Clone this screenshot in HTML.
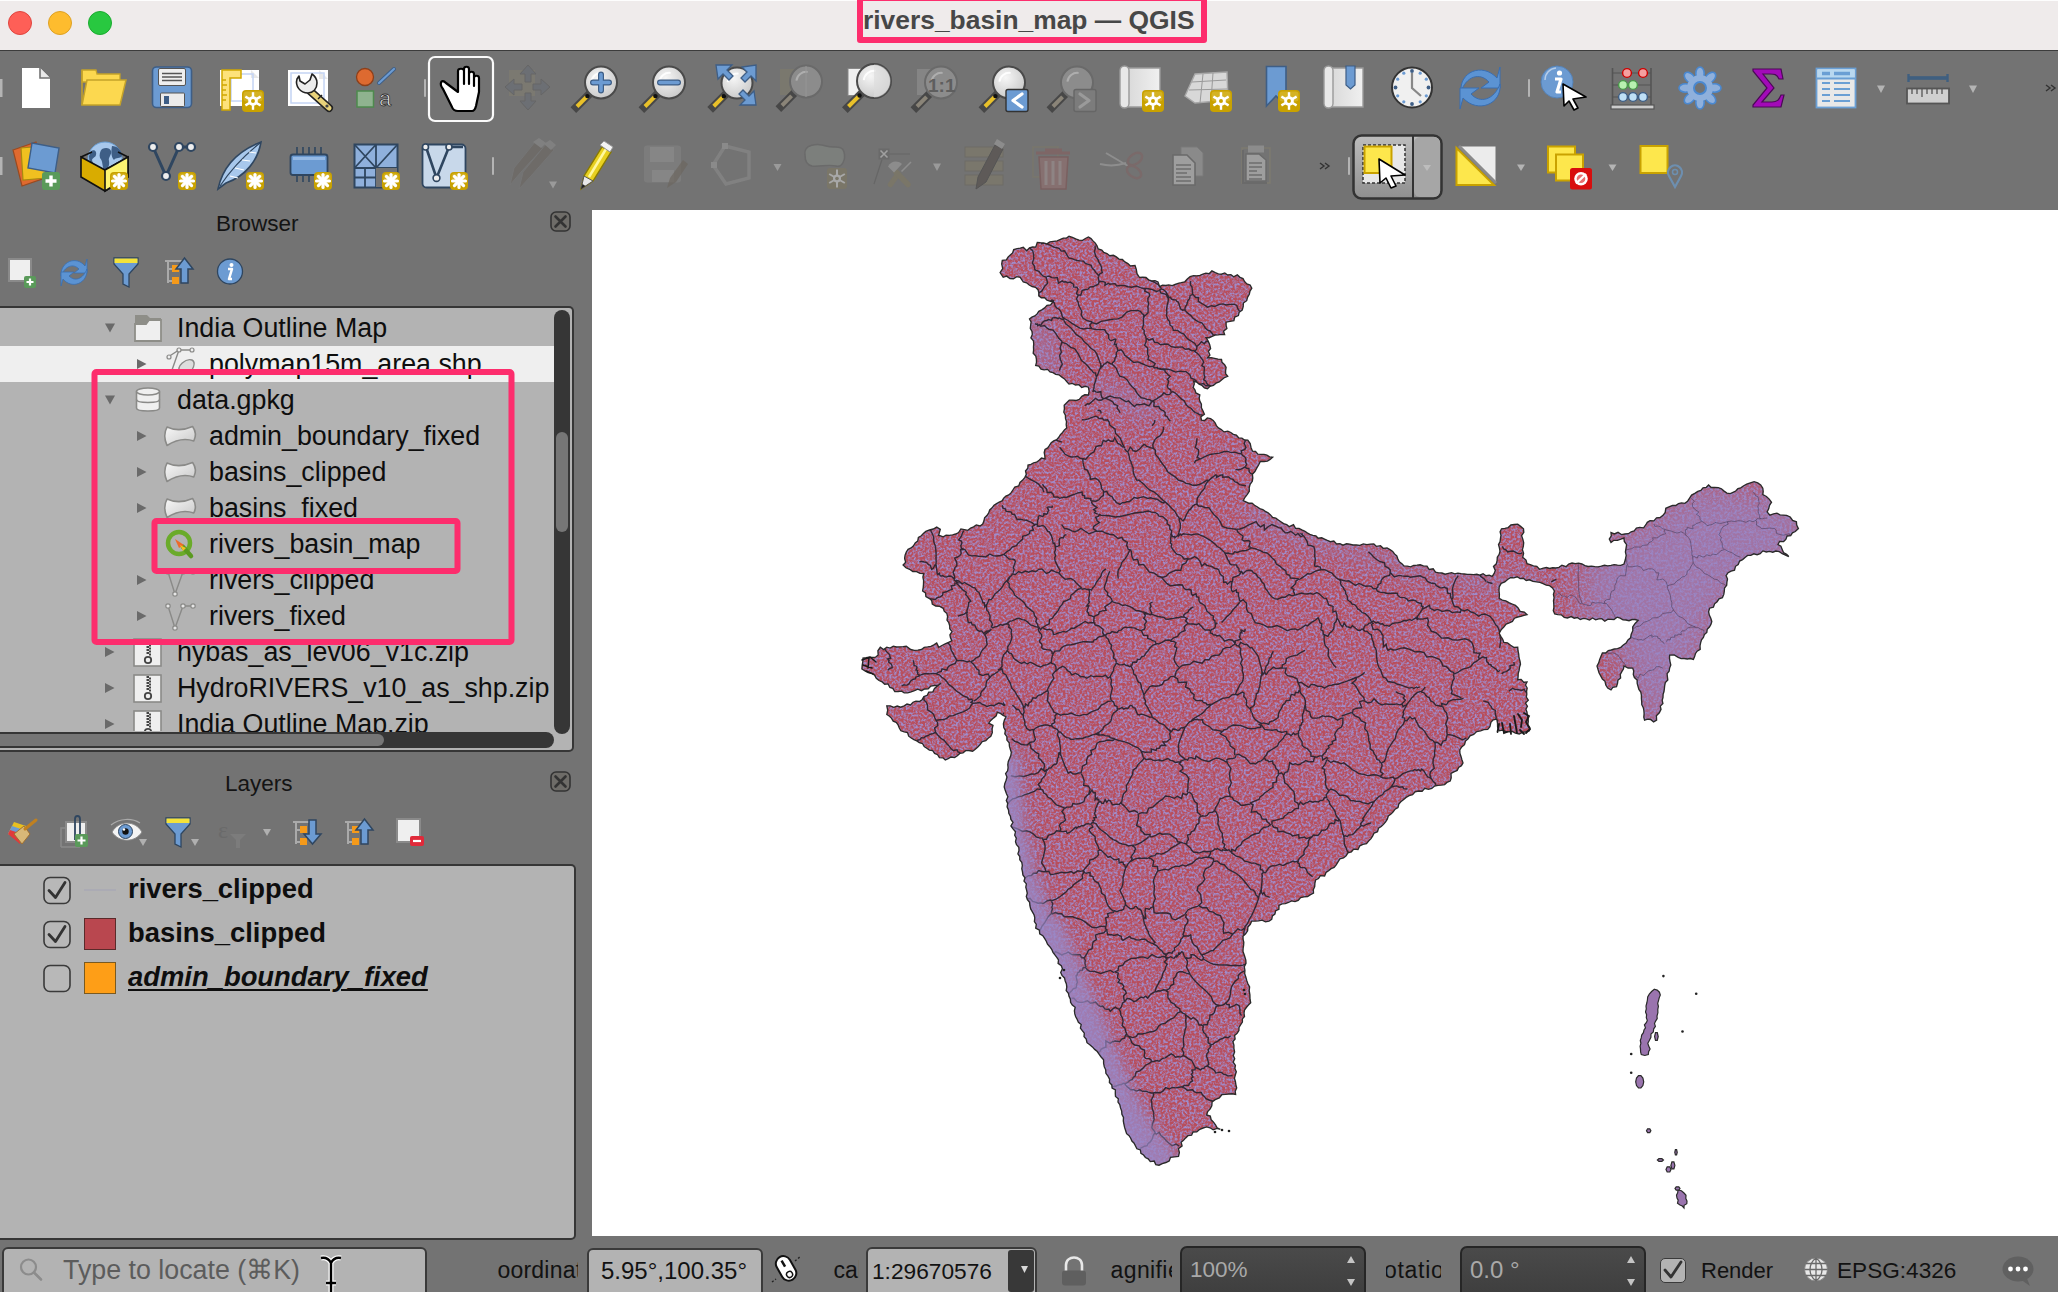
<!DOCTYPE html>
<html><head><meta charset="utf-8">
<style>
*{margin:0;padding:0;box-sizing:border-box}
html,body{width:2058px;height:1292px;overflow:hidden;background:#737373;font-family:"Liberation Sans",sans-serif}
.a{position:absolute}
.t{position:absolute;white-space:nowrap;line-height:1}
#title{left:0;top:0;width:2058px;height:51px;background:#efebeb;border-top:1px solid #fdfdfd;border-bottom:1px solid #3c3c3c}
.tl{position:absolute;width:24px;height:24px;border-radius:50%;top:9.5px}
.pink{position:absolute;border:6px solid #fd2d6d;border-radius:3px}
#map{left:592px;top:210px;width:1466px;height:1026px;background:#fff;overflow:hidden}
.tree{left:0;top:306px;width:574px;height:446px;background:#b3b3b3;border:2px solid #363636;border-left:none;border-radius:0 5px 5px 0;overflow:hidden}
.row{position:absolute;left:0;height:36px;line-height:36px;font-size:26.8px;color:#0e0e0e;white-space:nowrap}
#layers{left:0;top:864px;width:576px;height:376px;background:#b3b3b3;border:2px solid #363636;border-left:none;border-radius:0 5px 5px 0}
.lrow{position:absolute;left:128px;height:44px;line-height:44px;font-size:27.4px;font-weight:bold;color:#0e0e0e;white-space:nowrap}
.box{position:absolute;background:#b3b3b3;border:2px solid #3a3a3a;border-radius:6px}
.dbox{position:absolute;background:linear-gradient(#4a4a4a,#3c3c3c);border:2px solid #262626;border-radius:7px}
</style></head><body>
<div id="title" class="a">
  <div class="tl" style="left:8px;background:#fe5f57;border:1px solid #e0443e"></div>
  <div class="tl" style="left:48px;background:#febc2e;border:1px solid #dea123"></div>
  <div class="tl" style="left:88px;background:#28c840;border:1px solid #1aab2f"></div>
</div>
<div class="t" style="left:863px;top:7px;font-size:26.4px;font-weight:bold;color:#474747">rivers_basin_map — QGIS</div>
<div class="pink" style="left:857px;top:-5px;width:350px;height:48px"></div>

<div id="map" class="a"><svg width="1466" height="1026" style="position:absolute;left:0;top:0">
<defs>
<clipPath id="ind"><path d="M408.1,62.6 L410.7,58.7 L409.7,54.1 L410.3,50.3 L414.4,49.9 L416.0,47.1 L418.3,45.0 L420.6,42.9 L421.7,39.5 L425.2,38.6 L428.3,38.1 L431.3,37.3 L434.7,40.8 L437.5,37.8 L440.6,37.0 L443.7,37.1 L445.3,32.4 L448.4,32.7 L451.6,32.9 L454.6,34.0 L457.8,31.9 L461.4,31.3 L465.2,30.9 L468.5,29.3 L471.3,28.1 L474.5,28.1 L477.0,26.3 L480.4,27.4 L483.7,28.9 L487.0,30.1 L490.6,30.4 L493.4,28.5 L496.4,27.0 L499.0,28.6 L501.0,30.9 L503.3,33.1 L505.0,35.9 L506.2,39.0 L509.8,40.0 L511.8,42.5 L515.0,43.5 L517.7,45.7 L521.4,45.3 L524.3,46.9 L527.0,49.1 L530.4,49.5 L532.9,51.9 L535.9,53.6 L538.4,56.0 L543.0,55.4 L544.3,59.5 L545.0,63.7 L547.4,67.3 L550.7,67.2 L554.0,67.4 L556.6,69.8 L559.6,71.0 L563.0,70.7 L566.0,71.9 L567.6,76.6 L570.5,75.1 L573.8,75.5 L576.8,74.9 L580.2,75.6 L583.1,74.5 L586.1,73.4 L589.2,72.7 L592.8,71.8 L595.3,69.0 L598.1,66.7 L601.6,65.7 L604.8,65.8 L607.9,65.3 L610.9,64.2 L613.9,63.2 L617.1,63.7 L619.9,60.8 L623.3,62.6 L626.3,63.8 L629.4,64.2 L632.8,62.9 L635.6,65.0 L638.9,64.7 L641.7,66.8 L645.3,64.9 L648.0,67.3 L651.0,68.6 L652.7,71.7 L654.9,73.9 L658.1,75.0 L659.8,78.3 L658.0,81.2 L657.3,84.3 L655.5,87.3 L654.7,90.7 L651.4,93.0 L651.2,96.7 L650.2,100.1 L647.2,102.1 L646.4,105.6 L642.7,107.1 L641.9,110.6 L638.0,111.4 L634.1,112.2 L634.1,115.3 L634.9,118.6 L631.5,121.3 L632.6,124.6 L629.4,124.4 L626.3,124.9 L623.1,125.1 L620.1,126.3 L617.2,127.7 L614.0,127.6 L616.2,131.0 L617.7,134.6 L618.6,138.5 L616.4,141.2 L617.9,145.1 L615.6,147.8 L619.1,147.6 L622.6,148.3 L626.0,149.1 L629.5,149.3 L630.0,152.3 L632.6,154.6 L634.1,157.3 L633.6,160.6 L633.6,163.8 L635.7,166.3 L632.5,167.5 L629.8,169.7 L627.2,171.9 L624.0,173.2 L621.4,175.3 L618.0,176.3 L615.5,178.7 L612.4,177.8 L610.0,175.5 L607.1,174.2 L604.6,172.1 L601.6,171.0 L602.3,173.9 L601.2,177.4 L603.0,180.0 L603.9,182.9 L607.8,184.8 L607.2,188.1 L607.8,191.1 L609.4,194.2 L609.4,197.7 L610.9,200.8 L612.4,204.2 L608.9,206.8 L609.4,210.1 L612.6,210.5 L615.3,207.9 L618.6,208.6 L621.2,210.4 L623.1,212.8 L624.4,215.6 L626.4,217.9 L629.3,219.6 L632.0,221.9 L635.8,221.2 L638.8,222.5 L641.3,224.4 L644.4,225.2 L646.6,227.8 L649.9,228.2 L652.5,230.0 L655.8,230.2 L658.2,233.5 L659.0,237.4 L660.4,241.1 L663.5,241.3 L665.8,244.2 L668.9,244.3 L672.0,244.4 L674.9,245.1 L677.6,246.8 L680.6,247.3 L678.1,249.4 L675.4,251.1 L672.0,251.5 L668.3,251.5 L666.6,255.0 L664.7,258.2 L662.9,261.5 L660.4,264.3 L660.8,267.9 L660.3,271.3 L658.1,274.4 L657.2,277.8 L657.3,281.3 L655.3,284.4 L653.0,287.3 L651.2,290.6 L653.9,291.9 L656.7,293.2 L660.1,293.1 L662.5,295.2 L665.1,296.8 L667.7,298.6 L670.8,299.5 L673.3,301.4 L676.1,302.8 L678.5,304.9 L680.6,307.4 L683.8,308.2 L686.3,310.0 L688.9,311.8 L691.6,313.6 L694.7,314.7 L697.3,316.7 L701.5,314.7 L703.5,318.3 L707.0,318.3 L709.8,319.9 L712.6,321.2 L715.2,322.9 L717.9,324.3 L720.8,325.4 L723.9,325.9 L726.2,328.2 L729.7,327.8 L732.5,329.1 L735.3,330.4 L738.4,331.7 L741.8,331.1 L744.6,334.0 L747.9,333.6 L751.0,335.2 L754.5,333.8 L757.8,334.1 L760.9,335.0 L764.4,335.0 L767.9,335.3 L771.3,333.9 L774.9,334.6 L778.3,334.1 L781.8,333.9 L784.5,336.4 L788.5,335.7 L791.2,338.3 L795.0,338.0 L798.0,339.7 L800.7,341.4 L802.5,343.9 L804.8,345.9 L805.9,349.0 L807.3,351.9 L809.9,353.7 L812.0,355.9 L815.3,356.2 L818.6,356.9 L821.7,355.5 L825.0,355.2 L828.2,354.8 L831.4,355.9 L835.0,356.2 L837.2,359.5 L841.2,358.8 L843.5,362.1 L846.8,362.9 L850.0,363.0 L853.1,364.2 L856.4,363.3 L859.6,362.7 L862.7,363.9 L865.9,363.2 L869.1,363.7 L872.3,364.0 L875.4,364.3 L878.5,364.4 L881.6,364.6 L884.8,364.3 L887.8,365.2 L891.1,363.7 L894.0,365.7 L897.2,365.1 L900.2,366.4 L902.2,363.5 L903.3,360.4 L901.5,356.4 L904.3,353.8 L905.1,350.6 L905.3,347.2 L907.2,344.3 L908.0,341.2 L907.4,337.9 L906.5,334.6 L908.1,331.5 L908.5,328.4 L909.0,325.2 L908.1,321.9 L909.5,318.8 L912.9,318.4 L916.2,317.6 L918.9,315.0 L922.3,314.5 L925.7,314.1 L928.6,316.4 L931.5,318.8 L931.8,322.3 L929.6,325.7 L930.8,329.2 L931.7,332.8 L931.3,336.3 L930.4,339.7 L931.6,343.2 L930.7,347.3 L934.0,350.1 L935.0,353.6 L938.2,354.6 L941.4,355.9 L944.8,356.3 L947.5,359.3 L951.3,358.2 L954.4,357.5 L957.6,358.5 L960.7,357.8 L963.9,358.0 L967.0,357.3 L969.9,355.2 L974.0,356.7 L976.7,354.0 L980.0,353.0 L983.2,353.6 L986.6,353.2 L989.9,354.0 L992.9,355.6 L996.1,356.5 L999.5,356.2 L1002.8,356.7 L1006.1,356.8 L1009.3,356.2 L1012.5,355.3 L1015.8,355.9 L1019.0,355.4 L1022.2,354.6 L1025.5,355.1 L1028.8,355.4 L1032.0,354.0 L1033.3,349.8 L1034.2,345.4 L1033.4,342.0 L1034.0,338.4 L1034.6,334.7 L1032.3,331.5 L1032.0,328.0 L1028.8,329.2 L1025.5,330.3 L1021.9,330.3 L1019.0,332.4 L1017.3,329.1 L1019.3,325.9 L1019.0,322.6 L1022.4,323.9 L1026.0,322.3 L1029.4,324.6 L1032.9,324.0 L1036.4,323.7 L1039.1,321.8 L1042.2,321.0 L1044.4,318.1 L1047.7,317.4 L1051.6,317.9 L1053.7,315.0 L1055.3,312.3 L1058.0,310.7 L1061.9,310.9 L1064.5,307.9 L1068.1,307.5 L1071.0,305.3 L1073.2,302.4 L1073.8,298.3 L1077.6,296.6 L1080.5,295.5 L1083.7,295.5 L1086.5,293.7 L1089.5,292.9 L1092.8,293.4 L1095.6,291.2 L1097.6,288.2 L1099.6,285.1 L1102.8,283.3 L1105.8,281.4 L1108.9,280.5 L1111.0,277.8 L1114.3,277.3 L1116.6,275.0 L1119.2,277.5 L1122.8,277.5 L1126.3,277.7 L1129.4,278.8 L1132.1,281.1 L1134.9,283.1 L1138.3,283.6 L1141.0,282.3 L1143.7,281.0 L1145.9,278.7 L1148.8,277.8 L1151.3,276.0 L1154.7,274.2 L1158.4,272.9 L1162.1,271.7 L1165.7,272.9 L1168.7,274.9 L1170.8,278.2 L1171.2,281.4 L1170.8,284.7 L1174.4,286.5 L1177.2,289.1 L1179.5,292.3 L1177.5,295.3 L1176.7,298.8 L1175.1,302.0 L1177.9,305.1 L1181.5,303.9 L1184.9,303.1 L1188.0,304.9 L1191.3,305.1 L1194.6,305.3 L1198.2,307.0 L1200.6,310.5 L1204.4,311.8 L1204.7,315.1 L1206.4,318.6 L1203.3,321.5 L1200.4,322.8 L1198.7,325.7 L1195.1,326.0 L1193.8,329.4 L1191.6,331.6 L1187.6,331.5 L1186.0,334.5 L1188.9,336.3 L1190.2,339.4 L1191.5,342.6 L1194.6,344.2 L1196.8,346.5 L1193.5,345.2 L1190.3,343.7 L1187.3,341.7 L1183.8,341.0 L1180.8,342.2 L1177.4,341.4 L1174.3,342.0 L1170.9,340.9 L1168.2,343.7 L1165.1,344.7 L1161.8,343.8 L1158.8,345.3 L1155.6,345.4 L1153.0,347.4 L1150.6,349.6 L1147.6,351.1 L1146.2,354.5 L1143.5,356.3 L1142.5,360.1 L1139.1,361.1 L1136.1,362.7 L1134.1,365.5 L1135.5,369.0 L1134.9,372.1 L1134.7,375.3 L1132.5,378.1 L1132.3,381.3 L1131.8,384.4 L1130.4,387.6 L1127.0,388.9 L1125.1,391.7 L1122.6,393.8 L1121.4,397.1 L1117.6,398.2 L1116.6,401.7 L1117.3,405.1 L1118.8,408.2 L1119.8,411.5 L1118.9,414.4 L1117.4,417.0 L1115.2,419.3 L1114.8,422.4 L1112.4,424.6 L1111.4,427.5 L1109.5,429.9 L1108.6,432.8 L1108.0,435.9 L1108.2,439.3 L1105.1,441.2 L1103.4,443.7 L1102.6,446.6 L1101.4,449.4 L1098.4,448.5 L1095.3,449.0 L1092.2,448.5 L1089.1,448.6 L1086.2,447.3 L1082.2,445.0 L1077.6,445.1 L1077.5,448.4 L1078.0,451.6 L1078.8,454.9 L1077.6,458.1 L1077.1,461.1 L1075.1,463.7 L1075.4,466.8 L1075.8,470.0 L1073.3,472.6 L1072.7,475.5 L1072.4,478.5 L1072.0,481.5 L1071.1,484.4 L1071.0,487.4 L1070.2,490.3 L1070.9,493.6 L1068.3,496.1 L1069.0,499.3 L1067.3,502.8 L1064.4,505.8 L1064.6,510.1 L1061.6,511.9 L1058.6,509.5 L1055.6,509.2 L1052.6,510.1 L1051.8,507.1 L1052.1,503.9 L1051.9,500.7 L1051.3,497.7 L1049.8,494.7 L1049.7,491.6 L1049.4,488.5 L1049.4,485.2 L1048.8,482.1 L1046.9,479.4 L1046.0,476.3 L1045.2,473.3 L1045.1,470.0 L1042.4,467.5 L1041.3,464.5 L1041.7,461.1 L1040.7,458.1 L1036.1,458.0 L1032.0,456.0 L1031.4,459.1 L1029.8,461.7 L1028.3,464.5 L1028.6,467.9 L1025.9,470.2 L1025.5,473.3 L1024.5,476.6 L1020.8,477.3 L1019.0,479.8 L1015.7,478.0 L1013.8,475.1 L1013.0,471.3 L1010.4,469.0 L1008.7,465.9 L1007.0,462.8 L1006.0,459.4 L1005.0,456.0 L1006.7,452.9 L1007.7,449.5 L1009.0,446.2 L1010.4,443.0 L1013.7,443.0 L1016.3,440.6 L1019.3,440.0 L1022.3,439.0 L1025.5,438.6 L1028.8,437.3 L1031.3,435.0 L1034.1,433.0 L1036.0,429.9 L1038.6,427.8 L1039.2,424.1 L1040.8,420.7 L1040.7,416.9 L1043.1,413.4 L1046.1,410.4 L1043.1,409.5 L1040.1,409.5 L1037.0,410.7 L1034.1,410.0 L1031.0,409.9 L1028.1,408.1 L1025.1,407.2 L1022.0,409.5 L1019.0,409.3 L1015.9,409.2 L1012.8,411.2 L1009.8,408.8 L1006.7,408.9 L1003.6,409.8 L1000.6,408.0 L997.5,410.1 L994.5,408.8 L991.4,408.4 L988.3,409.5 L985.3,407.5 L982.2,408.2 L979.2,406.6 L975.4,408.0 L972.2,407.3 L969.3,404.8 L965.9,404.6 L962.7,403.9 L961.3,400.7 L961.9,397.4 L961.8,394.2 L961.5,390.9 L962.1,387.6 L961.4,384.4 L962.4,381.0 L960.5,377.9 L957.6,375.6 L954.2,375.2 L951.1,373.7 L947.9,372.4 L944.5,371.9 L941.0,371.4 L937.4,369.8 L934.2,370.5 L931.3,368.3 L928.1,368.6 L925.2,366.8 L921.9,367.8 L918.8,367.5 L915.6,369.5 L912.8,371.9 L909.2,373.3 L907.2,376.8 L907.0,380.7 L907.4,384.5 L907.2,388.4 L910.3,390.1 L913.8,390.8 L916.9,392.7 L920.2,394.0 L923.4,395.4 L926.1,397.9 L928.1,401.4 L932.3,402.1 L935.0,404.7 L931.9,405.4 L928.8,406.4 L925.7,407.0 L922.5,408.2 L920.4,411.4 L917.3,412.8 L914.1,414.0 L911.8,417.1 L909.1,419.8 L907.2,423.2 L908.8,426.3 L910.7,429.2 L911.8,432.5 L915.5,432.9 L918.6,435.3 L921.8,437.3 L925.7,437.2 L926.0,440.7 L926.7,444.2 L927.0,447.7 L928.0,451.1 L928.5,454.3 L927.5,457.3 L927.1,460.4 L926.2,463.5 L926.1,466.6 L925.7,469.7 L929.1,469.4 L931.7,472.2 L935.0,472.0 L933.5,475.0 L935.2,478.0 L934.6,481.1 L934.8,484.1 L934.3,487.1 L936.3,490.1 L933.5,493.1 L935.4,496.2 L933.9,499.2 L935.0,502.2 L935.3,505.3 L936.1,508.4 L936.3,511.5 L935.8,514.7 L937.8,517.6 L937.4,520.8 L934.0,521.7 L930.5,522.4 L927.2,524.0 L923.4,523.1 L920.3,521.5 L917.0,521.7 L913.7,521.7 L910.6,520.2 L907.2,520.8 L905.6,517.1 L905.5,513.1 L904.8,509.2 L901.2,509.9 L898.9,512.3 L897.9,516.6 L895.7,519.4 L891.8,519.6 L888.6,520.8 L884.7,521.6 L881.7,524.5 L878.0,525.8 L876.1,528.7 L873.5,531.1 L872.5,534.7 L869.7,537.0 L867.8,539.9 L867.9,543.3 L869.0,546.5 L869.9,549.7 L871.0,552.9 L869.4,555.7 L866.6,557.4 L865.2,560.4 L861.9,561.8 L859.0,563.5 L859.2,567.8 L858.2,571.0 L854.9,572.4 L852.6,574.6 L849.3,575.1 L845.9,575.3 L842.6,576.1 L839.8,578.5 L836.5,579.3 L832.8,578.3 L830.1,581.2 L826.6,581.0 L823.1,581.9 L820.6,584.7 L817.1,585.6 L814.1,587.4 L811.4,589.7 L808.8,591.7 L806.8,594.1 L806.0,597.5 L803.1,599.2 L801.2,601.8 L799.0,604.1 L796.3,606.0 L795.3,609.2 L793.6,611.9 L791.5,614.4 L789.2,616.5 L786.5,618.3 L785.5,621.7 L782.1,623.0 L780.7,625.9 L779.0,628.6 L776.8,630.9 L774.5,633.7 L770.9,634.3 L767.8,635.8 L766.0,639.5 L761.7,639.1 L759.4,641.8 L755.9,642.8 L754.1,645.9 L751.5,648.0 L747.9,648.8 L746.0,651.8 L744.2,654.8 L742.1,657.4 L739.1,658.6 L736.6,660.6 L734.0,662.5 L732.6,666.0 L728.3,665.7 L726.5,668.6 L723.6,670.0 L722.9,673.2 L722.7,676.5 L721.3,679.6 L721.5,683.0 L718.5,684.7 L715.6,686.5 L712.0,686.9 L708.6,687.6 L706.2,690.4 L703.0,691.6 L699.5,690.9 L696.5,692.5 L693.3,693.7 L690.0,693.8 L687.0,695.4 L686.9,699.2 L683.7,700.7 L682.9,704.0 L680.4,705.9 L679.7,709.3 L677.0,711.1 L673.5,711.9 L670.1,710.1 L666.6,710.9 L663.2,711.1 L659.7,711.1 L658.3,714.3 L655.9,717.0 L655.6,720.8 L653.6,723.8 L651.0,726.3 L651.1,729.3 L651.8,732.4 L651.6,735.4 L651.1,738.5 L651.0,741.5 L652.5,745.7 L653.8,750.0 L654.0,753.4 L652.3,756.8 L652.9,760.2 L652.7,763.6 L653.8,767.0 L654.7,770.4 L655.9,773.7 L657.6,776.9 L657.2,780.6 L657.9,784.9 L658.0,789.2 L658.7,792.7 L656.4,795.0 L654.3,797.5 L652.5,800.0 L652.0,803.1 L652.5,806.5 L650.4,808.9 L650.4,812.1 L648.7,814.7 L647.0,817.4 L646.9,820.6 L645.1,823.2 L642.6,825.6 L643.1,829.0 L640.9,831.5 L641.9,835.1 L641.9,838.5 L642.6,841.9 L641.3,845.4 L642.7,848.8 L641.2,852.1 L643.4,855.3 L642.9,858.5 L644.3,861.7 L643.3,865.0 L642.4,868.3 L643.4,871.5 L643.9,874.8 L644.7,878.0 L643.2,881.3 L643.6,884.5 L640.2,883.8 L636.8,884.0 L633.4,884.3 L630.0,884.5 L627.3,888.0 L623.2,889.6 L620.1,891.9 L619.8,895.8 L618.2,898.9 L615.7,901.6 L614.6,905.0 L618.3,906.1 L619.2,909.8 L621.5,912.1 L623.5,914.8 L625.1,917.8 L628.3,919.4 L625.0,918.4 L621.2,919.8 L618.0,917.8 L614.6,916.9 L611.1,918.0 L607.8,919.3 L604.8,921.8 L601.0,922.0 L599.6,925.2 L595.9,925.7 L593.7,927.9 L591.5,930.2 L589.1,932.2 L590.1,935.9 L586.4,938.7 L587.4,942.4 L586.5,946.5 L582.5,946.9 L578.5,947.3 L577.2,950.9 L573.9,952.5 L570.3,953.6 L567.0,955.2 L563.8,954.6 L562.2,951.1 L558.3,951.6 L556.2,948.8 L553.4,947.5 L551.6,945.0 L548.9,943.3 L548.4,939.9 L544.9,938.8 L543.5,936.0 L542.1,933.2 L539.9,931.1 L538.7,928.2 L537.1,925.6 L534.6,923.7 L533.6,920.5 L532.6,917.4 L531.9,914.1 L531.3,910.9 L531.5,907.4 L529.9,904.4 L529.7,901.1 L528.5,897.9 L527.8,894.7 L526.0,892.1 L526.3,888.7 L523.5,886.5 L523.3,883.4 L523.4,880.0 L520.1,878.1 L519.8,874.9 L517.4,872.6 L517.6,869.2 L516.0,866.2 L513.9,863.3 L513.7,859.8 L512.3,856.7 L511.6,853.3 L511.6,849.7 L509.1,847.0 L507.2,844.3 L505.3,841.5 L502.7,839.4 L500.4,836.9 L497.8,834.7 L495.0,832.7 L494.2,829.1 L492.0,826.6 L492.3,823.2 L490.3,820.7 L488.4,818.1 L489.2,814.6 L486.4,812.3 L485.2,809.5 L483.7,806.8 L482.8,803.9 L482.4,800.8 L483.2,797.2 L480.3,795.0 L478.6,792.4 L478.4,789.2 L477.0,786.3 L476.4,783.2 L474.2,780.6 L474.8,777.1 L474.4,773.9 L473.2,771.0 L472.5,767.9 L470.0,765.4 L468.7,762.5 L470.4,758.7 L469.3,755.7 L466.1,753.4 L466.5,750.0 L464.8,747.3 L462.9,744.9 L461.0,742.3 L459.7,739.3 L457.8,736.7 L455.5,734.2 L454.3,731.2 L452.6,728.4 L450.8,725.7 L447.7,723.8 L447.4,720.2 L443.7,718.1 L444.3,714.3 L442.4,711.6 L442.8,707.9 L442.0,704.7 L440.4,701.8 L438.7,698.9 L437.9,695.7 L437.6,692.3 L435.4,689.6 L434.3,686.6 L435.3,683.3 L434.6,680.2 L433.8,677.2 L434.4,673.9 L432.0,671.1 L433.0,667.8 L430.9,664.9 L430.5,661.8 L429.8,658.7 L430.3,655.5 L429.8,652.4 L427.8,649.8 L427.8,646.6 L425.9,643.9 L427.0,640.4 L426.8,637.2 L424.5,634.6 L423.5,631.7 L424.3,628.2 L422.7,625.2 L423.5,621.8 L421.0,618.9 L418.9,616.0 L421.0,612.3 L418.9,609.4 L418.4,606.2 L416.8,603.2 L416.5,599.9 L415.1,596.9 L415.7,593.4 L414.3,590.4 L415.9,586.7 L414.5,583.7 L413.3,580.6 L412.2,577.0 L412.8,573.6 L414.1,570.3 L415.0,567.0 L413.6,563.7 L415.6,560.8 L416.1,557.7 L415.8,554.6 L416.3,551.5 L417.6,548.5 L418.8,545.5 L419.3,542.4 L418.3,539.2 L417.4,536.1 L417.2,532.8 L414.9,530.1 L414.9,526.7 L412.8,523.9 L413.4,520.4 L411.8,517.5 L411.4,513.7 L412.4,510.1 L414.0,506.7 L411.1,505.3 L408.4,503.4 L405.3,502.4 L404.2,505.9 L401.4,508.1 L398.8,510.4 L396.7,513.2 L401.0,515.3 L400.1,518.9 L400.3,522.7 L398.8,526.2 L396.1,528.3 L393.8,530.7 L390.2,531.7 L388.1,534.5 L385.8,537.0 L383.3,539.3 L380.6,541.2 L376.9,540.5 L373.6,540.7 L371.0,542.8 L367.8,543.4 L365.3,545.7 L362.6,547.6 L359.0,547.0 L356.2,548.7 L353.3,550.0 L351.0,547.8 L347.4,547.6 L345.6,544.7 L342.6,543.5 L340.7,540.7 L337.4,540.1 L334.8,538.3 L332.2,536.6 L330.5,533.5 L327.3,532.7 L324.8,530.9 L321.9,529.6 L319.2,528.0 L316.7,526.2 L315.5,522.5 L312.2,521.8 L308.9,520.8 L307.3,518.0 L306.1,514.9 L304.2,512.4 L301.2,511.1 L299.6,508.3 L297.5,506.2 L294.8,504.5 L295.7,500.1 L294.8,495.8 L298.3,495.8 L301.8,497.3 L305.2,496.0 L308.7,497.2 L312.2,495.8 L315.0,494.0 L318.5,494.9 L321.0,492.2 L323.9,491.1 L327.3,491.5 L330.1,489.7 L331.9,486.6 L335.2,485.3 L336.8,482.1 L340.9,481.8 L342.5,478.5 L345.8,475.8 L349.0,473.1 L346.1,475.3 L342.4,475.5 L338.9,476.1 L336.2,478.8 L332.6,479.0 L329.5,480.7 L325.8,479.2 L322.5,480.7 L319.1,481.9 L315.7,482.8 L312.2,482.8 L309.6,481.1 L306.1,481.5 L302.8,481.6 L300.8,478.4 L297.9,477.5 L296.1,473.9 L292.7,474.2 L290.2,471.9 L287.0,470.5 L284.3,468.4 L282.6,465.1 L279.7,463.3 L276.2,462.5 L273.0,460.9 L269.9,459.0 L270.2,455.4 L270.8,451.8 L271.0,448.2 L274.1,447.7 L277.1,447.1 L280.4,447.5 L283.5,447.2 L286.2,445.0 L285.9,440.8 L288.3,437.3 L291.6,439.6 L294.8,437.2 L298.1,438.1 L301.3,436.2 L304.6,437.0 L307.8,436.8 L311.1,436.6 L314.3,436.3 L318.7,439.5 L322.3,440.3 L325.9,440.1 L329.5,439.5 L332.2,437.4 L335.6,436.9 L338.9,436.3 L341.9,434.9 L344.7,433.0 L346.8,437.3 L349.9,435.5 L353.2,433.9 L356.5,432.4 L359.8,430.8 L358.5,427.9 L357.9,424.9 L360.0,421.5 L357.8,418.8 L357.7,415.7 L356.8,412.7 L355.0,410.1 L355.6,406.6 L354.9,403.5 L352.2,401.2 L351.2,398.3 L347.8,396.4 L343.7,396.0 L340.3,394.0 L339.7,390.4 L337.1,388.3 L333.9,386.6 L333.5,382.9 L330.6,381.0 L331.2,377.6 L331.5,374.1 L331.6,370.6 L330.9,367.1 L331.7,363.7 L328.0,363.4 L324.6,361.6 L320.8,361.5 L317.6,359.3 L313.9,357.8 L311.1,355.0 L313.7,352.2 L312.6,348.5 L313.1,345.1 L314.3,342.0 L316.1,339.3 L319.1,337.9 L321.5,335.8 L323.2,333.0 L325.7,331.1 L326.4,327.4 L329.3,325.8 L331.4,323.4 L333.8,321.4 L337.5,320.0 L341.3,319.0 L344.7,317.1 L348.3,319.3 L346.6,325.2 L351.2,326.8 L354.1,325.2 L357.4,325.4 L360.6,324.9 L363.7,324.0 L366.6,322.6 L368.9,318.9 L372.4,319.6 L375.9,320.3 L378.6,318.0 L381.6,316.9 L384.3,314.9 L388.0,316.0 L390.7,314.1 L391.9,311.1 L392.6,307.8 L394.9,305.6 L396.7,303.0 L397.7,299.9 L400.1,297.8 L402.0,295.3 L404.6,293.7 L407.2,292.2 L410.0,290.9 L411.7,288.3 L413.9,286.1 L416.8,285.0 L419.0,282.9 L420.9,280.0 L422.8,277.0 L426.7,275.9 L428.0,272.4 L430.7,270.1 L432.9,267.4 L434.3,264.4 L433.5,261.0 L435.8,258.2 L436.0,255.0 L439.0,254.4 L441.6,252.9 L444.6,252.2 L447.1,250.2 L449.5,248.0 L453.0,248.8 L452.8,245.7 L452.2,242.6 L453.0,239.5 L455.7,237.9 L457.5,235.4 L459.2,232.7 L461.7,230.9 L464.7,229.6 L466.8,227.3 L468.4,224.6 L470.6,222.5 L472.4,219.9 L474.7,217.9 L474.2,214.7 L474.5,211.5 L473.5,208.4 L473.4,205.2 L471.8,202.2 L472.4,198.9 L472.2,195.3 L474.7,192.7 L477.3,190.2 L480.8,190.1 L484.4,190.5 L487.5,189.3 L489.9,186.4 L492.8,184.8 L496.4,185.0 L497.1,181.1 L496.4,177.2 L493.2,176.3 L489.7,177.4 L486.9,174.7 L483.5,175.0 L480.4,173.4 L477.0,174.1 L474.7,171.5 L472.5,168.9 L469.6,166.9 L466.9,164.8 L463.7,164.4 L461.0,162.7 L458.0,161.9 L455.6,159.4 L452.1,159.8 L449.0,159.1 L446.8,156.1 L443.7,155.5 L444.5,152.3 L444.4,149.2 L443.8,146.1 L441.2,143.2 L441.6,140.1 L441.5,136.9 L441.7,133.8 L441.4,130.7 L438.9,127.9 L440.3,124.5 L440.0,121.4 L438.3,118.4 L438.7,115.2 L439.1,111.9 L437.5,109.0 L439.9,107.1 L442.8,105.9 L445.1,103.9 L446.8,101.3 L449.8,99.8 L452.6,97.9 L455.0,95.4 L458.6,94.8 L460.8,92.0 L457.8,91.2 L455.0,90.1 L452.7,87.7 L449.3,87.7 L446.8,85.9 L446.8,82.7 L446.0,79.7 L443.5,77.3 L440.2,76.5 L437.2,75.0 L434.6,72.8 L431.3,72.0 L428.2,67.3 L424.8,66.6 L421.4,68.7 L418.0,68.5 L414.6,66.1 L411.2,67.3Z"/></clipPath>
<filter id="tex" x="0" y="0" width="100%" height="100%" color-interpolation-filters="sRGB">
<feTurbulence type="fractalNoise" baseFrequency="0.42" numOctaves="2" seed="5" result="n"/>
<feColorMatrix in="n" type="matrix" values="1 0 0 0 0 1 0 0 0 0 1 0 0 0 0 0 0 0 0 1"/><feComponentTransfer><feFuncR type="linear" slope="3.0" intercept="-1.16"/></feComponentTransfer><feColorMatrix type="matrix" values="-0.0941 0 0 0 0.7216 0.2431 0 0 0 0.3059 0.4353 0 0 0 0.3608 0 0 0 0 1"/>
</filter>
<filter id="bl" x="-50%" y="-50%" width="200%" height="200%"><feGaussianBlur stdDeviation="10"/></filter><filter id="bl3" x="-50%" y="-50%" width="200%" height="200%"><feGaussianBlur stdDeviation="6"/></filter><filter id="bl2" x="-50%" y="-50%" width="200%" height="200%"><feGaussianBlur stdDeviation="18"/></filter>
</defs>
<g clip-path="url(#ind)">
<rect x="260" y="20" width="960" height="970" filter="url(#tex)"/>
<g fill="none" stroke="#9484c4" stroke-linecap="round" opacity="0.5" filter="url(#bl)"><polyline points="411,550 418,620 430,670 450,725 480,800 508,870 530,920 558,952" stroke-width="30"/><polyline points="443,110 458,160" stroke-width="22"/><polyline points="508,180 558,200" stroke-width="16"/><polyline points="658,305 738,335 808,355 888,370 948,375" stroke-width="12"/></g>
<path d="M988,350 L1108,270 L1228,290 L1208,350 L1138,390 L1108,450 L1073,520 L1048,520 L1028,440 L988,410 Z" fill="#9784c2" opacity="0.72" filter="url(#bl2)"/>
<path d="M467.6,237.2 470.5,240.7 473.1,244.3 476.2,245.8 479.2,247.0 482.4,246.9 485.6,246.2 487.8,248.1 490.5,248.7M489.9,209.7 492.6,209.9 496.2,208.8 500.2,207.3 503.8,206.2 505.7,207.1 507.0,208.6 510.4,208.2 511.7,210.1 515.6,209.8 517.1,212.0 517.9,215.2 520.4,217.1 523.0,219.0 523.5,223.4 526.0,225.7 528.2,228.2 529.7,231.6 531.1,235.2 532.7,238.2M532.5,236.9 530.4,236.9 528.0,234.3 525.8,233.5 522.7,227.8 521.1,231.2 518.8,231.3 516.2,229.8 514.0,231.6 511.3,230.4 509.5,235.8 506.8,235.8 504.1,236.6 501.9,241.9 499.1,243.5 496.4,246.1 493.7,249.5 490.5,248.3M469.6,314.3 470.9,316.3 472.6,318.8 474.7,318.8 477.0,319.3 479.8,320.9 482.7,321.7 485.7,320.6 488.9,318.4 492.8,321.0 497.0,323.8 500.8,322.3 504.9,320.9M526.2,368.5 525.8,364.4 526.2,360.2 528.6,356.6 529.9,352.3 533.2,348.6 535.8,344.5 537.7,339.9M505.0,321.2 510.1,321.1 513.6,323.0 517.5,324.2 521.4,324.7 523.9,326.7 526.1,328.5 530.0,327.4 531.0,329.7 532.6,330.6 533.9,331.6 535.4,332.2 534.6,335.6 535.5,336.9 536.0,339.1 537.9,340.0M450.5,274.2 452.2,276.9 454.5,278.8 455.2,282.4 459.3,282.2 461.1,284.3 462.0,287.1 465.7,286.9 467.6,288.3 471.9,287.0 474.4,287.5 479.0,285.5 482.8,284.2 486.8,282.7 490.1,282.0 490.4,285.2 492.7,285.8 492.8,288.3 495.9,288.3 498.8,288.7 498.9,291.0M505.2,321.3 501.3,318.7 501.8,316.3 505.0,314.2 507.5,312.4 504.9,310.6 504.8,309.0 503.6,307.4 506.1,306.4 507.0,305.3 507.7,304.1M500.1,290.6 499.6,292.6 500.8,294.3 502.6,295.9 504.9,297.5 501.6,299.6 503.8,301.1 502.5,302.8 505.7,304.1M490.8,248.1 491.0,252.4 491.8,255.9 492.7,259.2 495.3,260.1 496.6,262.9 498.0,265.6 498.4,269.3 503.4,268.3 506.1,269.9 508.1,272.4 509.2,275.5 509.6,278.8 511.7,281.1M498.9,290.7 503.9,291.2 506.9,289.8 508.8,287.2 511.5,285.3 511.5,280.4M538.5,339.2 539.4,342.0 539.9,346.3 541.4,349.9 545.7,349.3 546.9,355.0 551.5,354.4 554.3,358.1 557.4,362.1 561.7,362.8 565.5,365.4M624.9,413.1 623.0,413.0 622.8,410.6 621.2,409.4 621.3,405.9 619.0,404.8 617.2,403.0 615.0,401.4 614.0,398.4 612.8,395.6 610.6,394.0 608.3,392.9 607.0,390.8 606.7,387.2 604.5,386.7 604.0,383.8 600.6,385.5 599.4,383.7 599.1,380.0 597.0,379.3 594.0,379.8 591.9,378.1 590.3,375.0 587.0,374.7 582.8,375.2 578.3,375.7 575.0,373.6 572.2,370.5 569.4,367.3 565.1,365.9M826.7,409.0 830.2,409.1 835.5,408.1 836.4,410.8 835.5,415.3 837.6,417.7 839.2,421.1 843.5,422.5 846.7,425.0 849.5,428.1 856.1,427.8 860.3,429.7 865.9,430.1 872.9,428.8 877.0,430.1 879.8,432.4 881.2,435.8 882.0,439.0 881.9,442.6 885.0,443.0 888.2,443.2 886.3,447.3 887.5,448.6M825.7,410.1 824.2,407.6 819.7,410.5 817.8,409.4 814.4,410.7 812.0,410.5 808.6,412.1 805.9,412.7 803.3,412.9 800.5,413.5 797.1,416.3 795.0,415.4 792.6,415.7 790.6,413.8 788.3,414.0 786.0,412.1 783.8,413.0 781.4,411.0 779.4,412.0M778.7,411.6 781.0,413.4 779.9,414.0M779.5,414.0 781.0,419.2 782.9,419.8 785.2,419.1 787.0,420.1 788.6,421.5 789.7,423.8 791.0,425.4 790.9,429.7 791.3,432.8 791.4,436.8 794.2,434.4 794.8,437.8 796.0,440.2 798.9,438.8 801.1,440.0 804.1,439.9 808.1,438.4 812.0,437.8 815.6,438.7 819.3,440.0 822.9,441.9 827.8,441.5 832.1,442.7 834.7,447.0 839.9,446.4 843.7,447.9 847.4,449.4 849.6,452.3 850.8,455.9 854.1,456.5 856.1,458.3 857.5,460.2 859.2,461.6 861.6,462.2 862.0,464.4M862.5,463.9 865.8,462.5 869.0,460.1 872.3,458.6 875.5,457.9 878.6,456.6 881.7,452.8 884.7,451.2 887.6,448.7M827.7,476.8 825.5,477.8 824.5,477.0 821.7,478.5 820.0,477.4 817.1,478.1 814.6,477.1 811.7,476.1 808.7,474.9 805.3,474.3 802.3,472.5 799.0,472.0 795.9,471.5 793.7,468.1 791.2,467.1 789.7,463.3 788.4,459.4 787.0,457.7 786.0,454.9 785.3,452.1 784.8,448.6 784.5,444.4 784.2,440.4 783.4,438.0 782.2,436.9 781.5,432.5 780.3,429.7 779.3,424.8 777.2,423.7 775.2,421.4 772.6,421.1 770.3,418.7M869.3,487.9 866.2,486.3 862.6,485.0 859.3,483.7 860.2,480.9 859.4,478.8 859.2,476.6 860.1,473.9 860.5,471.5 862.2,468.6 861.8,466.5 861.3,464.5M771.2,420.5 772.0,417.4 773.3,415.1 775.5,414.9 777.0,413.1 779.3,413.1M908.1,460.5 906.0,461.6 904.1,459.0 902.5,458.1 901.1,457.1 899.7,456.3 898.8,454.8 897.0,454.7 896.3,452.9 895.1,452.0 894.4,450.3 894.6,447.5 892.6,447.7 891.0,446.9 887.1,449.1M798.2,363.2 797.4,365.5 792.8,366.6 790.5,368.4 789.1,370.6 789.0,373.1 786.1,374.6 785.9,376.9 784.2,378.7M798.6,362.8 800.5,365.0 802.3,366.9 807.1,365.4 810.0,365.9 812.9,366.2 816.0,366.2 818.3,367.3 821.7,366.8 824.9,366.3 828.2,365.8 830.7,367.1 833.4,368.1 835.1,371.0 837.5,372.5 840.0,373.3 842.8,373.4 844.3,375.6 846.2,376.7 848.0,377.7 850.0,377.9 852.5,377.1 853.8,378.0 855.2,378.4 855.3,381.5 855.9,383.4 857.2,383.4 858.4,383.5 858.7,387.3 859.7,389.3M784.5,378.9 785.2,380.9 787.7,382.1 792.0,382.5 795.1,383.5 800.5,383.3 805.2,383.2 806.1,385.7 808.2,387.4 812.3,387.6 814.9,388.9 816.2,390.9 821.2,390.0 823.7,390.8 825.2,392.3 827.3,393.0 829.6,393.5 829.2,396.0 831.0,396.7 829.9,399.8M830.1,399.5 833.9,397.3 837.5,395.3 838.2,398.3 840.3,399.3 842.4,400.4 845.4,399.4 847.7,400.1 850.1,401.4 852.6,400.9 855.0,400.3 857.4,400.7 860.4,402.8 862.7,402.1 865.2,401.9 868.3,402.5 869.3,399.7M859.8,389.2 860.8,392.9 862.4,396.5 866.0,397.0 869.0,399.8M866.1,365.6 865.2,367.4 863.9,368.9 863.1,370.8 862.4,372.8 861.5,374.5 861.0,376.7 860.5,378.9 860.6,381.9 860.9,385.0 860.9,387.8 859.6,389.6M776.4,341.9 779.3,344.3 781.6,347.1 784.6,349.5 787.9,351.5 792.6,352.8 793.0,356.2 796.2,357.9 798.3,360.1 798.1,363.3M747.1,369.4 748.8,371.4 748.5,373.6 749.5,375.7 751.3,377.5 752.1,379.6 753.6,381.2 753.6,383.6 754.9,385.2 755.4,387.3 755.5,389.7 757.1,391.0 758.8,392.1 760.0,394.1 762.7,394.6 764.3,396.4 765.7,398.9 768.2,400.3 770.2,402.6 773.4,403.7 775.7,405.9 777.8,408.5 779.4,411.7M746.7,369.3 749.1,369.9 751.6,370.5 754.1,371.1 756.8,370.8 759.2,372.4 761.4,374.0 763.5,375.4 767.0,373.5 769.3,374.3 771.4,375.5 773.8,376.3 777.0,375.9 779.6,376.6 781.3,378.7 784.8,378.5M826.3,409.5 825.3,406.7 827.8,403.1 830.1,399.6M908.2,438.0 907.8,437.5 908.2,434.4 908.8,429.4 908.3,427.9 908.0,423.3 907.0,420.0 905.5,416.4 903.7,414.8 901.3,410.4 898.3,406.5 895.4,405.2 892.4,404.0 889.5,404.6 886.6,406.2 882.6,403.1 879.1,402.0 875.4,399.5 872.4,401.0 869.2,399.6M629.6,412.5 631.3,410.7 633.2,408.8 634.9,406.6 637.1,404.8 639.1,402.7 641.0,399.8 643.2,397.6 645.4,395.0 647.7,392.2M744.1,457.5 741.6,454.9 739.9,452.1 738.0,449.0 736.1,445.8 736.4,442.5 736.4,438.9 733.2,435.4 732.3,431.8 732.1,428.1 732.3,424.3M647.7,391.8 651.1,389.7 652.6,391.5 654.6,393.1 654.5,398.8 656.1,402.3 659.4,403.7 661.0,408.5 663.3,412.8 667.6,413.6 671.7,414.8 675.4,417.0 679.9,417.0 684.9,415.5 688.6,417.0 692.0,418.9 695.3,420.7 699.5,419.2 703.1,418.9 705.8,420.0 709.5,418.0 713.5,415.1 715.5,415.9 719.5,412.4 722.6,410.7 726.2,407.7 727.2,410.2 728.0,412.8 729.9,413.8 728.9,419.6 731.0,420.9 731.4,425.2M770.3,418.7 768.4,420.2 766.1,420.3 763.2,418.0 760.4,415.6 758.7,417.9 756.4,417.0 754.4,416.7 752.2,413.1 750.5,416.8 748.6,414.7 746.9,410.7 745.4,408.3M732.0,424.5 735.9,426.3 737.7,423.1 739.9,421.3 741.7,419.0 742.3,413.4 743.9,411.8 744.9,408.5M565.6,365.8 570.2,367.4 573.9,366.4 576.8,363.3 580.4,361.7 584.1,360.1 588.8,360.2 590.2,354.8 593.8,353.0 595.7,349.0M648.2,391.4 647.3,389.6 647.0,387.4 646.3,385.5 646.4,382.9 644.6,382.4 644.3,379.9 640.6,381.9 639.5,380.2 639.2,377.1 639.9,372.7M640.4,371.9 638.3,371.6 635.5,374.2 633.9,372.1 631.7,372.5 631.2,366.4 629.4,365.5 627.9,363.4 626.7,359.7 624.9,358.8 622.8,358.6 621.0,357.1 619.0,356.3 616.9,355.9 614.7,355.3 612.8,353.4 609.8,356.1 608.0,351.3 605.5,348.4 602.6,346.6 599.2,348.7 595.8,349.3M506.4,304.1 508.9,305.2 513.0,305.5 516.9,305.7 520.0,306.3 523.2,307.0 527.8,306.5 532.8,305.5 538.0,304.1 542.8,303.0 547.3,302.5 551.6,302.0 556.3,301.0 559.4,302.1 563.0,302.5 565.6,303.9 566.9,306.1 570.8,306.6 572.8,308.6 575.1,310.6 575.2,313.8 577.8,315.7 577.8,318.9 579.7,320.8 579.2,323.8M578.8,323.7 579.1,326.5 578.5,328.8 578.9,330.8 578.4,332.9 579.8,334.2 579.1,336.9 580.2,338.5 581.5,340.3 583.0,342.2 584.8,344.2 587.8,344.9 590.3,346.5 592.1,349.2 596.5,348.2M746.7,369.5 744.2,367.8 742.0,365.5 740.0,363.0 737.2,362.0 734.8,360.6 732.4,359.7 729.6,359.8M729.7,359.9 728.6,358.7 728.2,357.0 726.3,356.7 725.3,356.1 723.6,356.3 722.7,356.0 722.7,354.5 722.9,352.8 723.2,350.6 723.2,348.4 722.7,346.4 722.8,343.2 722.7,339.7 721.9,336.8 719.3,335.8 716.0,335.2 715.1,331.3 713.3,328.3 711.3,325.4M710.9,323.9 709.2,323.9 711.1,325.5M745.2,409.7 744.8,404.5 743.8,401.2 740.9,402.1 741.0,396.4 738.8,395.7 736.7,394.9 735.6,391.5 734.3,388.3 731.7,388.1 729.6,386.1 727.4,384.0 724.8,382.5 721.1,384.3 718.4,383.3 715.0,384.0 712.0,383.8 709.4,383.1 706.0,384.1 702.4,385.3M640.4,372.5 640.9,367.5 644.2,366.4 647.4,364.9 649.1,361.8M702.3,385.6 699.5,385.5 696.9,384.6 693.0,387.3 689.8,387.3 685.7,389.2 682.5,388.6 679.7,386.8 677.4,384.2 675.4,380.9 673.2,378.2 672.0,373.9 669.7,371.8 668.1,368.4 665.7,366.9 664.0,363.9 661.5,363.0 659.7,360.5 657.0,360.3 654.2,360.8 650.9,363.8 649.3,360.7M729.5,359.8 727.3,360.0 725.1,360.6 723.0,361.4 720.8,362.7 718.6,363.9 717.0,364.0 715.7,363.6 713.3,365.5 710.7,367.4 708.0,369.2 705.7,369.6M702.5,385.3 702.4,383.1 701.3,381.3 701.9,379.3 699.1,377.9 701.2,376.0 703.0,374.2 703.9,372.6 703.8,371.1 706.4,369.4M653.9,275.7 650.8,275.2 647.6,274.7 645.4,272.7 642.6,271.7 641.1,269.3 638.4,268.6 636.8,266.9 633.8,267.0 630.8,267.3 630.8,264.9 628.5,265.2 624.4,267.6 624.9,265.4 623.9,264.8 620.0,267.6 616.0,271.1M571.4,216.7 571.4,219.2 570.9,221.6 569.4,223.8 567.9,226.0 564.9,227.5 563.0,229.6 561.8,232.1 560.8,234.7 561.3,238.3M616.1,270.9 615.1,270.2 611.1,272.7 607.4,274.5 604.2,275.2 600.8,275.3 597.8,274.0 593.9,273.4 590.6,271.2 586.3,270.1 583.1,266.9 579.3,264.4 575.6,261.7 573.3,257.5 570.5,254.0 568.1,250.5 565.9,247.1 563.4,244.4 563.4,240.2 561.1,237.9M532.6,238.7 534.2,241.0 535.9,241.8M560.8,238.4 558.4,237.7 556.4,236.8 554.5,236.4 553.4,235.0 552.1,234.4 550.0,236.2 547.7,239.0 546.4,239.8 545.0,241.0 543.7,241.5 542.6,241.0 541.2,240.9 539.9,238.8 538.2,237.2 536.1,241.5M511.3,282.3 514.8,281.4 516.2,284.4 518.3,285.8 520.4,286.9 521.5,289.6 523.2,290.7 524.4,292.7 526.2,293.3 527.8,294.4 530.4,292.7 532.3,292.8 534.7,291.8 537.1,291.7 539.7,289.7 542.2,287.5 545.4,288.2 548.4,287.4 551.5,286.7 555.8,288.4 558.6,287.8 562.2,288.8 565.1,289.2 569.2,292.0 571.7,292.9 572.8,291.7 576.1,294.6M535.8,241.7 536.7,244.4 537.4,247.1 537.9,250.0 538.9,251.4 539.3,253.6 540.0,254.7 540.3,256.8 541.1,257.4 541.1,260.6 541.5,263.3 542.3,265.3 543.4,267.5 544.7,270.0 547.1,270.2 549.4,272.3 552.1,274.5 554.8,277.5 557.9,280.2 561.9,281.9 565.5,284.8 568.9,288.2 572.4,291.4 576.1,294.4M658.5,338.4 655.7,339.8 653.0,340.8 650.3,340.8 647.8,341.3 645.4,342.4 642.8,341.7 640.9,344.0 638.6,343.9 636.3,343.0 634.5,343.3 632.5,342.6M659.1,337.4 656.9,336.7 657.6,334.3 658.1,331.8 656.7,330.5 652.3,331.0 650.0,329.7 651.1,326.0 648.4,324.3 645.8,322.1 644.5,318.9M644.0,319.3 639.6,318.6 634.8,318.0 630.4,316.5 628.2,311.7 625.4,307.6 622.0,304.7 619.3,301.1 616.9,297.7 612.6,297.5 609.6,296.2 606.5,296.0 605.1,294.3M605.2,294.2 603.2,294.4 601.0,295.8 598.1,299.7 597.4,299.6 595.8,302.1 594.4,304.8 593.3,307.3 592.9,308.4 592.6,309.1 592.3,309.2 591.4,310.8 590.7,310.7 589.8,309.8 588.6,308.4 587.4,308.6M632.3,342.2 630.2,340.3 628.0,338.0 625.3,336.5 622.9,334.0 620.3,331.9 617.5,329.8 614.6,328.1 611.5,326.4 608.4,325.1 605.2,323.9 602.2,324.2 599.2,325.0 596.3,324.4 593.7,324.1 591.4,323.8 589.4,325.3 588.2,324.1 586.7,325.9 586.5,324.4M586.3,324.8 586.4,323.9 586.8,322.8 586.9,322.5 587.1,321.6 587.7,319.8 588.4,317.8 588.3,315.9 588.3,313.4 587.4,310.9 587.0,308.0M706.6,368.7 704.4,368.6 701.8,368.3 698.4,368.1 697.7,365.3 694.3,364.1 693.8,360.6 690.5,358.6 687.8,356.1 684.3,354.0 682.9,350.5 680.1,347.9 677.7,345.2 674.9,343.0 671.0,342.2 668.4,340.6 665.6,339.7 663.2,338.7 660.8,338.1 658.6,337.7M648.8,362.1 647.0,361.1 646.8,358.3 645.1,357.2 644.7,354.9 642.1,354.9 639.4,354.9 637.7,353.6 637.1,351.3 635.6,349.5 634.8,347.1 633.7,344.7 632.4,342.2M711.2,325.6 708.7,326.6 706.0,323.5 703.6,325.2 701.1,323.0 698.7,321.3 696.0,322.8 693.4,322.9 691.1,320.7 689.1,318.0 686.6,317.6 684.3,316.4 682.0,315.5 679.9,314.5 676.5,316.5 672.5,319.9 672.1,314.6 668.5,316.8 666.3,315.1 664.1,311.7 660.3,313.3 656.2,315.2 652.1,317.5 648.0,319.0 644.1,319.4M616.6,270.4 614.2,273.7 612.8,276.1 613.0,276.9 612.7,278.1 608.9,282.6 607.6,284.8 605.5,287.9 605.1,289.7 605.0,291.7 604.9,294.2M576.1,294.6 579.6,298.3 582.6,301.0 585.3,305.6 587.3,308.0M579.2,323.7 580.1,325.5 580.9,327.0 582.4,326.6 582.9,327.8 584.2,326.6 584.9,326.3 585.6,325.6 586.4,324.9M552.6,78.8 548.5,77.7 544.4,76.1 539.8,77.3 535.8,76.7 532.2,75.4 528.4,75.5 524.9,75.9 523.0,73.8 520.4,73.9 517.8,74.3 516.5,73.3 512.9,75.2 513.3,72.6 512.0,71.9 510.3,71.4 507.5,71.5M552.3,78.4 556.4,78.7 560.4,79.6 564.4,81.5 567.2,80.7M567.2,80.4 568.0,79.8 568.4,79.0M569.4,79.1 568.3,76.8 566.5,74.7 563.0,72.7 559.7,70.8 556.9,68.9 552.4,67.2M503.0,35.5 503.3,38.4 502.5,41.1 503.0,43.8 503.7,46.5 506.0,49.5 506.7,52.0 508.7,55.0 509.6,57.6 509.5,59.9 510.3,62.5 507.6,64.1 506.7,66.3M506.1,66.4 506.6,69.2 507.0,71.8M448.9,33.7 453.2,32.9 456.2,34.4 459.2,35.6 461.8,37.2 464.8,37.7 467.4,38.6 469.2,41.1 472.3,40.7 474.0,43.1 475.4,46.0 477.1,48.2 479.9,48.6 482.4,49.6 485.0,50.5 488.0,50.9 491.4,51.1 493.3,53.3 496.3,54.3 499.1,55.4 500.3,58.3 502.4,60.1 503.7,62.4 505.5,64.1 506.8,66.1M647.5,101.0 645.8,98.7 644.8,95.4 641.9,94.2 638.0,94.4 634.0,95.0 631.1,93.9 627.3,94.4 622.7,96.4 619.6,95.7 615.5,97.1 613.0,95.4 610.6,94.0 608.3,92.6 606.3,91.3 606.4,87.4 603.6,87.5 602.3,86.1 601.1,84.4M625.4,126.3 623.9,124.9 621.5,125.2 620.0,123.3 618.3,121.1 615.7,120.2 613.5,118.4 611.8,115.3 609.8,112.8 606.5,111.8 603.7,110.1 601.0,108.3 599.1,105.8 596.7,103.9 594.5,102.0 592.7,99.9M600.8,84.3 598.2,85.4 597.6,88.7 596.0,90.4 595.3,92.8 594.7,94.9 593.6,96.3 593.0,98.0 593.1,100.3M602.1,141.2 605.3,143.2 607.3,145.4 609.0,147.7 610.7,149.8 611.6,152.2 609.8,155.7 612.3,157.2 612.3,159.8 612.0,162.4 612.1,164.8 612.9,166.9 611.6,169.7 613.9,171.2 614.7,173.3 616.1,175.0 619.0,176.0M622.7,178.1 620.5,177.5 618.8,176.1M605.0,136.3 607.4,134.2 609.5,131.6 612.3,133.7 614.2,131.3 616.5,131.6 618.8,135.0 620.7,136.9M604.9,136.1 604.7,139.1 603.1,141.2M598.7,71.1 598.3,74.7 599.9,76.7 600.3,79.4 600.4,82.1 600.7,84.7M568.6,78.8 571.5,79.6 574.0,82.0 575.7,85.1 576.9,87.4 578.5,87.3 579.4,88.9 580.4,89.5 581.6,89.7 582.7,89.9 583.9,89.9 584.7,91.3 585.8,91.7 586.8,93.3 587.6,95.9 588.8,99.1 590.6,100.2 592.7,99.8M604.6,136.5 602.8,133.5 599.9,131.5 596.7,129.7 594.1,127.2 591.9,124.1 588.4,122.7 585.7,120.4 581.4,120.4 580.3,116.8 578.0,115.0 577.6,111.5 576.0,109.8 575.1,107.6 574.4,105.5 574.9,102.3 574.6,100.2 574.8,97.6 575.3,94.7 576.2,91.3 576.4,88.5 575.2,87.0 574.4,84.6 571.8,83.7 568.7,82.9 567.7,79.8M435.1,34.9 437.7,37.9 440.7,40.7 441.6,44.4 441.8,48.4 440.4,53.1 442.4,56.1 442.9,59.8 446.9,61.3 448.8,63.8 450.9,66.0 454.0,67.1M507.5,71.5 506.0,74.4 503.5,75.5 501.1,76.8 498.1,76.9 495.9,79.2 493.0,79.7 490.2,80.3 488.8,85.3 485.5,84.8M486.1,85.3 484.5,83.3 486.1,79.2 484.9,77.2 481.5,76.9 481.6,74.3 479.9,73.1 478.3,72.1 475.3,72.7 474.0,71.7 471.6,72.0 470.3,70.9 466.5,73.2 465.9,70.4 465.3,67.6 462.4,67.9 459.7,67.6 457.6,66.3 454.5,66.4M454.0,66.8 454.9,70.1 455.6,73.3 452.9,75.9 451.3,78.7 449.7,81.2 446.4,83.2 446.7,85.9M528.0,202.7 526.9,200.4 525.1,198.3 525.6,195.7 522.1,194.2 520.9,191.9 518.3,190.3 515.6,189.1 512.9,188.0M492.8,195.7 495.4,193.7 497.3,193.9 500.4,191.2 503.5,188.3 506.0,190.1 509.0,190.3 512.3,188.4M611.1,207.2 610.0,204.9 607.6,204.9 605.7,203.4 603.3,202.6 601.1,200.7 599.1,198.2 596.3,197.0 594.0,194.5 592.2,190.7 589.5,189.1 587.1,186.8 584.9,184.4 582.6,182.5 580.1,181.4M618.8,176.1 616.2,175.8 613.5,175.6 611.6,173.5 608.2,174.3 605.6,173.2 603.9,170.6 601.7,169.1 599.0,168.1 598.0,165.0 596.1,163.2 594.0,161.6 590.6,161.5 587.5,161.1 583.6,162.1 581.1,161.0 578.7,159.8 575.6,159.3 572.4,158.9 568.9,158.8 565.5,158.3M565.0,158.2 568.9,159.2 572.9,160.1 573.2,162.0 575.0,163.5 576.3,165.0 578.2,166.4 575.3,169.4 576.6,171.0 576.1,173.5 575.2,176.3 576.2,178.3 578.5,179.8 579.3,182.1M500.5,112.1 497.8,115.0 500.0,119.0M500.4,112.7 504.8,113.9 508.9,111.3 513.3,110.6 517.6,109.7 521.9,109.1 525.9,108.9 530.0,107.1 534.8,102.1 538.8,100.6 542.3,100.6 545.7,100.5 548.4,101.3 550.1,103.4 551.8,104.9 551.3,109.1M499.4,118.6 503.9,119.5 508.6,119.6 512.7,119.8 514.4,122.9 516.5,124.7 516.8,128.6 518.0,130.2 519.5,130.6 521.6,129.6 523.2,129.0 523.9,129.5 523.4,131.1 522.8,132.7 522.2,134.6 524.5,134.1 524.0,136.4 525.3,137.9 525.7,140.3M551.4,109.1 551.5,112.0 551.5,114.8 550.3,118.6 552.2,120.3 552.1,123.6 553.5,125.9 554.3,129.0M554.3,128.6 554.1,131.9 552.6,135.2 555.7,138.0 555.7,141.1 555.6,144.0 556.7,146.7 555.9,149.5 560.1,151.6 563.2,153.7 561.5,156.4M525.5,140.7 529.1,139.8 531.1,141.9 532.8,145.2 535.6,147.4 538.5,149.9 541.7,152.5 546.0,151.9 549.7,153.5 553.4,155.2 557.2,156.6 561.4,156.2M486.1,85.5 484.5,89.0 486.1,92.0 486.7,95.2 488.3,98.2 489.8,101.3 489.2,105.2 491.2,108.3 495.2,110.6 500.5,112.0M470.3,106.6 469.2,102.4 467.4,99.5 464.8,98.0 463.3,96.3 462.6,94.4 462.2,92.7 461.3,92.1 461.5,90.5 460.1,91.1 459.9,90.1 458.1,91.4M450.3,90.7 449.2,91.1 448.8,90.3M470.6,107.2 473.3,109.0 476.1,110.5 479.9,113.4 483.7,115.7 487.9,118.1 491.6,119.0 495.0,118.4 499.1,118.4M553.3,78.9 552.7,81.1 557.1,83.2 557.8,85.7 555.9,88.3 555.9,91.0 556.6,93.8 555.9,96.8 556.1,99.8 556.0,103.0 552.4,106.1 551.0,109.3M602.8,140.4 599.7,140.7 596.8,138.8 593.3,139.2 590.2,136.9 586.5,137.1 582.8,137.3 579.2,136.7 576.0,134.2 572.4,134.0 568.6,134.7 565.7,132.6 562.5,132.3 560.8,128.7 557.0,130.1 554.9,128.4M566.1,157.5 562.8,157.9 561.0,156.7M578.4,211.2 576.4,209.2 575.4,206.9 573.1,205.6 573.1,202.6 571.6,200.8 569.3,200.0 567.7,198.5 566.8,196.3 563.7,196.8 561.8,196.1 562.2,192.1 560.1,191.4M512.4,188.7 515.4,187.2 518.3,186.1 521.8,187.4 524.9,187.9 527.8,187.9 531.0,189.8 534.0,191.8 536.5,190.9 539.6,194.1 542.4,196.6 544.7,194.4 547.2,194.8 549.7,194.4 552.2,193.8 554.7,195.0 557.1,195.7 559.5,192.2M579.8,181.9 577.6,184.4 575.0,184.8 571.8,182.8 569.6,185.6 567.1,187.1 564.7,188.9 562.2,190.2 559.7,191.3M526.1,140.6 524.3,142.6 524.3,146.0 523.0,148.1 522.7,150.8 520.8,152.4 519.6,154.5M519.5,153.8 521.9,155.8 524.3,158.3 525.8,162.2 527.7,166.2 532.0,167.3 535.2,169.9 537.5,173.6 540.1,176.7 542.9,179.3 544.8,182.9 547.0,185.5 549.3,187.8 552.4,188.4 554.9,189.4 557.7,189.6 559.6,190.8M559.2,192.2 559.1,191.6 559.9,190.8M471.6,109.9 469.6,109.1 467.3,107.8 466.2,108.6 464.1,107.8 462.1,107.6 460.4,108.0 459.6,110.5 456.7,109.6 454.6,110.5 452.4,110.9 450.5,112.5 448.7,115.2M472.0,110.5 473.7,113.7 478.4,117.4 481.4,120.9 484.1,124.4 489.6,127.9 492.0,131.6 496.0,134.9 498.9,138.3 502.6,140.7 504.6,143.7 506.0,146.9 507.0,149.8 507.8,152.3 508.7,153.7 508.8,155.5 509.4,155.4M508.9,156.6 507.4,160.0 505.6,165.0 504.0,167.3M504.3,166.6 503.9,165.1 503.4,162.9 501.6,162.9 500.0,160.6 497.9,158.7 495.6,155.7 492.7,153.0 489.5,150.6 486.4,144.1 482.7,138.5 478.6,137.3 474.5,133.8 470.2,132.4M448.0,116.0 449.8,116.1 452.6,115.5 454.4,117.6 457.0,119.4 461.1,120.1 463.9,123.6 466.6,128.0 470.3,131.7M443.1,113.4 444.0,114.3 445.4,114.0 445.7,115.7 447.4,114.6 448.3,115.9M470.4,106.6 471.6,108.9 471.6,110.2M519.2,154.2 517.1,152.9 515.4,151.8 513.4,153.6 512.0,154.1 510.3,156.6 509.8,156.3 509.0,157.8 508.7,158.1 509.1,156.5 509.3,155.3M511.7,188.9 509.9,187.4 509.1,185.0 508.9,181.7 505.7,182.3 503.8,181.9 502.8,180.8 501.1,181.3 502.0,177.8 502.1,176.1 502.2,174.8 503.5,171.3 503.7,170.1 504.3,168.2 503.8,167.6M467.4,160.6 468.5,157.3 470.3,154.1 468.4,149.5 467.6,145.4 469.4,142.1 468.1,137.9 469.1,134.6 470.1,131.6M547.6,938.3 549.2,937.8 550.7,937.1 552.1,936.2 553.6,936.0 555.1,935.6 556.2,933.3 557.7,932.4 559.1,930.8 560.4,928.5 561.3,925.1 562.7,923.1M562.7,923.1 564.5,924.2 567.1,922.3 569.0,925.6 571.5,927.6 574.1,930.4 577.0,933.2 580.1,935.8 583.9,934.0 587.3,936.1M372.7,339.5 368.6,339.4 369.2,343.3 367.9,345.6 365.6,347.0 362.7,348.1 364.8,352.7 364.8,355.7 363.0,357.5 362.3,360.0 361.1,362.3 362.5,365.9 362.7,368.7M373.3,339.8 369.4,338.1 368.8,335.6 370.0,332.8 369.1,330.9 366.7,330.0 368.2,327.8 369.7,325.7 370.0,324.3 370.4,323.0 371.4,321.4 371.0,320.6M362.0,368.6 359.2,366.2 356.7,366.0 354.3,367.1 352.3,366.7 350.6,365.6 349.0,366.2 347.9,365.2 347.3,363.3 345.9,364.6 345.1,363.4 344.9,360.7 344.5,358.4 344.1,355.4M338.4,319.2 339.2,321.5 340.8,324.7 341.7,327.4 341.6,329.5 341.9,332.1 343.3,335.8 343.7,338.8 344.0,342.0 344.1,345.2 344.0,348.5 344.2,352.2 343.8,355.6M327.4,351.6 329.9,351.5 332.3,352.0 334.5,352.4 336.5,354.7 338.3,355.2 339.7,359.4 341.3,358.3 342.8,355.2 344.0,355.7M332.7,389.4 335.3,388.4 339.0,388.9 343.3,389.4 345.2,387.7 348.2,386.8 350.5,385.3 351.0,382.6 354.5,381.8 357.1,380.4 360.2,379.4 359.3,375.8 362.8,375.2 363.0,372.4M364.1,373.1 366.1,372.8 363.0,371.0M363.5,371.3 362.1,370.1 362.5,368.2M460.6,224.9 464.8,230.4 470.0,232.1M509.0,203.6 509.0,202.0 508.2,200.7 505.5,200.2M410.2,295.3 411.0,298.2 413.3,298.9 414.2,301.4 416.6,301.6 419.0,301.8 420.1,304.1 422.5,304.5 423.7,306.9 425.1,309.5 428.4,309.2 431.2,309.9 434.3,310.2 437.1,311.4 439.9,312.6 442.3,314.5M373.1,339.8 376.4,344.8 379.7,345.9 383.0,345.6 386.5,346.3 390.1,346.4 393.8,346.9 397.8,344.0 401.3,345.9 404.9,346.0 408.6,345.5 412.5,344.1M412.2,344.0 415.0,341.6 418.3,339.6 420.1,337.1 424.4,335.6 426.1,333.2 428.4,331.1 430.7,329.1 430.6,326.3 434.8,325.1 437.5,323.5 437.9,321.0 441.5,320.0 440.1,316.7 442.2,315.2M563.0,210.0 562.3,212.9 560.1,215.7M432.7,265.4 434.8,267.3 437.0,268.7 439.3,269.9 441.7,271.1 444.1,272.4 446.5,274.1 448.4,276.5 450.6,278.5 451.7,282.1M442.2,315.7 443.3,314.2 444.9,314.5M460.5,295.6 460.1,297.2 456.9,296.9 455.2,297.4 456.8,300.5 455.9,301.6 455.6,303.3 454.6,304.3 451.8,303.7 451.8,305.5 450.8,306.5 447.4,305.5 446.2,306.5 446.3,308.8 445.6,310.6 445.5,312.8 445.3,315.1M656.4,227.2 653.0,226.8 654.0,230.1 652.9,231.6 652.1,233.4 654.0,237.4 653.1,238.9 651.5,240.0 649.2,240.7 649.6,243.3M605.0,228.4 604.7,231.5 604.2,234.5 603.3,237.5 606.5,239.8 606.5,242.4 606.1,245.0 605.2,247.5 608.8,249.2M607.5,249.5 611.5,247.3 615.4,245.4 619.4,244.2 623.6,243.6 627.7,243.1 631.5,241.8 635.5,241.4 639.6,242.6 643.0,242.1 646.4,243.4 649.2,243.8M607.3,249.4 603.4,250.9 602.4,253.2M663.9,263.7 662.3,263.2 660.2,264.1 658.5,263.5 657.2,261.8 656.9,258.5 654.8,258.2 653.0,257.3M653.5,256.6 654.6,254.2 653.5,251.9 654.0,249.4 653.1,247.1 650.4,245.3 649.1,243.0M463.3,337.0 462.6,333.2 461.2,333.6 460.7,330.6 460.1,327.8 459.4,325.6 458.4,323.9 457.3,321.9 455.7,321.4 454.3,318.9 452.7,316.5 450.6,315.4 447.6,316.3 444.8,316.0M463.4,336.8 464.7,336.5 466.1,336.2 467.5,335.5 467.1,330.6 467.8,328.3 469.4,327.7 471.4,327.8 472.4,325.4 474.4,324.6M514.1,358.8 512.5,359.9 510.9,361.2 509.8,363.3 508.9,366.1 507.8,367.8 506.6,369.2 505.6,370.8 504.4,372.2 503.4,374.5 502.2,376.4 500.8,377.7 499.4,380.1 497.2,379.2M497.2,379.3 495.0,379.5 492.6,378.7 489.6,379.2M463.3,336.7 463.6,339.7 462.5,342.2 463.7,345.5 462.7,347.9 463.1,350.8 464.6,354.1 466.3,357.4 468.3,360.7 466.7,363.1M489.8,378.2 487.4,376.1 484.8,373.6 482.2,370.5 478.7,368.5 473.2,369.2 469.9,366.5 467.1,363.3M411.7,344.5 413.9,345.9 415.4,347.6 417.1,349.0 420.4,349.1 422.6,349.8 423.3,351.6 422.6,354.2 421.2,357.6 422.2,359.4 421.1,362.8M467.1,363.1 463.4,361.9 459.6,360.0 457.2,362.3 454.3,363.4 450.0,358.9 446.8,359.3 443.7,361.7 440.2,360.8 436.7,362.2 433.3,361.1 429.8,362.9 426.6,361.6 423.1,364.7 420.2,363.7M394.5,394.5 392.8,396.7 392.2,392.7 390.9,392.8 389.9,389.6 388.6,386.5 387.0,382.4 385.1,381.3 382.9,377.9 380.7,377.4 378.1,375.6 375.5,374.3 372.5,372.5 370.1,373.8 366.6,371.0 363.5,370.2M394.4,395.1 395.7,392.9 396.8,389.6 399.2,389.6 401.1,387.2 402.9,384.0 405.3,382.0 407.9,379.8 410.3,376.9 412.5,372.9 415.3,370.3 417.8,366.3M418.1,367.0 419.7,365.3 420.4,363.4M517.8,361.3 516.4,364.6 515.0,368.0 514.7,370.5 513.6,373.5 512.5,376.4 512.4,378.8 513.8,380.8 515.8,382.8 515.4,385.2 518.1,387.1 519.6,389.2 520.4,391.4M496.9,379.5 497.5,381.6 497.6,383.8 497.2,386.1 496.7,388.2 497.0,389.5 496.7,391.1 497.6,391.8 494.8,395.9 496.8,395.8 495.7,398.8 495.0,401.6 496.4,402.9 496.9,405.2 499.8,405.8 502.1,407.2M501.7,406.8 504.1,405.5 506.7,404.3 507.4,401.8 510.4,400.9 514.1,400.4 512.9,396.8 514.8,395.4 516.8,394.1 518.6,392.7 520.0,391.2M653.4,256.7 651.4,257.8 649.1,259.1 646.5,259.8 643.4,259.6M556.4,404.2 553.1,402.5 549.9,401.7 546.8,400.8 543.8,400.5 540.1,397.7 536.7,396.2 533.3,394.9 530.6,395.5 526.8,393.4 523.7,392.9 520.3,391.6M556.2,403.9 558.3,404.7 559.6,404.6M560.6,392.0 557.9,393.5 559.1,396.5 557.9,398.2 558.3,400.3 559.9,402.9 558.9,404.1M375.0,402.7 375.0,406.5 375.7,409.2 376.2,412.6 379.2,412.3 380.3,414.9 382.8,415.0 383.9,417.9 385.4,420.2 387.4,421.2 389.8,420.9 391.7,423.5 394.4,421.2 396.9,420.7 399.5,419.3M375.3,403.2 374.9,400.6 375.6,398.5 376.2,396.5 376.7,394.6 376.6,392.6 378.8,391.2 376.9,388.8 375.6,386.6 373.7,384.5 374.3,382.2 370.8,379.9 368.6,377.6 366.6,375.2 364.0,372.9M394.4,395.0 394.6,397.6 394.8,400.2 396.4,401.8 397.1,403.8 398.0,405.6 398.0,407.7 397.5,410.1 398.9,411.3 399.8,412.8 400.5,414.4 399.3,416.9 401.2,417.9M502.2,407.2 501.8,409.9 501.9,412.6M489.8,378.4 486.1,379.2 483.8,381.1 481.7,383.3 479.0,385.2 478.3,388.6 475.1,390.3 471.5,391.6 470.0,394.7 467.7,397.2 466.3,400.4 464.2,403.0 462.1,405.5 460.4,408.3 457.4,409.6 457.2,413.8 454.5,415.0 452.3,416.5 450.1,417.8M502.2,412.9 499.1,412.5 496.2,413.1 493.1,411.5 490.5,413.0 487.8,414.8 485.1,416.4 482.3,418.2 479.5,418.3 476.6,420.5 473.8,422.1 471.4,421.4 468.7,422.4 466.3,423.0 463.6,424.2 461.3,424.6 461.0,421.7 459.8,420.1 457.7,419.4 454.9,419.8 452.6,418.9 450.3,417.3M886.6,360.2 889.5,362.3 888.8,364.3 888.6,366.4 892.3,369.0 894.1,371.5M910.3,336.4 911.7,339.0 913.9,339.9 915.7,342.0 918.6,341.3 921.3,341.0 923.4,342.2 925.5,343.4 927.8,343.8 930.2,342.9M964.4,369.3 961.9,370.3 959.3,371.8M900.6,373.5 897.6,372.8 894.6,371.6M559.3,404.1 562.6,405.4 565.8,406.5 569.0,407.0 572.1,407.3 573.6,409.0 576.0,409.3 578.9,408.7 581.4,408.4 584.2,407.7 586.4,407.6 589.2,406.8 591.4,407.1M601.4,396.9 598.9,398.4 596.9,400.2 596.1,402.1 593.4,403.5 591.7,405.1 592.0,406.9M374.7,402.3 372.1,404.1 369.2,405.0 366.0,406.1M455.8,743.0 459.5,744.5 461.8,743.8 463.4,741.7 466.7,743.2 469.9,745.1 471.9,743.9 474.0,743.4 476.2,742.0 478.6,743.9 480.8,744.8 483.1,744.5 485.5,744.8 488.1,744.8 489.6,747.8 492.3,747.7M443.7,734.0 444.2,731.4 446.1,729.4 445.6,725.6 445.4,721.7 448.4,719.7 449.9,716.3 452.3,713.3 454.3,710.0 456.4,706.5 459.5,703.6M492.2,748.2 493.6,745.6 495.2,743.1 496.5,740.2 500.1,738.7 500.5,735.1 501.2,731.6 504.5,729.7 503.3,725.2 507.1,723.7 511.9,722.8 514.0,720.4M515.6,720.6 513.4,718.6 513.6,716.5M513.3,716.6 509.2,716.2 504.3,717.7 500.0,717.3 496.4,714.6 492.7,711.6 488.8,709.4 484.6,708.3 480.7,706.8 476.5,706.6 472.4,706.8 469.6,703.8 466.2,703.7 463.5,702.6 459.9,704.0M522.3,701.1 521.1,702.6 517.9,702.9 515.5,703.8 516.4,706.9 513.7,707.9 514.1,710.9 514.5,714.0 513.7,716.7M533.7,694.9 532.2,696.6 531.6,699.3 529.5,700.2 527.1,700.6 525.1,701.7 521.6,700.5M533.8,694.8 536.2,697.2 538.2,698.6 540.1,698.7 541.7,698.3 543.1,696.6 544.5,696.6 545.8,698.5 547.0,699.3 548.1,699.1 549.3,700.8 550.5,704.7M514.7,720.4 515.8,724.7 519.4,724.6 522.0,725.5 525.6,724.5 527.3,725.7 529.2,726.2 529.5,729.0 530.9,730.4 534.6,728.1 537.7,726.4 539.2,728.3 541.7,728.7 544.1,729.7 547.0,730.1 550.1,729.2 552.9,729.0 555.7,731.4 558.6,732.8 561.5,733.7M550.9,705.0 551.3,707.8 551.8,710.6 552.3,713.2 553.7,716.3 554.4,718.7 556.3,721.8 556.7,723.8 558.0,726.3 560.7,729.5 563.0,732.5 561.4,733.7M672.2,463.3 672.7,461.0 673.6,458.7 674.0,456.4 675.6,454.5 676.6,452.5 676.9,450.5 677.2,448.4 679.2,446.9 679.3,444.9 680.4,443.1 681.3,441.1M672.2,463.4 673.1,462.8 673.5,464.1 674.5,464.2 676.8,460.7 678.6,459.7 681.3,457.2 683.4,458.2 686.3,458.5 689.7,457.7M690.1,457.5 690.3,455.0 693.6,453.3 694.1,451.0 694.4,448.7 697.2,447.1 700.9,445.9 705.1,445.1 707.3,443.4 710.0,441.8 713.1,440.3M588.6,551.7 586.0,552.0 583.3,552.4 580.6,550.7 578.3,550.4 576.8,548.9 575.2,548.8 573.2,549.7 571.5,550.3 569.9,550.9 569.6,550.5 568.8,550.6 567.8,550.7 567.8,549.8 565.8,550.1 562.9,550.5 560.6,550.1 558.5,549.0 554.0,549.5 551.5,547.6M551.3,547.4 550.4,544.2 549.1,541.1M593.0,548.9 589.7,546.7 587.5,544.6 586.7,542.6 586.6,540.6 586.8,538.4 586.3,536.6 586.6,534.6 587.1,532.5 587.7,530.6 588.8,527.9 589.5,526.0 590.5,523.5 591.3,521.3 592.7,518.4 592.8,516.7M588.2,551.5 590.6,550.3 593.0,549.3M549.4,541.4 553.3,542.2 556.4,542.1 559.5,542.0 559.2,539.0 564.1,540.4 564.7,538.5 567.5,538.2 568.1,536.5 569.4,535.2 573.5,535.4 571.0,531.9 574.8,531.7 576.5,530.2 578.5,528.8 578.1,526.3 577.7,523.7 578.6,521.7 574.7,517.7M592.7,516.9 591.8,517.5 590.9,517.9 589.9,517.7 588.7,518.1 587.4,519.9 585.9,520.5 583.5,519.2 581.0,519.0 579.6,521.5 575.6,518.9M625.4,413.1 623.3,414.2 623.4,416.3 622.8,417.8 621.3,418.8 619.6,419.4 618.9,420.7M591.4,406.9 593.5,407.6 595.2,408.7 593.5,410.9 595.0,412.2 596.0,413.9M596.0,413.8 598.8,414.0 601.6,414.0 604.2,414.7 606.8,413.6 609.1,416.0 611.1,418.2 613.1,420.1 615.3,419.9 617.2,420.0 619.0,420.8M653.0,419.1 653.0,420.8 652.2,421.4 649.1,420.0 649.0,421.0 650.0,422.8 648.6,422.8 648.1,423.5 648.1,424.6 647.9,425.8 647.4,427.0 648.9,429.4 646.2,430.0 643.1,430.9 643.4,433.5M618.7,420.9 618.2,422.9 620.4,423.5 621.1,424.8 623.3,425.0 624.7,425.9 627.6,425.3 629.0,426.9 630.8,428.6 632.5,431.1 637.0,429.5 640.4,430.2 642.9,432.9M575.0,518.2 571.8,514.5 567.3,513.1 563.7,509.6 559.8,507.1M559.8,506.9 557.7,507.2 555.0,505.9 552.8,505.2 550.7,504.4 549.0,504.2 547.4,504.9 545.5,504.5 542.9,497.9 541.3,497.7 539.7,495.5 538.0,495.6 535.8,498.6 533.9,498.1 531.7,499.1 530.1,497.4 527.6,498.8 525.3,499.1M549.2,540.9 546.1,537.8 541.3,535.9 537.0,533.4 532.0,531.6 526.7,530.5 522.0,528.9M522.8,528.8 518.1,527.6 517.3,526.2 512.9,525.6 511.1,524.8 506.4,525.1 506.8,524.0 503.9,524.2M502.3,524.6 505.2,523.2 507.6,521.9 509.0,520.7 510.9,519.2 511.3,517.8 512.3,516.2 516.6,513.5 518.8,511.1 519.6,508.8 519.9,506.3 521.5,503.2 525.9,499.6M463.5,461.6 467.3,458.0 470.7,456.4 473.4,457.7 475.5,460.6 477.9,462.0 479.8,464.9 483.5,463.4 486.2,464.7 488.7,466.8 492.0,466.7 494.8,468.3 498.8,465.7 501.7,466.6 504.8,466.3 507.8,466.4 510.6,466.6 513.5,465.2 516.0,468.0 518.7,466.3M518.3,466.6 519.5,470.3 518.8,474.4 520.4,478.1 519.3,482.4 518.4,486.7 519.2,490.4M455.0,480.5 457.0,476.5 459.2,472.4 461.8,468.3 460.4,464.6 463.7,460.7M455.5,480.1 456.3,482.0 455.9,485.2 455.8,487.8 455.3,490.6 456.3,492.1 457.4,493.7 458.3,495.7 459.4,497.7 460.9,499.6 461.7,502.1 465.1,503.7M464.8,503.4 468.7,505.2 472.0,504.1 475.7,504.4 479.2,503.1 483.5,505.2 487.5,505.9 491.2,504.6 495.2,504.5 498.8,502.1 502.5,500.6 506.2,499.5 509.3,495.0 512.7,493.6 515.9,491.4 519.3,491.1M459.2,453.3 459.5,449.8 460.2,446.6 461.2,443.7M459.1,452.3 455.5,454.7 451.9,455.2 448.4,457.0 444.9,455.6 441.4,453.6 438.2,452.2 435.2,454.0 432.2,452.1 429.4,453.4 426.7,452.0 424.1,450.1 421.7,448.2 419.6,443.9 417.4,443.2 415.6,441.0M460.2,444.2 460.0,441.7 458.4,440.1 454.8,439.6 451.2,439.0 449.5,437.5 450.1,435.5 449.6,433.8 447.9,432.3 447.5,430.5 449.0,428.6 449.8,426.6 449.6,424.6 447.4,422.3 446.4,419.9 446.6,417.4M416.0,440.1 415.7,436.8 418.0,433.3 419.2,430.1 419.9,427.2 419.5,424.5 419.1,422.2 419.7,419.9 418.4,418.3 416.7,417.2 417.2,415.3 416.2,414.0 413.2,413.9M413.7,414.1 415.9,412.9 417.6,411.4 419.9,410.9 421.7,410.1 423.5,409.4 425.1,408.5 427.2,408.3 430.2,409.6 432.5,410.0 435.5,411.9 438.6,414.9 441.0,415.7 443.6,416.7 446.1,417.4M511.9,423.8 510.7,426.2 507.9,426.5 505.8,427.6 504.3,429.3 502.0,430.0 501.0,432.0 498.0,432.0 494.6,431.8 491.0,431.7 488.3,432.4 485.5,433.2 482.5,434.0 479.0,434.7 474.6,435.1 471.5,436.3 469.2,438.2 467.8,440.8 462.8,441.1 461.1,443.8M502.5,412.5 503.0,415.0 506.9,416.0 509.2,417.7 511.2,419.6 510.6,422.6 511.9,424.6M450.1,417.8 448.6,419.7 446.7,416.9M400.3,418.2 402.9,416.8 405.5,416.4 408.2,414.6 410.8,415.2 413.4,414.0M417.9,367.1 415.4,371.7 417.2,373.7 417.1,377.1 419.4,379.4 421.5,382.0 422.7,385.2 425.8,387.7 429.5,390.3 432.7,393.2 434.2,396.4 438.1,399.4 441.8,402.4 442.4,405.5 444.8,408.6 443.8,411.4 445.5,414.2 446.3,417.0M513.6,424.9 514.1,427.4 516.3,429.1 517.0,431.4 518.0,433.6 519.8,435.3 518.9,438.3 520.1,440.3 521.2,442.4 522.0,444.7 521.3,448.0 523.8,449.6 524.3,452.4M513.5,425.2 515.4,423.4 518.0,423.3 520.0,421.6 522.6,422.2 525.0,422.7 526.9,420.3 529.1,420.1 531.1,418.1 533.3,417.2 535.6,417.6 537.9,417.1 540.2,417.7 542.5,417.9 544.8,419.2 547.2,420.1 549.7,420.5M549.4,420.6 550.5,423.0 551.5,425.4 555.7,425.4 555.7,428.5 558.5,429.3 560.5,430.7 563.1,431.4 564.1,433.7M564.0,434.1 560.6,435.4 558.1,437.8 556.1,440.7 554.0,443.0 552.3,446.0 549.6,446.9 548.0,449.3 545.5,449.4 544.5,452.3 542.3,452.0 540.6,452.4 540.0,455.0 538.4,455.1M538.8,456.2 537.4,456.7 535.6,455.2 534.1,455.5 532.1,454.0 530.6,454.8 528.7,454.9 526.8,454.6 524.6,453.2M464.0,460.4 464.0,456.9 462.6,454.4 459.2,453.2M518.2,466.2 519.9,463.3 521.5,460.5 521.9,457.2 523.5,454.9 524.5,452.4M512.6,424.2 512.4,425.5 513.5,424.8M556.1,404.0 552.2,403.6 553.3,405.6 552.8,407.0 551.7,408.2 554.6,411.4 553.7,412.9 552.5,414.5 553.2,417.1 552.4,419.1 549.3,420.3M595.6,413.7 593.6,415.2 592.1,417.0 593.1,420.5 589.8,421.8 587.2,423.8 585.5,426.5 581.2,428.0 578.7,430.6M579.1,430.5 576.5,430.0 573.5,430.3 570.0,432.3 566.6,434.0 564.0,433.5M552.1,484.6 551.9,487.5 553.6,491.1 553.0,493.7 555.6,497.4 557.2,500.7 559.3,504.0 560.3,507.1M519.2,490.4 521.7,492.2 522.6,495.4 525.0,496.4 525.3,499.5M551.7,484.8 550.7,481.1 549.6,478.7 549.1,475.3 548.2,472.9 546.5,472.2 545.4,470.4 544.6,467.8 543.7,465.3 541.9,464.3 541.3,460.7 540.1,458.3 538.8,455.8M758.5,646.1 757.1,643.4 755.1,640.7 754.3,638.2 752.8,635.4 752.2,632.8 752.2,630.4 752.0,627.7 751.3,624.3M769.8,614.8 767.1,618.0 764.6,620.1 762.5,622.8 760.5,624.6 758.5,624.9 756.8,625.0 755.5,626.4 754.3,626.2 753.2,625.7 752.2,626.4 751.3,624.9M779.3,612.9 775.4,614.0 771.4,616.1 769.5,615.4M652.5,717.3 655.4,713.7 657.4,709.2 659.7,705.3 661.6,701.3 663.3,697.4 664.8,693.4 666.1,689.7 667.0,686.2M653.2,716.7 652.3,719.9 651.8,723.0 652.0,725.4 655.0,724.1M677.7,687.3 675.4,686.4 673.4,686.0 672.0,682.5 670.6,684.2 669.8,682.6 669.3,682.1 669.3,680.8 668.9,681.5 669.2,680.4 668.6,682.5 668.5,682.7 668.4,682.4M668.4,682.3 667.8,683.3 667.1,685.6M529.7,592.7 530.3,588.2 531.4,584.0 534.7,580.6 534.3,575.6 536.7,572.0 538.4,568.1 540.5,564.5 541.1,560.2 544.3,557.8 546.0,554.6 548.5,552.3 550.8,550.1 552.2,547.6M589.0,551.9 587.4,553.7 590.6,556.6 591.0,559.0 588.0,561.1 594.5,565.0 596.9,568.5 596.3,571.5 595.9,574.8 596.0,578.5 595.2,582.1M529.1,593.2 531.9,595.6 534.6,598.6 537.4,602.0 542.4,600.6 546.1,602.7M596.6,581.9 594.6,584.9 590.9,583.4 589.5,588.4 585.3,586.3 582.5,588.3 577.8,586.6 573.4,586.1 570.6,589.2 567.2,591.3 564.0,594.1 560.9,597.1 556.7,598.1 554.8,603.1 549.8,602.7 546.0,604.1M621.0,651.7 625.2,650.9 628.3,653.8 632.2,654.7 635.6,658.8 639.4,660.9 643.2,662.8 646.9,665.5 650.3,668.7 653.5,672.7 656.4,676.4 658.9,679.6 661.4,680.1 663.1,682.4 664.2,685.4 665.4,686.3 666.0,687.5 667.2,685.6M652.3,718.3 649.9,720.1 647.9,719.9 645.8,718.8 641.1,724.0M620.9,651.9 620.3,654.2 618.1,656.5 613.4,659.0 612.2,662.1 611.2,665.4 612.9,669.2 610.4,672.8 606.0,676.5 605.2,680.4 608.7,684.5 609.1,688.6 609.8,692.6 606.2,696.1M641.5,724.2 639.1,723.5 636.7,722.2 631.7,723.1 631.1,719.2 632.0,712.9 630.1,709.5 628.4,705.5 624.4,704.5 621.3,702.1 617.3,701.4 614.6,697.5 610.1,697.7 606.4,695.4M649.5,805.7 648.0,803.2 647.9,799.0 647.3,796.0 645.8,794.9 644.3,794.3 641.6,796.0 639.4,796.9 637.2,797.7 637.2,794.6 635.0,794.6 633.6,792.8M632.7,793.9 635.5,791.6 637.4,788.4 638.3,784.5 638.6,780.5 639.5,777.0 641.3,774.0 643.3,771.1 646.5,768.5 646.1,765.4 648.8,762.8 653.6,760.3 656.0,757.9 658.2,755.8 657.1,753.9 659.8,752.1M563.4,922.8 561.6,920.2 559.8,917.9 560.5,913.9 562.1,909.4 561.6,906.1 561.7,902.5 560.5,899.6 559.9,896.4 559.8,893.1 559.2,890.1 561.1,886.5 561.8,883.5M623.7,892.3 620.4,891.0 617.0,890.0 614.0,888.7 612.3,886.4 610.4,884.7 609.3,882.4 604.8,882.8 602.2,881.6 600.6,879.7 595.2,880.2 593.1,878.4 590.2,877.1M561.5,882.7 564.9,882.5 568.3,882.8 571.1,880.9 573.6,877.7 577.3,879.0 580.4,877.4 583.9,877.9 587.1,877.3 590.4,876.8M874.4,528.0 870.6,529.8 867.7,528.4 864.8,527.2 861.9,525.7 858.8,524.9 855.7,524.5M906.3,511.4 903.9,509.5 904.2,507.1 903.5,505.0 903.2,502.7 903.3,500.4 900.2,498.8 899.2,496.6 897.5,494.6 896.3,492.3 891.2,490.8M855.4,525.5 854.8,521.5 855.1,517.8 853.7,514.1 854.8,511.1 855.8,508.3 855.0,505.6 854.7,503.1 852.3,500.5 851.6,498.4 850.6,496.3M871.6,488.3 868.6,489.2 864.7,489.5 861.0,489.7 858.5,490.6 856.3,491.6 855.5,493.4 854.3,494.7 849.6,493.5 850.1,496.0M916.8,481.1 920.6,478.3 922.9,479.4 925.3,479.5 927.5,479.9 929.5,480.5 932.2,479.3 933.5,481.8 935.9,481.7 938.2,481.7M911.0,420.5 911.4,422.9 912.1,422.5M921.8,452.0 922.3,454.9 918.0,455.6 918.2,458.4 916.3,460.1 914.2,461.6 911.3,462.4 909.7,464.0M829.4,481.5 830.4,480.4 831.6,479.4 832.4,478.2 833.1,476.9M829.6,481.4 828.2,481.6 826.8,482.0 825.5,482.4 824.0,483.6 822.6,484.8 821.1,486.5 819.8,487.8 818.3,489.8 816.6,492.2 815.2,494.0M809.8,494.2 810.7,495.4 811.0,496.8 813.1,495.2 813.5,495.4 814.1,495.2 815.3,493.8M809.5,494.3 811.8,492.1 813.4,490.1 812.1,489.1 811.2,487.9 812.5,486.4 812.1,485.2 809.7,484.2 806.2,483.1 803.6,481.6M850.3,496.5 846.9,495.8 843.7,495.1 841.4,492.2 838.7,490.9 837.4,487.8 835.2,486.6 833.5,485.1 832.5,483.2 830.9,482.4 829.2,482.0M689.0,458.1 694.2,458.1 693.1,462.9 695.5,465.6 700.5,466.7 705.0,468.8 706.0,472.9M772.6,462.2 771.2,463.9 768.8,465.3 766.8,466.7 762.4,468.0M762.7,468.0 759.4,469.5 756.3,470.6 752.9,471.8 749.7,472.8 746.1,474.2 743.0,474.3 739.5,475.2 736.0,475.9 732.5,478.1 729.2,476.1 725.9,476.5 722.4,474.8 719.1,474.4 716.9,477.4 713.5,475.3 709.4,472.4 706.7,472.8M809.8,494.1 807.5,494.8 804.7,493.9 802.1,494.5 799.3,494.3 796.3,494.3 793.2,493.9 790.2,494.9 786.6,493.3 782.0,488.8 779.4,492.2 775.9,492.9 771.5,490.3M762.8,468.0 764.2,468.1 764.3,468.8 764.0,469.8 762.4,471.2 760.0,473.1 762.0,474.0 763.2,475.4 764.4,477.2 765.6,479.3 767.0,481.8 768.6,484.4 771.7,487.3 772.5,490.7M815.5,579.0 811.6,578.7 810.7,576.7 807.1,577.2 806.0,576.3 804.6,575.9 802.9,576.1 801.1,576.5 799.1,577.2M769.2,615.3 768.5,613.9 771.7,610.0 770.6,609.0 772.6,606.0 774.5,603.1 776.7,600.1 778.9,597.2 780.5,594.6 781.2,592.6M799.6,576.9 796.5,579.3 792.3,581.7 790.7,584.5 786.6,586.7 784.1,589.5 781.4,592.3M751.1,624.7 750.5,622.1 749.9,619.4 749.2,616.9 748.8,613.5 748.0,610.6 746.6,608.8M746.7,609.0 744.6,606.3 743.5,604.0 743.1,601.6 741.7,599.1 739.7,596.6 737.8,594.2 737.1,591.3 735.0,588.8M734.9,588.3 734.1,585.1 735.5,582.9 736.9,580.8M781.9,591.7 779.3,592.2 776.0,593.9 773.4,593.2 770.6,592.6 767.7,591.3 764.6,591.4 761.5,590.8 758.6,590.5 755.6,586.8 752.8,585.4 750.1,585.3 747.6,585.5 744.4,581.6 741.5,580.0 738.8,579.1 736.7,580.7M812.9,510.3 811.3,514.1 808.9,516.9 806.3,519.7 804.4,523.6 803.2,528.6 800.6,531.9 798.4,535.5 796.2,539.0 794.7,543.3 793.8,547.7 792.4,551.4 789.1,553.1M812.8,510.8 815.0,510.5 818.0,506.8 820.1,508.9 822.8,507.9 825.0,512.7 827.4,517.2 830.2,518.7 832.8,521.6 835.3,525.8 837.8,529.2 840.6,530.4 843.0,533.0M839.2,568.8 837.9,564.6 838.4,561.9 840.2,560.1 842.3,558.2 841.0,553.2 841.2,549.2 842.6,546.0 842.6,541.6 843.2,537.6 843.1,533.2M839.2,568.6 837.4,567.4 835.7,566.9 833.8,564.1 831.7,560.6 829.8,559.1 828.5,561.0 826.4,559.4 824.8,560.5 822.6,559.6 820.8,560.9 818.4,560.9 816.1,561.6 813.5,562.6 810.8,563.7 808.3,565.9 805.6,567.8 802.2,568.9M789.5,552.8 790.1,555.8 788.9,558.9 788.3,561.6 790.9,563.7 788.7,566.2M802.2,568.7 801.3,567.1 797.6,567.9 793.9,568.3 790.8,567.7 788.0,566.6M771.4,490.6 767.6,491.7 769.8,497.7 764.9,498.2 761.1,499.7 760.4,503.6M760.3,503.2 763.1,505.8 767.0,507.6 769.4,511.0 773.6,512.9 772.7,518.8 775.5,521.8 776.4,526.0 776.8,530.6 778.2,534.2 778.1,538.9 781.0,540.8 782.2,543.9 784.0,546.1 784.9,549.4 787.4,550.4 788.6,553.2M814.9,494.4 813.9,496.5 811.8,500.4 811.1,502.6 811.8,503.4 810.3,507.7 812.3,507.8 813.0,510.2M855.2,524.6 853.8,530.4 850.9,531.0 849.1,535.3 845.5,532.5 842.7,532.3M852.1,583.0 850.9,581.7 849.8,579.9 847.6,579.0 846.1,577.3 844.2,575.7 843.2,573.1 841.0,571.2 839.4,568.6M798.6,577.4 800.3,575.2 801.4,573.4 802.3,571.6 802.9,570.0 802.6,568.6M734.5,549.7 734.1,551.9 732.8,554.6 730.1,558.0 732.8,559.6 732.2,562.5 733.4,565.2 733.8,568.2 733.5,571.4 733.6,574.5 734.5,577.6 737.0,580.7M735.1,549.5 736.9,551.0 738.9,552.5 741.4,551.0 743.8,551.7 746.4,552.3 748.9,553.8 751.7,552.9 754.4,554.9 757.2,556.9 760.2,559.6 763.2,561.0 766.4,563.4 769.3,564.0 772.2,564.4 775.4,565.6 778.3,565.3 781.2,564.8 784.5,565.0 788.5,566.4M399.3,419.0 397.8,421.1 394.9,422.9 392.7,424.7 394.5,428.1 394.6,431.2 395.1,434.6 393.0,437.4 390.4,440.0 388.7,443.0 387.4,446.3 383.8,448.0 381.5,450.4 378.4,451.9M354.7,431.9 356.7,433.7 358.6,436.2 359.1,440.1 361.0,443.2 362.7,446.7 364.7,450.2M378.2,450.8 375.0,451.9 371.5,450.7 368.1,450.4 364.7,450.5M415.6,439.8 413.9,442.5 411.9,444.4 410.6,447.7 409.9,451.6 410.1,456.3 408.4,458.5 405.9,460.2M455.2,480.8 452.2,482.5 449.3,484.6 446.3,485.4 443.9,488.3 440.9,487.8 439.3,491.5 437.2,492.6 436.0,495.8 433.6,494.0 432.9,497.2 430.9,495.5M431.1,495.7 429.4,492.2 427.2,488.7 424.9,485.1 422.7,481.1 419.8,478.1 418.2,472.9 415.9,469.1 414.0,464.9 411.2,463.2 410.0,459.0 406.5,460.3M378.6,451.7 381.3,453.9 383.2,456.5 384.8,459.1 387.0,460.5 387.0,464.2 389.0,464.8 390.6,465.6 392.9,464.7 394.7,464.2 396.3,464.0 397.1,465.6 397.5,468.0M406.6,461.4 404.4,462.5 402.2,464.2 399.7,465.3 397.5,468.1M705.9,472.4 707.8,476.7 708.2,480.8M672.2,463.9 671.4,464.0 670.8,463.0 669.8,465.9M659.3,502.7 658.6,497.7 660.7,496.7 662.3,494.9 662.7,490.6 663.8,488.1 664.4,483.3 665.7,483.2 666.5,481.1 667.1,478.3 667.8,476.4 668.2,472.9 668.7,468.7 669.2,465.8 669.8,464.6M660.1,502.6 660.9,506.3 663.1,509.4 666.3,511.9 670.3,513.8M668.7,513.9 671.2,512.9 676.7,514.3 677.7,511.8 681.2,510.9 683.9,509.2 686.3,507.2 686.4,503.7 687.8,500.8 689.5,498.2 690.7,495.2 693.0,493.1 694.4,490.5 697.9,490.3 698.4,487.0 699.4,484.3 702.7,485.1 703.5,482.3 706.2,482.8 707.3,480.0M646.7,436.0 648.9,439.0 648.2,442.5 649.0,445.9 650.3,449.4 648.6,453.4 650.4,456.9 650.2,460.7 651.3,464.2 651.4,467.9 650.6,471.4 647.8,474.9 646.3,478.2 644.5,481.4 643.5,484.4M646.9,435.9 645.0,435.8 643.6,434.3M643.1,434.0 640.7,435.5 638.3,437.4 634.0,437.6 631.0,439.1 629.5,442.3 627.1,445.0 623.0,445.3 619.5,446.4 617.0,449.7 613.0,449.8 610.2,453.2 605.8,452.3 601.6,451.3 598.3,454.2 594.5,454.7 590.7,455.2 587.1,457.7M643.3,484.6 640.7,484.5 636.7,487.5 633.7,487.9 630.5,488.4 626.6,490.7 623.0,492.3 619.1,494.8M619.5,494.2 615.0,494.9 614.3,493.3 611.3,492.5 610.1,490.4 604.0,490.6 601.7,488.4 602.1,484.6 599.0,482.4 597.7,479.0 593.5,477.0 594.7,472.0 586.3,472.5 585.5,468.8 582.1,466.6M583.1,466.2 584.2,461.4 587.9,457.3M659.5,502.6 658.2,499.0 656.2,497.2 654.3,495.1 654.6,490.6 653.5,488.2 651.8,486.8 652.1,483.2 650.4,482.1 645.4,484.9 643.4,484.4M669.8,465.4 669.9,462.2 669.6,459.3 669.1,457.1 668.4,454.9 667.5,451.1 666.0,446.0 664.5,443.9 662.6,441.3 659.9,437.5 658.2,437.9 654.9,434.5 652.3,434.4 648.7,432.4 646.8,435.9M642.9,433.2 642.7,433.9 643.2,434.5M578.2,431.3 581.8,431.4 583.9,432.6 582.5,436.4 584.9,437.8 584.0,441.3 582.9,445.3 582.0,449.1 582.9,452.0 584.6,454.6 586.8,457.1M592.7,516.6 593.5,516.8 594.5,515.6 596.2,513.2 597.8,511.7 599.2,511.1 601.7,508.6M601.8,508.7 604.6,506.9 607.7,505.0 610.6,503.1 612.8,500.9 614.3,498.7 617.3,496.6 619.3,494.4M551.8,484.6 553.2,483.2 554.3,480.9 556.1,479.4 557.6,476.7 560.2,475.8 563.7,476.2 567.2,475.7 570.3,474.4 572.3,470.8 575.9,469.6 578.7,466.6 582.9,466.1M639.3,642.6 641.8,644.4 644.2,646.2 647.8,647.1 650.5,648.7 652.6,651.1 656.2,651.8 659.2,653.1 663.1,653.1 665.7,654.5 668.5,655.3 668.3,659.4 670.6,660.0 671.4,662.2M639.9,643.0 639.7,639.4 643.4,640.8 644.4,638.2 646.4,636.4 648.9,634.8 650.4,631.5 653.1,629.6 656.2,627.9 659.1,625.7 662.5,624.0 666.9,623.1 668.9,619.9 671.6,617.5 676.1,616.7 678.7,614.5M671.4,662.2 673.6,662.8 674.9,660.5 676.5,658.0 678.6,656.4 680.9,655.6 683.0,655.9 685.3,655.1 687.8,654.2 689.6,655.1 691.5,655.4 694.9,653.5 697.7,652.7 701.0,651.1 702.9,651.9 705.8,651.1M680.1,615.1 681.9,617.3 685.6,618.0 686.0,621.8 691.3,621.3 694.3,622.9 698.1,623.8 700.6,625.9 706.7,624.5 707.0,628.2 712.4,627.1 714.4,628.6 719.7,627.0M705.8,650.6 708.2,647.6 712.2,644.2 711.8,641.8 713.0,639.0 716.0,635.8 716.3,633.2 716.4,630.7 718.7,627.7M668.3,682.4 669.0,679.5 669.5,676.9 669.7,674.4 670.0,672.1 670.1,670.0 669.9,667.9 670.4,666.0 669.8,664.0 671.4,662.2M720.6,666.8 717.8,664.6 715.4,662.4 714.4,659.4 712.6,657.6 708.7,657.6 707.3,656.1 707.3,653.8 705.7,652.8 706.7,650.2M735.0,587.5 732.5,587.5 731.0,590.1 728.5,590.5 726.3,591.9 723.2,591.4 720.8,592.2 717.8,591.1 715.6,592.4 713.3,593.1 711.2,594.6 708.5,592.1 706.4,595.5M706.5,595.6 706.4,598.4 703.1,598.8 701.4,600.4 699.7,602.1 696.5,602.6 694.9,604.5 692.6,606.0 691.2,608.1 687.8,609.1 684.1,610.1 680.0,611.1 680.0,614.7M746.7,609.3 746.3,610.9 745.0,610.5 743.1,609.8 742.9,612.0 742.1,613.7 739.4,613.0 737.4,613.9 736.5,616.1 735.3,618.5 733.2,620.1 729.7,620.3 728.1,623.0 725.9,625.5 721.5,625.1 719.2,627.8M606.2,696.1 601.1,697.6 596.1,699.7 593.0,704.2M561.5,696.1 562.1,702.6 564.8,703.3 568.0,703.0 571.2,703.0 574.6,703.0 577.9,703.7 580.1,708.6 583.5,709.8 588.0,707.3 592.9,704.5M561.0,696.7 561.6,692.7 563.3,688.7 561.9,684.3 562.2,680.1 562.4,675.8 561.3,671.3 562.5,667.4 564.2,663.7 566.0,660.3M621.5,651.7 621.5,649.0 618.8,647.7 615.9,647.0M615.9,647.2 612.8,647.3 609.8,648.2 606.9,647.9 603.9,649.7 600.2,653.3 597.0,654.5 593.5,656.1 590.7,654.9 587.1,656.5 583.9,656.1 580.1,657.7 576.2,660.1 573.0,659.2 569.4,660.1 566.1,660.9M533.2,695.0 533.5,692.4 532.1,689.6 531.1,686.8 529.6,683.7 527.9,680.6 529.8,677.5 530.8,674.2 531.1,670.8 531.0,667.6 531.9,664.2 532.7,660.9 533.8,657.6M539.2,651.5 541.8,649.4 544.4,648.6 547.1,648.0 549.8,648.4 552.9,648.0 556.0,648.4M533.8,657.9 536.2,653.6 539.2,650.4M550.4,704.3 552.8,708.4 553.9,708.3 553.0,702.1 553.5,698.5 555.2,698.6 557.3,699.5 559.0,697.6 561.3,696.8M565.9,660.6 565.4,656.5 560.8,656.1 561.7,651.0 559.3,648.9 556.0,647.9M557.3,626.5 559.9,626.9 563.6,625.4 567.8,623.1 569.9,624.2 572.8,624.0 575.7,623.9 578.4,624.4 580.2,626.1 582.2,627.5 584.5,628.9 585.5,631.6 588.6,632.3M543.1,635.2 546.2,633.9 549.3,632.4 551.7,630.6 554.7,628.7 556.7,626.5M542.0,635.2 541.1,636.5 542.5,637.0 542.9,637.7 543.2,638.3 543.6,638.8 543.8,639.2 542.4,640.7 542.7,641.3 542.0,642.6 540.2,645.0 539.0,647.4 540.2,648.1 539.2,650.9M556.5,648.0 559.1,646.2 562.9,645.6 564.5,643.4 569.5,644.1 572.2,643.1 574.4,642.0 576.2,640.8 577.7,639.5 578.9,638.2 580.7,637.5 581.9,636.3 583.8,635.6 585.1,634.6 586.7,633.7 588.3,632.6M593.8,747.8 596.1,748.3 597.8,748.0 599.2,747.5 599.0,744.7 600.6,744.8 602.1,745.0 606.0,748.3 609.3,750.3 610.5,750.0 611.1,748.9M593.7,748.8 592.0,745.5 591.0,742.5 589.8,741.6 587.5,744.3 586.7,744.4 586.3,744.4 587.3,742.2 587.1,742.9 586.6,744.1 587.0,743.3 585.8,745.5 584.7,746.8 584.3,745.6 582.1,748.2 580.5,747.9 578.7,746.7 575.9,747.9 573.3,747.2M591.5,726.3 593.7,726.0 595.2,726.0 596.5,726.0 598.7,724.8 599.0,726.0 599.0,727.4 599.1,728.9 599.8,730.5 600.5,732.6 601.9,734.8 605.0,736.8 606.4,739.6 607.7,742.5 609.8,745.2M591.5,725.9 590.4,727.9 588.7,729.6 588.3,731.7 587.4,733.5 586.0,735.3 584.1,736.7 582.3,738.0 582.6,740.3 580.8,741.4 580.0,743.3 576.5,742.6 575.2,744.0 572.5,743.8M610.0,745.4 611.6,747.9 610.7,748.8M571.9,743.4 574.2,745.4 573.4,746.8M594.3,704.0 593.7,707.3 595.9,709.9 595.7,712.7 593.2,715.6 592.6,718.1 592.4,720.3 591.8,722.4 590.9,724.5 591.9,725.8M640.5,724.4 637.8,727.9 634.4,729.4 630.8,730.3 628.3,733.5 625.6,735.7 623.2,738.2 621.2,740.5 618.4,741.0 616.3,742.3 614.3,743.1 612.6,744.0 610.9,744.5 609.2,744.6M561.2,733.8 564.9,735.9 567.2,738.7 570.1,741.0 571.7,743.9M658.7,752.6 655.2,753.4 651.0,755.1 647.1,755.7 643.3,755.3 639.0,755.6 635.0,755.0 630.6,755.0 626.2,754.8 621.8,754.3 618.1,752.8 614.7,751.0 611.4,749.0M562.1,883.0 559.1,883.0 556.4,882.2 553.7,881.2 550.4,881.4 547.9,879.8 544.2,881.1 541.7,879.6 538.7,879.7 536.6,877.9 534.6,876.3 533.1,874.3M519.2,878.2 520.6,877.0 522.2,876.1 523.8,876.2 525.5,875.3 527.3,874.8 529.3,874.5 531.3,873.3 533.5,873.8M640.6,865.5 637.9,865.9 635.5,865.7 633.3,864.5 631.2,864.1 629.5,862.3 627.6,862.1 625.7,862.6 623.8,862.9 622.4,860.5 620.8,859.1 619.0,858.1 617.1,857.1 615.2,855.7M590.7,877.1 592.2,875.5 596.7,875.4 597.3,873.5 598.6,872.0 600.6,871.0 599.3,868.3 601.0,867.1 599.5,864.3 600.7,862.7 599.9,860.1 603.1,859.6 603.2,857.4M615.2,856.3 613.2,856.4 612.0,858.3 610.1,858.5 608.6,860.0 605.9,858.5 603.4,857.4M638.7,825.8 636.0,827.8 633.0,827.0 630.5,828.5 627.9,829.4 625.6,831.4 623.2,832.3 621.1,834.2 618.9,834.7M614.8,856.1 616.8,854.2 616.2,851.6 615.6,849.0 614.6,846.3 614.9,843.9 616.5,841.9 616.2,839.4 618.2,837.4 619.2,835.2M492.1,748.1 493.3,750.4 492.9,753.0 493.4,755.2 494.2,757.3M476.6,784.0 478.4,782.1 480.1,780.4 481.4,778.6 484.1,778.0 484.4,775.9 484.6,774.0 485.4,772.5 484.9,770.2 484.3,767.9 484.1,765.7 485.3,764.8 485.5,762.9 487.1,762.1 487.9,760.4 490.5,760.2 491.0,757.9 493.6,757.2M573.2,746.8 570.1,746.4 568.0,747.5 564.7,747.1 560.0,744.7 557.8,746.4 555.7,748.5 550.9,746.9 547.2,747.3 543.7,748.3 539.3,748.4 536.1,750.2 532.8,752.0 530.7,755.3 526.7,756.3 526.0,760.6 522.6,761.9M493.6,757.8 495.5,759.9 498.1,761.6 502.0,761.1 505.2,762.4 508.7,763.5 513.5,761.9 518.4,760.4 522.0,762.7M321.1,450.3 321.9,452.9 322.0,455.5 324.5,456.2 325.0,457.7 324.0,460.0 325.6,460.4 325.1,462.0 325.9,462.7 325.6,464.0 326.4,464.7 327.9,465.2M364.6,450.1 363.4,453.4 360.4,454.3 357.7,455.5 355.8,457.4 354.8,460.1 350.0,458.9 349.3,461.4 346.6,462.2 344.6,463.3M328.3,465.1 331.3,464.0 334.4,463.5 337.9,463.9 341.3,463.5 344.8,463.6M397.6,468.1 394.8,470.8 394.1,473.7 394.0,476.3 392.3,478.8 389.8,481.2 388.7,483.3 388.9,485.4 386.5,487.4 384.6,489.3 381.9,491.1M344.1,463.9 347.7,465.0 349.7,467.2 352.6,469.3 354.9,471.7 356.6,474.4 359.8,476.6 362.3,479.0 364.8,481.3 367.9,483.2 370.2,485.1 372.7,486.5 375.6,487.4 376.4,489.4 379.9,489.2 380.7,491.2M431.1,495.9 431.7,499.2 432.2,502.2 431.5,503.4 431.1,504.8M381.3,493.3 379.0,492.4 380.9,490.9M380.9,493.3 384.4,493.0 387.9,492.5 389.9,494.2 392.5,495.1 394.9,496.5 399.0,495.2 401.9,495.7 406.9,493.0 409.8,493.7 411.9,495.4M412.1,495.8 411.9,494.0 413.2,495.7M420.4,495.0 422.7,497.2 424.6,499.4 425.8,499.3 427.0,500.0 428.7,502.9 429.9,504.2 431.1,505.2M759.8,502.5 754.8,504.2 749.7,506.0M736.2,548.5 734.7,547.6 730.7,549.8 730.4,547.9 730.1,546.1M730.3,545.7 732.2,543.6 734.1,541.7 734.5,539.6 737.1,537.7 736.3,535.6 740.6,533.9 740.0,531.5 743.8,529.8 743.4,527.2 742.7,524.4 744.0,521.8 745.7,519.2 749.4,517.1 750.7,514.2 750.9,510.8 750.9,507.2M707.5,480.4 709.2,484.1 712.1,487.1 713.4,490.9 713.3,495.2M750.0,507.8 745.5,510.1 742.5,508.2 739.5,506.7 736.4,506.1 733.3,506.6 730.6,505.8 727.4,507.6 724.8,508.0 722.4,508.1 720.2,508.0 718.6,506.3 717.8,502.0 715.9,501.1 714.1,500.3 713.3,494.7M592.5,549.2 595.6,550.1 596.8,547.8 599.3,547.6 603.1,549.0 604.1,546.1 609.6,549.7 613.4,550.8 616.9,551.5 619.3,550.4 621.7,549.2 624.2,548.0 627.5,548.6 631.0,550.1 634.4,552.2M601.7,508.5 600.6,510.6 602.5,509.7 603.6,509.6 605.4,509.2 606.4,509.7 608.1,509.9 610.7,509.8 610.8,512.2 612.4,514.0 615.0,515.4 618.0,517.0 620.6,519.8 625.4,520.2 630.0,521.5M635.2,553.1 634.9,549.7 637.1,548.7 640.2,548.6 642.9,548.0 644.1,545.7M630.2,521.5 628.2,523.9 634.0,527.0 635.2,529.9 637.9,532.9 638.1,535.8 642.8,539.2 642.6,542.2 642.8,545.3M668.5,514.3 666.5,514.4 669.4,515.3M630.4,521.8 631.8,519.8 635.0,519.1 636.5,517.4 638.7,516.0 641.1,515.0 644.9,515.2 648.6,515.4 655.6,518.2 659.8,518.7 663.0,518.5 665.6,517.7 668.7,517.3 668.5,514.8M489.4,562.7 486.4,563.0 483.5,564.0 480.9,563.9 478.4,561.9 476.2,563.3 474.4,558.9 472.8,555.9 471.5,552.2 470.4,549.4 469.5,546.8 468.6,544.6M522.6,529.1 521.1,530.5 515.4,530.0 512.6,531.1 507.6,531.7 504.9,533.4 504.2,535.9 503.2,538.6 498.8,540.5 499.8,544.2 495.9,546.5 494.6,549.9 494.7,553.8 490.5,556.1 489.9,559.9 488.9,563.4M503.5,524.4 500.4,524.9 496.2,526.7 494.0,527.0 490.5,528.5 488.6,528.5 486.3,528.8 484.2,528.6 481.0,529.4 478.6,529.3 476.9,527.9 474.5,527.6 472.5,526.2 470.6,524.5 468.5,522.1 466.6,521.8M468.8,545.4 468.4,541.7 468.4,538.9 468.2,536.1 467.7,533.1 467.7,531.1 467.1,528.4 465.6,525.3 465.4,523.7 465.9,522.7 466.4,521.6M411.4,502.7 411.5,503.5 411.0,504.4M419.7,528.8 422.7,531.4 425.8,532.2 429.0,534.3 432.1,534.7 435.2,535.0 437.6,532.9M431.2,504.7 431.4,507.5 432.4,510.1 432.9,512.4 432.8,515.0 434.1,516.5 434.6,518.5 436.2,519.3 437.6,520.4 440.0,519.6 442.0,519.8M437.3,532.5 441.9,531.7 443.4,529.3 442.6,526.5 442.0,524.1 441.5,521.8 441.8,519.9M465.0,503.8 463.0,505.8 463.3,508.5 462.1,510.2 462.8,512.5 461.3,513.4 459.7,514.2 460.2,515.8M441.9,519.9 443.4,518.2 445.5,517.2 447.7,516.2 450.0,515.5 452.4,515.0 455.0,514.9 458.0,516.0 459.9,515.4M466.7,521.7 465.2,519.4 461.8,517.8 459.6,515.9M448.5,579.3 448.2,577.3 447.2,575.7 446.2,574.4 449.2,571.4 449.5,569.5 453.0,565.7 454.0,562.9 454.3,560.5M448.5,579.6 445.2,578.9 442.4,581.4 439.3,582.4 436.2,583.8 432.9,584.6 429.8,586.1 426.6,586.6 423.7,588.1 420.6,588.9 418.1,591.0 415.8,593.5 413.4,594.9 410.9,595.5M418.8,565.7 423.3,566.8 427.5,565.9 431.7,566.5 435.6,565.4 439.4,564.0 442.9,564.1 446.2,562.6 449.3,558.5 451.8,560.6M451.8,559.8 452.6,561.4 455.2,559.3M437.5,532.7 438.4,535.4 439.1,538.4 441.6,540.4 443.9,542.5 446.9,544.0 446.5,547.9 448.8,549.7 450.3,552.0 452.1,553.7 452.5,556.3 451.5,559.9M468.7,545.5 467.5,542.7 466.8,543.0 466.5,547.6 465.6,548.2 464.9,553.1 463.7,554.4 462.3,554.2 460.7,555.6 459.0,558.0 457.0,557.9 454.9,560.6M529.4,592.0 527.1,594.4 524.7,594.1 522.5,594.5 520.4,594.8 518.4,591.0 516.6,590.1 514.7,592.2 513.2,589.6 511.4,593.4 509.8,593.4 508.6,591.4 507.1,592.2M489.4,563.7 491.0,567.1 492.1,570.8 491.7,575.4 496.5,576.2 498.1,579.0 496.8,583.9M507.1,591.5 506.7,589.3 505.2,589.8 505.0,587.8 503.1,589.9 503.3,586.6 503.2,582.5 501.4,582.7 500.0,580.1 496.9,584.6M542.8,634.9 539.6,635.4 536.5,636.0 533.3,634.4 530.2,634.0 527.1,632.8 523.8,630.7 521.1,629.6 518.1,627.4 514.9,624.3 512.1,622.1 509.5,620.2 506.9,618.1 503.9,613.7 501.7,612.9M546.1,603.6 546.5,607.5 545.6,611.7 544.5,615.7 548.9,617.5 548.9,620.6 551.3,622.5 552.6,624.5 558.1,624.4 557.9,626.3M507.5,591.5 505.6,593.7 504.7,596.4 503.5,598.7 503.3,601.4 502.5,603.5 504.4,607.6 501.9,607.6 502.6,610.1 500.9,610.7 501.7,612.9M448.6,579.1 450.8,580.1 451.6,582.9 454.2,584.4 456.0,587.3 459.3,589.0 461.7,592.1 464.5,594.9 468.6,596.3 472.4,597.8M497.1,583.7 494.9,585.7 492.8,587.9 492.0,591.6 489.5,592.9 486.9,593.7 484.1,594.1 480.8,593.5 479.9,596.6 477.5,597.1 474.8,597.1 472.8,598.4M634.7,640.0 633.5,640.5 631.9,640.1 630.5,639.8 630.1,640.9 629.0,640.7 627.2,639.6 625.3,638.5 624.7,639.3 622.7,638.9 622.0,639.8 621.0,640.7 619.3,641.3M634.8,639.8 631.8,637.7 632.8,634.5 630.6,632.5 631.2,629.2 630.3,626.6 630.4,623.5 628.8,621.3 627.4,619.1 626.9,616.3 625.8,614.0 626.3,610.2 626.0,607.2 625.2,604.6 624.3,602.2 622.7,600.7M619.3,641.3 617.0,641.5 615.0,641.7 613.4,641.8 612.6,641.3 610.8,641.6 607.6,642.9 605.9,642.7 604.7,642.1 601.8,642.3 600.7,641.3 599.4,640.1 598.7,638.3 597.2,636.9 595.5,635.4 593.7,633.7M594.8,633.8 595.0,631.3 596.5,629.6 595.5,625.1 598.2,624.3 599.4,621.7 602.0,620.6 603.4,617.9 604.6,614.8 607.0,613.1 607.0,608.2 608.9,605.8M622.6,600.5 620.6,602.3 618.8,602.5 617.2,602.6 615.2,605.3 613.5,606.0 611.9,606.1 610.3,605.7 608.5,606.7M639.4,642.3 636.9,639.9 634.7,640.5M616.0,647.0 617.7,645.3 618.3,643.8 618.5,642.4 618.9,641.3M658.7,593.3 661.1,594.9 660.0,598.7 659.3,602.1 664.5,601.6 665.9,603.5 668.3,604.7 669.3,606.8 670.1,609.0 674.2,609.2 675.0,611.5 677.0,613.3 678.9,615.2M637.8,586.6 640.2,587.3 641.9,590.4 644.4,591.3 646.7,592.9 649.0,595.2 651.9,595.2 655.1,594.5 658.2,594.1M637.7,586.4 635.1,586.4 632.7,586.9 630.6,588.1 628.2,588.5 626.9,591.7 625.4,594.8 623.8,597.3 622.5,600.7M588.2,632.1 591.4,633.1 594.4,633.7M597.2,581.9 599.9,584.3 601.2,588.4 602.8,591.7 605.1,593.4 605.2,598.2 605.5,602.3 607.2,603.8 608.7,605.3M635.0,552.3 636.7,555.3 638.9,558.3 638.1,561.2 637.4,564.0 637.8,566.9 638.1,569.7 639.3,572.7 638.4,575.4 636.6,578.0 636.9,580.9 637.9,583.8 638.0,586.6M479.4,788.1 481.9,788.3 485.0,791.7 487.8,792.4 490.5,792.4 493.0,791.6 495.5,790.7 498.5,793.3 501.0,792.7 503.5,792.0 506.1,795.0 508.5,796.4 510.8,796.1 512.7,798.9 514.7,799.4 516.8,799.1 518.3,801.3 520.9,798.8 523.4,797.1 525.0,798.5 526.9,799.1M499.9,845.3 501.6,844.3 503.3,843.3 505.3,842.3 507.7,841.9 509.1,839.3 511.3,838.0 513.9,837.3 513.8,831.0 518.2,833.4 520.5,831.7 523.5,831.0 527.8,831.8 529.6,829.2 532.6,828.1 533.7,824.4M535.2,825.2 533.9,821.7 532.9,818.2 530.1,815.5 531.1,811.3 530.5,807.9 528.8,805.1 528.5,801.8 527.1,799.2M522.5,761.7 526.3,763.2 525.7,765.6 525.6,768.0 527.8,769.9 526.1,772.4 530.4,774.0 531.8,776.2 530.7,778.6 533.3,780.7 534.3,783.0 531.7,785.7 531.8,788.3 532.4,790.8M527.1,799.5 529.4,796.9 530.5,793.2 533.1,791.1M573.0,747.0 574.9,749.4 572.3,752.0 575.2,754.2 573.7,756.9 573.2,759.4 571.3,762.2 570.4,764.7 570.1,766.9 568.9,769.3 567.3,771.7 566.2,773.9 565.1,775.9 564.1,777.9 563.4,779.7 563.3,781.2M532.8,791.6 535.1,788.4 537.4,788.7 539.6,789.8 541.8,791.6 544.2,790.9 546.6,788.9 549.1,787.1 551.3,787.8 553.7,786.2 555.7,788.1 558.2,784.8 560.5,783.1 562.7,781.8M323.5,480.5 326.8,480.5 327.3,483.3 330.8,483.5 331.8,486.3 332.0,490.1 334.2,492.1 335.5,495.2 335.5,499.9 338.6,501.7 341.5,504.1 342.9,508.0 344.7,511.7M314.7,475.4 312.0,474.8 309.7,475.9M322.9,535.2 324.0,533.7 325.2,532.2 326.0,530.0 328.1,529.7 329.4,527.7 332.0,527.9 333.6,526.2 336.0,525.7 338.1,524.2 340.7,523.6 343.3,522.5M343.6,522.5 342.6,518.0 345.7,515.7 345.5,511.6M380.7,493.4 379.0,495.5 377.6,498.0 374.9,500.0 371.5,501.6 368.0,502.9 364.5,504.2 361.3,505.6 357.4,506.0 354.8,508.3 351.6,509.6 347.9,509.8 344.5,510.3M328.4,465.0 326.9,466.2 323.7,467.2 323.4,468.6 320.8,469.5 319.0,470.7 317.9,472.2 316.9,473.9 314.9,475.3M292.8,439.2 294.7,441.9 297.7,444.6 297.8,446.3 298.7,448.2 295.6,449.0 297.1,450.7 296.6,452.1 299.3,454.1 300.0,455.8 300.2,457.7 297.3,458.5 295.9,460.2M368.0,547.1 367.3,546.7 368.3,543.9 367.7,542.5 366.0,542.0 365.1,539.7 361.3,540.5 359.1,538.7 357.1,536.1 354.6,533.5 352.2,530.3 348.8,528.3 346.0,525.2 343.3,522.0M671.7,548.0 674.2,545.3 675.7,542.1 679.0,540.0 682.5,537.9 685.6,535.7 686.8,532.8 689.1,530.5 691.3,528.3 692.4,525.9 694.5,524.0M672.7,548.0 673.5,550.0 675.7,550.3 676.9,552.0 680.6,550.9 681.0,553.9 683.0,555.5 684.0,558.5 686.2,560.3 686.5,564.6M691.5,565.4 693.2,562.4 695.7,561.7 696.9,557.4 697.7,552.6 701.0,554.6 703.2,553.7 706.0,554.8 708.2,554.3 710.0,552.8 712.0,551.9 713.8,550.5 716.7,551.9 719.0,551.7 721.4,551.6 722.3,548.1 724.0,546.4M691.6,565.1 689.3,562.8 686.5,564.2M723.8,547.4 721.8,546.5 718.9,546.2 718.9,542.8 717.1,540.8 715.4,538.7 712.4,537.3 710.1,535.3 710.1,531.9 708.6,529.5 707.0,527.2 706.3,524.7M706.6,524.2 705.0,523.7 703.0,524.7 701.6,523.1 699.0,525.8 697.7,524.3 696.1,524.0 694.4,524.0M643.7,545.1 646.9,544.3 650.2,546.4 653.3,547.7 655.9,550.7 658.2,553.6 660.9,553.3 663.3,554.0 666.5,551.7 669.2,550.9 672.4,548.0M669.4,515.3 671.2,517.3 672.6,519.4 676.6,519.9 680.2,520.3 684.7,519.6 685.8,521.1 687.7,521.8 689.4,522.2 691.5,522.1 694.2,521.2 695.0,522.0 694.4,524.0M658.0,593.1 660.8,591.9 663.8,590.7 666.9,589.5 668.2,586.7 670.9,585.0 672.9,582.7 675.7,581.0 678.1,579.0 681.0,577.3 680.9,572.8 684.6,572.0 684.6,567.4 686.6,564.8M706.6,595.4 705.6,592.9 702.8,591.6 702.7,588.2 702.5,584.8 701.9,581.6 699.7,579.5 697.5,577.2 695.6,574.7 692.7,572.8 692.2,569.0 691.5,565.4M730.3,545.9 727.6,545.9 724.1,547.4M713.1,495.2 712.4,497.9 711.9,500.6 711.2,503.0 710.4,504.9 710.6,508.3 710.9,511.9 709.8,512.9 709.3,514.9 708.0,515.5 708.0,518.3 707.4,520.1 706.4,521.5 706.7,524.5M413.5,618.4 417.0,615.2 420.2,616.8 423.6,618.1 427.1,619.6 430.5,621.4 434.3,620.8 437.9,621.9 441.2,623.8 444.1,626.8 447.4,627.9 451.0,628.1M472.5,597.8 471.4,599.8 469.9,601.5 472.4,604.9 472.4,607.3 473.5,610.1 471.5,611.8 468.6,613.3 467.4,615.5 468.8,618.9 467.9,621.5M450.9,629.3 454.4,629.2 456.3,625.4 459.3,624.4 462.3,623.3 464.6,620.7 468.2,621.3M501.4,612.5 499.5,613.0 498.8,614.8M468.5,621.3 471.4,621.6 474.3,621.0 475.2,623.4 477.6,622.5 480.3,620.3 483.3,617.5 484.2,617.3 484.5,618.5 486.4,616.7 487.7,616.8 489.7,615.7 491.6,615.8 494.0,614.0 496.2,613.7 498.6,614.4M533.5,658.6 532.8,655.0 531.5,654.4 530.9,652.2 529.3,652.0 527.2,653.0 526.7,648.7 524.2,649.8 522.1,649.6 520.2,648.2 518.3,646.4 516.1,647.5 514.1,645.1 511.9,643.1 509.6,640.6 507.1,639.4M507.0,639.3 505.9,635.8 504.0,632.4 503.3,629.4 503.1,626.7 499.4,623.5 497.3,620.8 497.7,618.5 500.8,617.2 499.7,614.9M533.3,873.6 535.9,872.3 537.5,870.6 540.5,869.3 541.2,867.4 543.4,865.9 543.5,863.8 544.3,861.9 547.9,860.8 549.9,859.1 551.9,857.3 553.5,855.2 557.3,853.5 559.8,851.4M534.3,826.3 535.4,826.1 536.5,825.8M559.5,851.5 558.9,849.8 557.3,848.6 553.6,848.4 552.1,846.6 552.7,843.2 552.4,840.0 549.0,838.7 547.3,835.9 542.6,835.0 539.8,832.8 538.6,829.2 536.5,826.3M603.3,857.6 601.5,854.0 599.6,850.3 596.6,849.0 594.1,846.9 591.2,845.5M559.5,851.8 562.3,851.2 565.0,850.5 567.1,851.2 570.7,848.3 573.3,847.9 576.4,845.7 579.3,843.9 581.4,845.1 583.4,847.3 586.1,846.5 588.5,847.1 591.1,845.6M611.2,816.1 609.3,814.8 607.1,815.1 605.4,811.0 603.3,809.0 601.1,807.7 599.0,809.2 596.6,807.1 593.9,805.0M611.0,814.9 613.0,814.7 615.3,814.8 616.1,811.3 617.7,809.3 618.0,805.0 620.5,804.5 622.2,802.6 623.2,799.4 624.2,796.3 627.5,795.7M573.7,780.6 576.0,782.0 575.8,785.0 576.0,787.8 577.6,790.0 579.1,792.4 582.5,794.1 584.1,796.6 587.7,798.6 588.1,801.5M574.3,780.4 577.4,778.6 578.8,775.5 581.8,774.0 581.5,768.7 583.7,766.6 584.9,763.2 587.3,761.7 590.4,761.8 594.3,763.2 597.7,764.1M594.1,804.3 591.1,803.4 588.4,801.1M598.0,764.3 601.1,768.7 604.6,772.6 608.4,776.2 612.3,779.4 615.9,783.0 619.2,786.6 621.0,791.5 623.8,794.4 627.1,795.5M618.2,836.1 618.0,833.5 616.2,833.0 616.1,830.5 616.4,827.7 614.3,826.8 613.8,824.3 611.7,822.5 610.7,819.6 611.4,815.7M591.2,845.7 591.8,842.8 589.9,839.2 591.9,836.4 591.6,833.1 591.2,829.7 591.7,826.4 592.6,823.3 593.0,820.1 594.1,817.2 594.0,814.0 593.7,810.8 594.0,807.9 593.4,804.8M632.8,794.0 630.0,795.3 627.2,795.6M562.5,781.9 564.2,781.7 566.5,780.8 568.5,781.0 571.5,779.8 574.2,780.2M536.3,826.1 540.7,827.6 544.0,826.7 546.1,823.8 550.3,824.0 553.8,823.1 557.4,822.0 561.4,821.5 564.6,819.7 566.5,816.3 569.3,814.1 573.3,813.3 575.8,810.9 578.8,809.2 581.8,807.8 583.9,805.4 585.7,802.8 588.4,801.8M593.6,747.7 595.5,751.5 595.3,754.2 594.3,756.7 596.3,760.6 598.2,764.5M453.2,661.7 456.9,661.2 458.5,664.7 462.1,664.1 465.8,663.3 469.5,662.2 472.6,662.7 475.8,662.5 479.3,661.6 481.8,663.4 485.7,660.8 488.4,661.4 491.5,660.6M454.1,661.8 450.4,661.5 446.5,660.5 444.6,663.2 441.4,663.2 439.4,665.5 436.5,665.7 434.2,667.2 431.8,668.4 429.9,670.1 425.8,667.8M460.0,690.7 464.5,688.8 468.2,686.5 471.2,684.1 474.3,681.8 475.8,679.4 479.7,677.2 481.5,674.8 484.4,672.6 487.7,670.4 490.7,668.2 490.1,665.2 491.9,662.5M460.3,690.9 458.4,690.0 455.4,690.7 451.2,693.6 448.9,692.9 446.0,693.2 443.4,692.2 440.7,691.4 438.0,688.4 435.1,689.3 432.6,691.8M492.9,662.1 491.4,661.8 491.5,660.7M450.5,628.8 452.2,632.3 453.1,635.8 453.0,639.3 452.3,642.8 451.5,646.2 450.4,649.6 449.6,652.8 451.4,655.7 453.1,658.4 453.7,661.0M507.6,640.0 506.0,641.0 506.4,644.8 505.1,646.6 503.2,647.8 501.1,649.3 497.7,650.0 497.6,653.5 495.5,655.8 493.3,658.1 491.5,660.7M521.3,701.1 518.5,698.7 516.2,695.9 514.7,692.6 513.7,689.0 512.8,685.4 509.4,683.0 509.1,679.3 507.6,676.2 506.5,673.0 503.3,671.5 501.5,669.3 500.9,666.5 498.0,665.8 498.1,662.4 494.2,663.3 492.1,662.3M460.0,703.9 459.3,701.9 460.6,698.9 459.8,697.5 460.4,695.4 460.7,693.6 460.1,692.5 459.3,691.4" fill="none" stroke="#2b2530" stroke-width="1.4" opacity="0.95"/>
<path d="M1175.0,308.1 1172.6,308.2 1170.3,308.8 1167.7,308.4M1160.6,282.1 1162.7,283.5 1163.5,285.8 1165.9,286.7 1166.4,288.9 1166.8,291.2 1167.2,293.5 1165.8,296.4 1166.4,298.7 1166.2,301.2 1166.6,303.5 1167.7,305.6 1167.6,308.0M1042.4,480.6 1043.6,476.9 1044.9,473.0 1045.9,468.9M1046.0,468.4 1048.0,464.2 1051.3,465.5 1053.8,463.5 1056.2,461.0 1059.1,460.3 1062.0,459.7 1064.3,456.7 1067.3,456.6 1070.8,458.2M1148.3,347.2 1144.0,345.5 1140.3,342.9 1136.0,341.3 1132.2,339.1M1206.1,333.5 1204.4,332.6 1202.2,332.4 1201.3,330.9 1200.3,329.4 1199.5,327.5 1197.8,326.2 1197.3,323.7 1191.3,325.2 1187.8,324.5 1184.5,323.4 1184.2,320.5 1182.6,318.5 1177.9,318.1 1169.8,318.7 1167.5,316.9 1164.5,315.2 1164.6,312.8 1164.4,310.6M1131.4,339.2 1130.3,336.2 1130.2,333.2 1128.5,330.3 1129.4,327.4 1127.0,324.6 1128.5,321.8 1129.3,319.2 1131.2,316.6 1136.2,314.1 1135.3,311.9M1163.9,310.3 1161.0,311.7 1157.4,310.6 1153.9,312.3 1150.2,311.1 1146.5,310.7 1142.7,311.5 1139.3,311.1 1135.8,311.7M1168.9,308.9 1165.1,308.7 1163.7,310.5M1099.2,287.9 1102.4,291.3 1100.4,293.6 1100.5,296.3 1102.5,299.1 1106.8,302.0 1104.4,304.2 1107.8,306.7 1108.0,309.1 1109.5,311.3M1109.6,311.1 1112.0,312.7 1113.9,314.1 1115.1,315.7 1117.9,314.9 1120.0,314.5 1123.9,312.3 1124.4,312.9 1125.5,313.0 1126.3,313.2 1127.6,313.3 1129.0,313.4 1132.1,312.6 1136.1,311.5M1123.0,425.3 1120.1,426.8 1117.6,427.4 1116.5,425.7 1114.6,424.7 1111.9,424.5 1111.8,420.0 1108.9,419.3 1106.3,417.7 1102.6,417.6M1102.9,417.1 1098.7,417.2 1095.8,417.9 1094.2,419.4 1092.8,420.8 1090.0,420.9 1089.0,422.3 1089.3,424.7 1086.2,424.0 1085.4,425.4 1082.7,424.9 1082.9,427.2 1080.4,427.1 1078.6,427.7 1078.3,429.8 1075.3,429.7 1074.6,431.9M1139.0,379.5 1136.8,378.6 1134.4,376.0 1131.7,374.0 1128.7,373.1 1125.5,369.7 1122.3,369.1 1118.9,366.8 1115.6,364.7 1112.5,363.6 1109.5,359.9 1107.0,358.3 1104.6,357.3 1102.7,355.0 1101.2,352.6M1132.3,339.6 1129.0,340.7 1126.7,342.9 1124.4,344.7 1120.4,344.0 1118.6,346.0 1114.6,344.7 1113.1,346.5 1111.0,347.1 1107.7,345.6 1106.0,345.8 1105.5,347.9 1104.0,347.6 1102.6,346.5 1101.9,347.0 1101.1,346.7 1100.3,345.6M1101.2,352.3 1100.8,349.3 1100.4,346.3M1109.6,311.4 1107.2,312.6 1104.6,313.5 1102.8,314.8 1100.6,315.6 1101.1,319.0 1098.3,318.3 1095.2,317.2 1095.1,319.2 1093.6,319.6 1093.3,321.0 1093.8,323.1 1093.5,324.5M1100.5,346.1 1099.8,344.2 1100.0,341.6 1099.6,339.6 1099.5,337.5 1099.0,335.5 1098.8,333.1 1098.3,330.9 1097.4,328.6 1095.5,326.9 1093.8,324.8M1062.0,313.9 1062.8,316.5 1065.9,315.9 1068.2,316.8 1070.4,318.6 1073.3,319.6M1093.9,325.2 1091.5,323.0 1089.0,321.7 1087.2,322.6 1085.0,323.0 1082.1,322.2 1079.0,321.0 1076.0,320.4 1073.1,319.6M1046.3,468.4 1045.1,466.7 1043.5,466.9 1041.9,467.7 1039.9,469.4M1033.5,464.2 1032.8,461.3 1033.6,454.7 1031.6,453.1 1029.8,450.5 1027.9,447.9 1025.9,445.1 1023.3,443.6 1020.3,442.8 1016.5,443.9 1015.0,440.7M1072.4,434.2 1070.8,431.9 1068.7,430.7 1068.0,428.6 1065.9,428.2 1065.6,426.4 1063.9,426.2 1062.3,426.2 1059.9,427.3 1060.0,424.9 1057.5,425.8 1054.1,428.2 1051.0,430.3 1049.2,429.5 1046.6,429.9 1044.2,429.1 1041.8,428.5 1039.5,427.1 1037.3,425.2M1103.4,416.8 1099.0,415.3 1095.4,413.3 1093.4,410.3 1090.4,407.8 1086.3,406.1 1083.8,403.0 1081.3,399.9M1038.3,418.9 1040.0,418.2 1042.7,417.9 1044.4,416.6 1047.5,416.1 1049.8,414.6 1051.5,412.4 1054.9,411.4 1058.1,410.0 1060.6,407.9 1065.2,407.7 1068.5,406.2 1070.8,403.4 1074.9,402.9 1079.2,402.6 1081.5,399.6M1101.2,352.3 1100.7,353.5 1100.0,354.9 1099.1,356.0 1098.3,358.1 1097.2,359.8 1095.4,360.8 1094.7,364.7 1092.8,366.4 1089.9,367.1 1087.6,369.3 1084.8,371.0 1082.4,373.9 1078.7,374.8 1075.0,375.9M1081.4,399.7 1079.6,396.6 1079.9,392.8 1078.8,389.3 1078.4,385.5 1077.2,382.1 1075.8,378.9 1075.0,375.6M989.7,393.1 991.7,394.3 993.9,394.7 996.4,395.6 998.9,395.4 1000.2,392.0 1003.5,393.2 1006.2,392.7 1009.2,392.9 1012.1,393.6M989.7,392.4 988.7,389.7 987.4,386.6 987.3,383.6 986.6,380.2 986.7,376.7 986.6,373.0 986.3,369.0 986.1,364.8 986.4,361.1 986.5,357.1 985.9,353.0 985.5,349.0M1012.4,393.3 1012.7,391.1 1014.7,389.6 1017.9,389.3 1018.4,386.7 1018.6,383.6 1019.9,381.1 1022.8,379.9 1022.9,375.5 1024.4,372.2 1025.3,368.1 1028.1,365.7 1033.4,365.8 1034.2,360.8 1034.5,355.3M1025.2,342.7 1027.2,343.3 1029.1,344.3M1027.8,344.9 1032.3,346.5 1034.6,349.2 1034.8,352.8 1036.1,356.2M963.9,385.3 967.2,382.9 970.0,386.0 972.7,386.3 975.3,387.5 977.5,385.5 979.5,385.2 981.3,386.0 982.9,386.9 984.5,388.0 987.2,393.0 989.0,393.9 989.6,392.4M1026.3,411.5 1024.6,409.3 1023.2,407.3 1022.6,405.3 1021.4,403.5 1020.4,401.6 1019.4,399.6 1017.9,397.8 1016.3,396.0 1014.7,393.7 1011.9,393.2M1075.2,375.1 1074.2,371.9 1072.5,370.2 1070.6,369.1 1067.6,369.7 1064.8,369.9 1067.0,362.9 1064.1,362.9 1062.7,360.4 1060.3,358.9 1056.6,358.8 1051.3,360.5 1049.1,357.2 1045.4,355.9 1040.1,356.8 1035.5,356.7M1072.8,319.7 1072.3,321.4 1073.6,323.7 1070.8,324.5 1068.8,325.5 1066.8,326.5 1065.6,327.9 1060.6,327.8 1061.2,330.1 1059.5,331.5 1056.8,332.7 1055.7,334.9 1050.9,335.3 1048.4,337.1 1042.5,337.0 1039.4,338.8 1034.8,339.7 1030.9,341.4 1028.5,344.1" fill="none" stroke="#4a3f60" stroke-width="1" opacity="0.6"/>
<g fill="none" stroke="#9a88c6" stroke-linecap="round" opacity="0.7" filter="url(#bl3)"><polyline points="416,555 421,620 433,670 454,725" stroke-width="20"/><polyline points="454,725 486,800 516,870 540,920 566,950" stroke-width="40"/></g>
</g>
<path d="M408.1,62.6 L410.7,58.7 L409.7,54.1 L410.3,50.3 L414.4,49.9 L416.0,47.1 L418.3,45.0 L420.6,42.9 L421.7,39.5 L425.2,38.6 L428.3,38.1 L431.3,37.3 L434.7,40.8 L437.5,37.8 L440.6,37.0 L443.7,37.1 L445.3,32.4 L448.4,32.7 L451.6,32.9 L454.6,34.0 L457.8,31.9 L461.4,31.3 L465.2,30.9 L468.5,29.3 L471.3,28.1 L474.5,28.1 L477.0,26.3 L480.4,27.4 L483.7,28.9 L487.0,30.1 L490.6,30.4 L493.4,28.5 L496.4,27.0 L499.0,28.6 L501.0,30.9 L503.3,33.1 L505.0,35.9 L506.2,39.0 L509.8,40.0 L511.8,42.5 L515.0,43.5 L517.7,45.7 L521.4,45.3 L524.3,46.9 L527.0,49.1 L530.4,49.5 L532.9,51.9 L535.9,53.6 L538.4,56.0 L543.0,55.4 L544.3,59.5 L545.0,63.7 L547.4,67.3 L550.7,67.2 L554.0,67.4 L556.6,69.8 L559.6,71.0 L563.0,70.7 L566.0,71.9 L567.6,76.6 L570.5,75.1 L573.8,75.5 L576.8,74.9 L580.2,75.6 L583.1,74.5 L586.1,73.4 L589.2,72.7 L592.8,71.8 L595.3,69.0 L598.1,66.7 L601.6,65.7 L604.8,65.8 L607.9,65.3 L610.9,64.2 L613.9,63.2 L617.1,63.7 L619.9,60.8 L623.3,62.6 L626.3,63.8 L629.4,64.2 L632.8,62.9 L635.6,65.0 L638.9,64.7 L641.7,66.8 L645.3,64.9 L648.0,67.3 L651.0,68.6 L652.7,71.7 L654.9,73.9 L658.1,75.0 L659.8,78.3 L658.0,81.2 L657.3,84.3 L655.5,87.3 L654.7,90.7 L651.4,93.0 L651.2,96.7 L650.2,100.1 L647.2,102.1 L646.4,105.6 L642.7,107.1 L641.9,110.6 L638.0,111.4 L634.1,112.2 L634.1,115.3 L634.9,118.6 L631.5,121.3 L632.6,124.6 L629.4,124.4 L626.3,124.9 L623.1,125.1 L620.1,126.3 L617.2,127.7 L614.0,127.6 L616.2,131.0 L617.7,134.6 L618.6,138.5 L616.4,141.2 L617.9,145.1 L615.6,147.8 L619.1,147.6 L622.6,148.3 L626.0,149.1 L629.5,149.3 L630.0,152.3 L632.6,154.6 L634.1,157.3 L633.6,160.6 L633.6,163.8 L635.7,166.3 L632.5,167.5 L629.8,169.7 L627.2,171.9 L624.0,173.2 L621.4,175.3 L618.0,176.3 L615.5,178.7 L612.4,177.8 L610.0,175.5 L607.1,174.2 L604.6,172.1 L601.6,171.0 L602.3,173.9 L601.2,177.4 L603.0,180.0 L603.9,182.9 L607.8,184.8 L607.2,188.1 L607.8,191.1 L609.4,194.2 L609.4,197.7 L610.9,200.8 L612.4,204.2 L608.9,206.8 L609.4,210.1 L612.6,210.5 L615.3,207.9 L618.6,208.6 L621.2,210.4 L623.1,212.8 L624.4,215.6 L626.4,217.9 L629.3,219.6 L632.0,221.9 L635.8,221.2 L638.8,222.5 L641.3,224.4 L644.4,225.2 L646.6,227.8 L649.9,228.2 L652.5,230.0 L655.8,230.2 L658.2,233.5 L659.0,237.4 L660.4,241.1 L663.5,241.3 L665.8,244.2 L668.9,244.3 L672.0,244.4 L674.9,245.1 L677.6,246.8 L680.6,247.3 L678.1,249.4 L675.4,251.1 L672.0,251.5 L668.3,251.5 L666.6,255.0 L664.7,258.2 L662.9,261.5 L660.4,264.3 L660.8,267.9 L660.3,271.3 L658.1,274.4 L657.2,277.8 L657.3,281.3 L655.3,284.4 L653.0,287.3 L651.2,290.6 L653.9,291.9 L656.7,293.2 L660.1,293.1 L662.5,295.2 L665.1,296.8 L667.7,298.6 L670.8,299.5 L673.3,301.4 L676.1,302.8 L678.5,304.9 L680.6,307.4 L683.8,308.2 L686.3,310.0 L688.9,311.8 L691.6,313.6 L694.7,314.7 L697.3,316.7 L701.5,314.7 L703.5,318.3 L707.0,318.3 L709.8,319.9 L712.6,321.2 L715.2,322.9 L717.9,324.3 L720.8,325.4 L723.9,325.9 L726.2,328.2 L729.7,327.8 L732.5,329.1 L735.3,330.4 L738.4,331.7 L741.8,331.1 L744.6,334.0 L747.9,333.6 L751.0,335.2 L754.5,333.8 L757.8,334.1 L760.9,335.0 L764.4,335.0 L767.9,335.3 L771.3,333.9 L774.9,334.6 L778.3,334.1 L781.8,333.9 L784.5,336.4 L788.5,335.7 L791.2,338.3 L795.0,338.0 L798.0,339.7 L800.7,341.4 L802.5,343.9 L804.8,345.9 L805.9,349.0 L807.3,351.9 L809.9,353.7 L812.0,355.9 L815.3,356.2 L818.6,356.9 L821.7,355.5 L825.0,355.2 L828.2,354.8 L831.4,355.9 L835.0,356.2 L837.2,359.5 L841.2,358.8 L843.5,362.1 L846.8,362.9 L850.0,363.0 L853.1,364.2 L856.4,363.3 L859.6,362.7 L862.7,363.9 L865.9,363.2 L869.1,363.7 L872.3,364.0 L875.4,364.3 L878.5,364.4 L881.6,364.6 L884.8,364.3 L887.8,365.2 L891.1,363.7 L894.0,365.7 L897.2,365.1 L900.2,366.4 L902.2,363.5 L903.3,360.4 L901.5,356.4 L904.3,353.8 L905.1,350.6 L905.3,347.2 L907.2,344.3 L908.0,341.2 L907.4,337.9 L906.5,334.6 L908.1,331.5 L908.5,328.4 L909.0,325.2 L908.1,321.9 L909.5,318.8 L912.9,318.4 L916.2,317.6 L918.9,315.0 L922.3,314.5 L925.7,314.1 L928.6,316.4 L931.5,318.8 L931.8,322.3 L929.6,325.7 L930.8,329.2 L931.7,332.8 L931.3,336.3 L930.4,339.7 L931.6,343.2 L930.7,347.3 L934.0,350.1 L935.0,353.6 L938.2,354.6 L941.4,355.9 L944.8,356.3 L947.5,359.3 L951.3,358.2 L954.4,357.5 L957.6,358.5 L960.7,357.8 L963.9,358.0 L967.0,357.3 L969.9,355.2 L974.0,356.7 L976.7,354.0 L980.0,353.0 L983.2,353.6 L986.6,353.2 L989.9,354.0 L992.9,355.6 L996.1,356.5 L999.5,356.2 L1002.8,356.7 L1006.1,356.8 L1009.3,356.2 L1012.5,355.3 L1015.8,355.9 L1019.0,355.4 L1022.2,354.6 L1025.5,355.1 L1028.8,355.4 L1032.0,354.0 L1033.3,349.8 L1034.2,345.4 L1033.4,342.0 L1034.0,338.4 L1034.6,334.7 L1032.3,331.5 L1032.0,328.0 L1028.8,329.2 L1025.5,330.3 L1021.9,330.3 L1019.0,332.4 L1017.3,329.1 L1019.3,325.9 L1019.0,322.6 L1022.4,323.9 L1026.0,322.3 L1029.4,324.6 L1032.9,324.0 L1036.4,323.7 L1039.1,321.8 L1042.2,321.0 L1044.4,318.1 L1047.7,317.4 L1051.6,317.9 L1053.7,315.0 L1055.3,312.3 L1058.0,310.7 L1061.9,310.9 L1064.5,307.9 L1068.1,307.5 L1071.0,305.3 L1073.2,302.4 L1073.8,298.3 L1077.6,296.6 L1080.5,295.5 L1083.7,295.5 L1086.5,293.7 L1089.5,292.9 L1092.8,293.4 L1095.6,291.2 L1097.6,288.2 L1099.6,285.1 L1102.8,283.3 L1105.8,281.4 L1108.9,280.5 L1111.0,277.8 L1114.3,277.3 L1116.6,275.0 L1119.2,277.5 L1122.8,277.5 L1126.3,277.7 L1129.4,278.8 L1132.1,281.1 L1134.9,283.1 L1138.3,283.6 L1141.0,282.3 L1143.7,281.0 L1145.9,278.7 L1148.8,277.8 L1151.3,276.0 L1154.7,274.2 L1158.4,272.9 L1162.1,271.7 L1165.7,272.9 L1168.7,274.9 L1170.8,278.2 L1171.2,281.4 L1170.8,284.7 L1174.4,286.5 L1177.2,289.1 L1179.5,292.3 L1177.5,295.3 L1176.7,298.8 L1175.1,302.0 L1177.9,305.1 L1181.5,303.9 L1184.9,303.1 L1188.0,304.9 L1191.3,305.1 L1194.6,305.3 L1198.2,307.0 L1200.6,310.5 L1204.4,311.8 L1204.7,315.1 L1206.4,318.6 L1203.3,321.5 L1200.4,322.8 L1198.7,325.7 L1195.1,326.0 L1193.8,329.4 L1191.6,331.6 L1187.6,331.5 L1186.0,334.5 L1188.9,336.3 L1190.2,339.4 L1191.5,342.6 L1194.6,344.2 L1196.8,346.5 L1193.5,345.2 L1190.3,343.7 L1187.3,341.7 L1183.8,341.0 L1180.8,342.2 L1177.4,341.4 L1174.3,342.0 L1170.9,340.9 L1168.2,343.7 L1165.1,344.7 L1161.8,343.8 L1158.8,345.3 L1155.6,345.4 L1153.0,347.4 L1150.6,349.6 L1147.6,351.1 L1146.2,354.5 L1143.5,356.3 L1142.5,360.1 L1139.1,361.1 L1136.1,362.7 L1134.1,365.5 L1135.5,369.0 L1134.9,372.1 L1134.7,375.3 L1132.5,378.1 L1132.3,381.3 L1131.8,384.4 L1130.4,387.6 L1127.0,388.9 L1125.1,391.7 L1122.6,393.8 L1121.4,397.1 L1117.6,398.2 L1116.6,401.7 L1117.3,405.1 L1118.8,408.2 L1119.8,411.5 L1118.9,414.4 L1117.4,417.0 L1115.2,419.3 L1114.8,422.4 L1112.4,424.6 L1111.4,427.5 L1109.5,429.9 L1108.6,432.8 L1108.0,435.9 L1108.2,439.3 L1105.1,441.2 L1103.4,443.7 L1102.6,446.6 L1101.4,449.4 L1098.4,448.5 L1095.3,449.0 L1092.2,448.5 L1089.1,448.6 L1086.2,447.3 L1082.2,445.0 L1077.6,445.1 L1077.5,448.4 L1078.0,451.6 L1078.8,454.9 L1077.6,458.1 L1077.1,461.1 L1075.1,463.7 L1075.4,466.8 L1075.8,470.0 L1073.3,472.6 L1072.7,475.5 L1072.4,478.5 L1072.0,481.5 L1071.1,484.4 L1071.0,487.4 L1070.2,490.3 L1070.9,493.6 L1068.3,496.1 L1069.0,499.3 L1067.3,502.8 L1064.4,505.8 L1064.6,510.1 L1061.6,511.9 L1058.6,509.5 L1055.6,509.2 L1052.6,510.1 L1051.8,507.1 L1052.1,503.9 L1051.9,500.7 L1051.3,497.7 L1049.8,494.7 L1049.7,491.6 L1049.4,488.5 L1049.4,485.2 L1048.8,482.1 L1046.9,479.4 L1046.0,476.3 L1045.2,473.3 L1045.1,470.0 L1042.4,467.5 L1041.3,464.5 L1041.7,461.1 L1040.7,458.1 L1036.1,458.0 L1032.0,456.0 L1031.4,459.1 L1029.8,461.7 L1028.3,464.5 L1028.6,467.9 L1025.9,470.2 L1025.5,473.3 L1024.5,476.6 L1020.8,477.3 L1019.0,479.8 L1015.7,478.0 L1013.8,475.1 L1013.0,471.3 L1010.4,469.0 L1008.7,465.9 L1007.0,462.8 L1006.0,459.4 L1005.0,456.0 L1006.7,452.9 L1007.7,449.5 L1009.0,446.2 L1010.4,443.0 L1013.7,443.0 L1016.3,440.6 L1019.3,440.0 L1022.3,439.0 L1025.5,438.6 L1028.8,437.3 L1031.3,435.0 L1034.1,433.0 L1036.0,429.9 L1038.6,427.8 L1039.2,424.1 L1040.8,420.7 L1040.7,416.9 L1043.1,413.4 L1046.1,410.4 L1043.1,409.5 L1040.1,409.5 L1037.0,410.7 L1034.1,410.0 L1031.0,409.9 L1028.1,408.1 L1025.1,407.2 L1022.0,409.5 L1019.0,409.3 L1015.9,409.2 L1012.8,411.2 L1009.8,408.8 L1006.7,408.9 L1003.6,409.8 L1000.6,408.0 L997.5,410.1 L994.5,408.8 L991.4,408.4 L988.3,409.5 L985.3,407.5 L982.2,408.2 L979.2,406.6 L975.4,408.0 L972.2,407.3 L969.3,404.8 L965.9,404.6 L962.7,403.9 L961.3,400.7 L961.9,397.4 L961.8,394.2 L961.5,390.9 L962.1,387.6 L961.4,384.4 L962.4,381.0 L960.5,377.9 L957.6,375.6 L954.2,375.2 L951.1,373.7 L947.9,372.4 L944.5,371.9 L941.0,371.4 L937.4,369.8 L934.2,370.5 L931.3,368.3 L928.1,368.6 L925.2,366.8 L921.9,367.8 L918.8,367.5 L915.6,369.5 L912.8,371.9 L909.2,373.3 L907.2,376.8 L907.0,380.7 L907.4,384.5 L907.2,388.4 L910.3,390.1 L913.8,390.8 L916.9,392.7 L920.2,394.0 L923.4,395.4 L926.1,397.9 L928.1,401.4 L932.3,402.1 L935.0,404.7 L931.9,405.4 L928.8,406.4 L925.7,407.0 L922.5,408.2 L920.4,411.4 L917.3,412.8 L914.1,414.0 L911.8,417.1 L909.1,419.8 L907.2,423.2 L908.8,426.3 L910.7,429.2 L911.8,432.5 L915.5,432.9 L918.6,435.3 L921.8,437.3 L925.7,437.2 L926.0,440.7 L926.7,444.2 L927.0,447.7 L928.0,451.1 L928.5,454.3 L927.5,457.3 L927.1,460.4 L926.2,463.5 L926.1,466.6 L925.7,469.7 L929.1,469.4 L931.7,472.2 L935.0,472.0 L933.5,475.0 L935.2,478.0 L934.6,481.1 L934.8,484.1 L934.3,487.1 L936.3,490.1 L933.5,493.1 L935.4,496.2 L933.9,499.2 L935.0,502.2 L935.3,505.3 L936.1,508.4 L936.3,511.5 L935.8,514.7 L937.8,517.6 L937.4,520.8 L934.0,521.7 L930.5,522.4 L927.2,524.0 L923.4,523.1 L920.3,521.5 L917.0,521.7 L913.7,521.7 L910.6,520.2 L907.2,520.8 L905.6,517.1 L905.5,513.1 L904.8,509.2 L901.2,509.9 L898.9,512.3 L897.9,516.6 L895.7,519.4 L891.8,519.6 L888.6,520.8 L884.7,521.6 L881.7,524.5 L878.0,525.8 L876.1,528.7 L873.5,531.1 L872.5,534.7 L869.7,537.0 L867.8,539.9 L867.9,543.3 L869.0,546.5 L869.9,549.7 L871.0,552.9 L869.4,555.7 L866.6,557.4 L865.2,560.4 L861.9,561.8 L859.0,563.5 L859.2,567.8 L858.2,571.0 L854.9,572.4 L852.6,574.6 L849.3,575.1 L845.9,575.3 L842.6,576.1 L839.8,578.5 L836.5,579.3 L832.8,578.3 L830.1,581.2 L826.6,581.0 L823.1,581.9 L820.6,584.7 L817.1,585.6 L814.1,587.4 L811.4,589.7 L808.8,591.7 L806.8,594.1 L806.0,597.5 L803.1,599.2 L801.2,601.8 L799.0,604.1 L796.3,606.0 L795.3,609.2 L793.6,611.9 L791.5,614.4 L789.2,616.5 L786.5,618.3 L785.5,621.7 L782.1,623.0 L780.7,625.9 L779.0,628.6 L776.8,630.9 L774.5,633.7 L770.9,634.3 L767.8,635.8 L766.0,639.5 L761.7,639.1 L759.4,641.8 L755.9,642.8 L754.1,645.9 L751.5,648.0 L747.9,648.8 L746.0,651.8 L744.2,654.8 L742.1,657.4 L739.1,658.6 L736.6,660.6 L734.0,662.5 L732.6,666.0 L728.3,665.7 L726.5,668.6 L723.6,670.0 L722.9,673.2 L722.7,676.5 L721.3,679.6 L721.5,683.0 L718.5,684.7 L715.6,686.5 L712.0,686.9 L708.6,687.6 L706.2,690.4 L703.0,691.6 L699.5,690.9 L696.5,692.5 L693.3,693.7 L690.0,693.8 L687.0,695.4 L686.9,699.2 L683.7,700.7 L682.9,704.0 L680.4,705.9 L679.7,709.3 L677.0,711.1 L673.5,711.9 L670.1,710.1 L666.6,710.9 L663.2,711.1 L659.7,711.1 L658.3,714.3 L655.9,717.0 L655.6,720.8 L653.6,723.8 L651.0,726.3 L651.1,729.3 L651.8,732.4 L651.6,735.4 L651.1,738.5 L651.0,741.5 L652.5,745.7 L653.8,750.0 L654.0,753.4 L652.3,756.8 L652.9,760.2 L652.7,763.6 L653.8,767.0 L654.7,770.4 L655.9,773.7 L657.6,776.9 L657.2,780.6 L657.9,784.9 L658.0,789.2 L658.7,792.7 L656.4,795.0 L654.3,797.5 L652.5,800.0 L652.0,803.1 L652.5,806.5 L650.4,808.9 L650.4,812.1 L648.7,814.7 L647.0,817.4 L646.9,820.6 L645.1,823.2 L642.6,825.6 L643.1,829.0 L640.9,831.5 L641.9,835.1 L641.9,838.5 L642.6,841.9 L641.3,845.4 L642.7,848.8 L641.2,852.1 L643.4,855.3 L642.9,858.5 L644.3,861.7 L643.3,865.0 L642.4,868.3 L643.4,871.5 L643.9,874.8 L644.7,878.0 L643.2,881.3 L643.6,884.5 L640.2,883.8 L636.8,884.0 L633.4,884.3 L630.0,884.5 L627.3,888.0 L623.2,889.6 L620.1,891.9 L619.8,895.8 L618.2,898.9 L615.7,901.6 L614.6,905.0 L618.3,906.1 L619.2,909.8 L621.5,912.1 L623.5,914.8 L625.1,917.8 L628.3,919.4 L625.0,918.4 L621.2,919.8 L618.0,917.8 L614.6,916.9 L611.1,918.0 L607.8,919.3 L604.8,921.8 L601.0,922.0 L599.6,925.2 L595.9,925.7 L593.7,927.9 L591.5,930.2 L589.1,932.2 L590.1,935.9 L586.4,938.7 L587.4,942.4 L586.5,946.5 L582.5,946.9 L578.5,947.3 L577.2,950.9 L573.9,952.5 L570.3,953.6 L567.0,955.2 L563.8,954.6 L562.2,951.1 L558.3,951.6 L556.2,948.8 L553.4,947.5 L551.6,945.0 L548.9,943.3 L548.4,939.9 L544.9,938.8 L543.5,936.0 L542.1,933.2 L539.9,931.1 L538.7,928.2 L537.1,925.6 L534.6,923.7 L533.6,920.5 L532.6,917.4 L531.9,914.1 L531.3,910.9 L531.5,907.4 L529.9,904.4 L529.7,901.1 L528.5,897.9 L527.8,894.7 L526.0,892.1 L526.3,888.7 L523.5,886.5 L523.3,883.4 L523.4,880.0 L520.1,878.1 L519.8,874.9 L517.4,872.6 L517.6,869.2 L516.0,866.2 L513.9,863.3 L513.7,859.8 L512.3,856.7 L511.6,853.3 L511.6,849.7 L509.1,847.0 L507.2,844.3 L505.3,841.5 L502.7,839.4 L500.4,836.9 L497.8,834.7 L495.0,832.7 L494.2,829.1 L492.0,826.6 L492.3,823.2 L490.3,820.7 L488.4,818.1 L489.2,814.6 L486.4,812.3 L485.2,809.5 L483.7,806.8 L482.8,803.9 L482.4,800.8 L483.2,797.2 L480.3,795.0 L478.6,792.4 L478.4,789.2 L477.0,786.3 L476.4,783.2 L474.2,780.6 L474.8,777.1 L474.4,773.9 L473.2,771.0 L472.5,767.9 L470.0,765.4 L468.7,762.5 L470.4,758.7 L469.3,755.7 L466.1,753.4 L466.5,750.0 L464.8,747.3 L462.9,744.9 L461.0,742.3 L459.7,739.3 L457.8,736.7 L455.5,734.2 L454.3,731.2 L452.6,728.4 L450.8,725.7 L447.7,723.8 L447.4,720.2 L443.7,718.1 L444.3,714.3 L442.4,711.6 L442.8,707.9 L442.0,704.7 L440.4,701.8 L438.7,698.9 L437.9,695.7 L437.6,692.3 L435.4,689.6 L434.3,686.6 L435.3,683.3 L434.6,680.2 L433.8,677.2 L434.4,673.9 L432.0,671.1 L433.0,667.8 L430.9,664.9 L430.5,661.8 L429.8,658.7 L430.3,655.5 L429.8,652.4 L427.8,649.8 L427.8,646.6 L425.9,643.9 L427.0,640.4 L426.8,637.2 L424.5,634.6 L423.5,631.7 L424.3,628.2 L422.7,625.2 L423.5,621.8 L421.0,618.9 L418.9,616.0 L421.0,612.3 L418.9,609.4 L418.4,606.2 L416.8,603.2 L416.5,599.9 L415.1,596.9 L415.7,593.4 L414.3,590.4 L415.9,586.7 L414.5,583.7 L413.3,580.6 L412.2,577.0 L412.8,573.6 L414.1,570.3 L415.0,567.0 L413.6,563.7 L415.6,560.8 L416.1,557.7 L415.8,554.6 L416.3,551.5 L417.6,548.5 L418.8,545.5 L419.3,542.4 L418.3,539.2 L417.4,536.1 L417.2,532.8 L414.9,530.1 L414.9,526.7 L412.8,523.9 L413.4,520.4 L411.8,517.5 L411.4,513.7 L412.4,510.1 L414.0,506.7 L411.1,505.3 L408.4,503.4 L405.3,502.4 L404.2,505.9 L401.4,508.1 L398.8,510.4 L396.7,513.2 L401.0,515.3 L400.1,518.9 L400.3,522.7 L398.8,526.2 L396.1,528.3 L393.8,530.7 L390.2,531.7 L388.1,534.5 L385.8,537.0 L383.3,539.3 L380.6,541.2 L376.9,540.5 L373.6,540.7 L371.0,542.8 L367.8,543.4 L365.3,545.7 L362.6,547.6 L359.0,547.0 L356.2,548.7 L353.3,550.0 L351.0,547.8 L347.4,547.6 L345.6,544.7 L342.6,543.5 L340.7,540.7 L337.4,540.1 L334.8,538.3 L332.2,536.6 L330.5,533.5 L327.3,532.7 L324.8,530.9 L321.9,529.6 L319.2,528.0 L316.7,526.2 L315.5,522.5 L312.2,521.8 L308.9,520.8 L307.3,518.0 L306.1,514.9 L304.2,512.4 L301.2,511.1 L299.6,508.3 L297.5,506.2 L294.8,504.5 L295.7,500.1 L294.8,495.8 L298.3,495.8 L301.8,497.3 L305.2,496.0 L308.7,497.2 L312.2,495.8 L315.0,494.0 L318.5,494.9 L321.0,492.2 L323.9,491.1 L327.3,491.5 L330.1,489.7 L331.9,486.6 L335.2,485.3 L336.8,482.1 L340.9,481.8 L342.5,478.5 L345.8,475.8 L349.0,473.1 L346.1,475.3 L342.4,475.5 L338.9,476.1 L336.2,478.8 L332.6,479.0 L329.5,480.7 L325.8,479.2 L322.5,480.7 L319.1,481.9 L315.7,482.8 L312.2,482.8 L309.6,481.1 L306.1,481.5 L302.8,481.6 L300.8,478.4 L297.9,477.5 L296.1,473.9 L292.7,474.2 L290.2,471.9 L287.0,470.5 L284.3,468.4 L282.6,465.1 L279.7,463.3 L276.2,462.5 L273.0,460.9 L269.9,459.0 L270.2,455.4 L270.8,451.8 L271.0,448.2 L274.1,447.7 L277.1,447.1 L280.4,447.5 L283.5,447.2 L286.2,445.0 L285.9,440.8 L288.3,437.3 L291.6,439.6 L294.8,437.2 L298.1,438.1 L301.3,436.2 L304.6,437.0 L307.8,436.8 L311.1,436.6 L314.3,436.3 L318.7,439.5 L322.3,440.3 L325.9,440.1 L329.5,439.5 L332.2,437.4 L335.6,436.9 L338.9,436.3 L341.9,434.9 L344.7,433.0 L346.8,437.3 L349.9,435.5 L353.2,433.9 L356.5,432.4 L359.8,430.8 L358.5,427.9 L357.9,424.9 L360.0,421.5 L357.8,418.8 L357.7,415.7 L356.8,412.7 L355.0,410.1 L355.6,406.6 L354.9,403.5 L352.2,401.2 L351.2,398.3 L347.8,396.4 L343.7,396.0 L340.3,394.0 L339.7,390.4 L337.1,388.3 L333.9,386.6 L333.5,382.9 L330.6,381.0 L331.2,377.6 L331.5,374.1 L331.6,370.6 L330.9,367.1 L331.7,363.7 L328.0,363.4 L324.6,361.6 L320.8,361.5 L317.6,359.3 L313.9,357.8 L311.1,355.0 L313.7,352.2 L312.6,348.5 L313.1,345.1 L314.3,342.0 L316.1,339.3 L319.1,337.9 L321.5,335.8 L323.2,333.0 L325.7,331.1 L326.4,327.4 L329.3,325.8 L331.4,323.4 L333.8,321.4 L337.5,320.0 L341.3,319.0 L344.7,317.1 L348.3,319.3 L346.6,325.2 L351.2,326.8 L354.1,325.2 L357.4,325.4 L360.6,324.9 L363.7,324.0 L366.6,322.6 L368.9,318.9 L372.4,319.6 L375.9,320.3 L378.6,318.0 L381.6,316.9 L384.3,314.9 L388.0,316.0 L390.7,314.1 L391.9,311.1 L392.6,307.8 L394.9,305.6 L396.7,303.0 L397.7,299.9 L400.1,297.8 L402.0,295.3 L404.6,293.7 L407.2,292.2 L410.0,290.9 L411.7,288.3 L413.9,286.1 L416.8,285.0 L419.0,282.9 L420.9,280.0 L422.8,277.0 L426.7,275.9 L428.0,272.4 L430.7,270.1 L432.9,267.4 L434.3,264.4 L433.5,261.0 L435.8,258.2 L436.0,255.0 L439.0,254.4 L441.6,252.9 L444.6,252.2 L447.1,250.2 L449.5,248.0 L453.0,248.8 L452.8,245.7 L452.2,242.6 L453.0,239.5 L455.7,237.9 L457.5,235.4 L459.2,232.7 L461.7,230.9 L464.7,229.6 L466.8,227.3 L468.4,224.6 L470.6,222.5 L472.4,219.9 L474.7,217.9 L474.2,214.7 L474.5,211.5 L473.5,208.4 L473.4,205.2 L471.8,202.2 L472.4,198.9 L472.2,195.3 L474.7,192.7 L477.3,190.2 L480.8,190.1 L484.4,190.5 L487.5,189.3 L489.9,186.4 L492.8,184.8 L496.4,185.0 L497.1,181.1 L496.4,177.2 L493.2,176.3 L489.7,177.4 L486.9,174.7 L483.5,175.0 L480.4,173.4 L477.0,174.1 L474.7,171.5 L472.5,168.9 L469.6,166.9 L466.9,164.8 L463.7,164.4 L461.0,162.7 L458.0,161.9 L455.6,159.4 L452.1,159.8 L449.0,159.1 L446.8,156.1 L443.7,155.5 L444.5,152.3 L444.4,149.2 L443.8,146.1 L441.2,143.2 L441.6,140.1 L441.5,136.9 L441.7,133.8 L441.4,130.7 L438.9,127.9 L440.3,124.5 L440.0,121.4 L438.3,118.4 L438.7,115.2 L439.1,111.9 L437.5,109.0 L439.9,107.1 L442.8,105.9 L445.1,103.9 L446.8,101.3 L449.8,99.8 L452.6,97.9 L455.0,95.4 L458.6,94.8 L460.8,92.0 L457.8,91.2 L455.0,90.1 L452.7,87.7 L449.3,87.7 L446.8,85.9 L446.8,82.7 L446.0,79.7 L443.5,77.3 L440.2,76.5 L437.2,75.0 L434.6,72.8 L431.3,72.0 L428.2,67.3 L424.8,66.6 L421.4,68.7 L418.0,68.5 L414.6,66.1 L411.2,67.3Z" fill="none" stroke="#2a2a2a" stroke-width="1.35"/>
<g fill="#9a74ae" stroke="#2a2a2a" stroke-width="1.2"><path d="M1062.4,779.2 L1065.2,780.1 L1067.4,782.2 L1068.3,785.1 L1067.2,787.9 L1066.5,790.6 L1065.7,793.4 L1066.4,796.3 L1065.8,799.5 L1065.9,802.8 L1065.0,806.0 L1065.2,808.7 L1063.6,811.1 L1062.5,813.6 L1063.4,816.4 L1061.7,818.8 L1061.3,822.0 L1059.0,824.0 L1058.9,827.4 L1057.3,830.5 L1055.8,833.2 L1056.7,836.1 L1058.1,839.1 L1056.6,841.8 L1056.3,844.6 L1052.8,845.5 L1049.3,844.6 L1048.6,841.8 L1048.5,839.0 L1048.1,836.2 L1048.9,833.3 L1048.3,830.5 L1049.2,827.9 L1049.7,825.1 L1051.4,822.7 L1052.0,820.0 L1053.5,817.8 L1052.4,814.8 L1054.3,812.7 L1055.3,810.4 L1054.3,807.6 L1054.6,804.7 L1053.5,801.9 L1054.3,798.9 L1054.0,796.0 L1054.8,793.0 L1055.4,790.0 L1055.7,786.9 L1057.3,784.2 L1059.6,781.5Z"/><path d="M1051.7,871.8 L1050.9,875.6 L1048.9,878.0 L1046.5,878.0 L1044.5,875.6 L1043.7,871.8 L1044.5,868.0 L1046.5,865.6 L1048.9,865.6 L1050.9,868.0Z"/><path d="M1066.2,826.5 L1065.3,830.4 L1063.5,830.4 L1062.6,826.5 L1063.5,822.6 L1065.3,822.6Z"/><path d="M1058.9,920.7 L1057.8,922.6 L1055.6,922.6 L1054.5,920.7 L1055.6,918.8 L1057.8,918.8Z"/><path d="M1086.0,980.0 L1089.4,980.7 L1092.0,983.0 L1094.0,985.3 L1093.8,988.4 L1095.0,991.0 L1094.8,993.7 L1092.1,995.3 L1092.0,998.0 L1090.3,996.0 L1088.0,995.0 L1085.5,993.3 L1086.2,990.2 L1085.0,988.0 L1084.5,985.2 L1085.7,982.7Z"/><path d="M1079.0,959.4 L1077.8,962.0 L1075.2,962.0 L1074.0,959.4 L1075.2,956.8 L1077.8,956.8Z"/><path d="M1082.9,955.4 L1081.9,958.9 L1079.9,958.9 L1078.9,955.4 L1079.9,951.9 L1081.9,951.9Z"/><path d="M1088.0,978.5 L1086.8,980.2 L1084.2,980.2 L1083.0,978.5 L1084.2,976.8 L1086.8,976.8Z"/><path d="M1071.4,950.0 L1069.9,951.3 L1066.9,951.3 L1065.4,950.0 L1066.9,948.7 L1069.9,948.7Z"/><path d="M1085.2,942.3 L1084.6,944.9 L1083.4,944.9 L1082.8,942.3 L1083.4,939.7 L1084.6,939.7Z"/><circle cx="1071.4" cy="766.1" r="1.3" fill="#222" stroke="none"/><circle cx="1104.2" cy="783.8" r="1.3" fill="#222" stroke="none"/><circle cx="1039.2" cy="844" r="1.3" fill="#222" stroke="none"/><circle cx="1039.2" cy="862.7" r="1.3" fill="#222" stroke="none"/><circle cx="1090.5" cy="821.5" r="1.3" fill="#222" stroke="none"/><circle cx="637" cy="921" r="1.3" fill="#222" stroke="none"/><circle cx="630" cy="920" r="1.3" fill="#222" stroke="none"/><circle cx="623" cy="922" r="1.3" fill="#222" stroke="none"/><circle cx="468" cy="768" r="1.3" fill="#222" stroke="none"/><circle cx="472" cy="760" r="1.3" fill="#222" stroke="none"/><circle cx="652" cy="780" r="1.3" fill="#222" stroke="none"/><circle cx="653" cy="784" r="1.3" fill="#222" stroke="none"/></g>
<g transform="translate(-592,-210)" stroke="#1a1a1a" stroke-width="1.8" fill="none" stroke-linecap="round"><path d="M1499,724 L1497.5,732 M1502,723 L1504,733 L1507,732 M1510,724 L1511,734 M1514,716 L1517,733 M1518,714 L1522,720 L1521,727 M1524,713 L1529,716 L1526,722 L1530,729 L1526,733 M1520,730 L1524,734"/><path d="M862,660 L870,657 L876,662 M863,665 L872,668 M866,671 L873,674 M869,658 L868,668" stroke-width="1.5"/></g>
</svg></div>

<!-- Browser panel -->
<div class="t" style="left:216px;top:212.5px;font-size:22.5px;color:#141414">Browser</div>
<div class="tree a">
  <div class="a" style="left:0;top:38px;width:554px;height:36px;background:#efefef"></div>
  <div class="row" style="top:2px;left:177px">India Outline Map</div>
  <div class="row" style="top:38px;left:209px">polymap15m_area.shp</div>
  <div class="row" style="top:74px;left:177px">data.gpkg</div>
  <div class="row" style="top:110px;left:209px">admin_boundary_fixed</div>
  <div class="row" style="top:146px;left:209px">basins_clipped</div>
  <div class="row" style="top:182px;left:209px">basins_fixed</div>
  <div class="row" style="top:218px;left:209px">rivers_basin_map</div>
  <div class="row" style="top:254px;left:209px">rivers_clipped</div>
  <div class="row" style="top:290px;left:209px">rivers_fixed</div>
  <div class="row" style="top:326px;left:177px">hybas_as_lev06_v1c.zip</div>
  <div class="row" style="top:362px;left:177px">HydroRIVERS_v10_as_shp.zip</div>
  <div class="row" style="top:398px;left:177px">India Outline Map.zip</div>
  <!-- scrollbars -->
  <div class="a" style="left:554px;top:2px;width:16px;height:424px;background:#363636;border-radius:8px"></div>
  <div class="a" style="left:556px;top:124px;width:12px;height:100px;background:#767676;border-radius:6px"></div>
  <div class="a" style="left:0;top:424px;width:554px;height:16px;background:#363636;border-radius:0 8px 8px 0"></div>
  <div class="a" style="left:0;top:426px;width:384px;height:12px;background:#767676;border-radius:0 6px 6px 0"></div>
</div>

<!-- Layers panel -->
<div class="t" style="left:225px;top:772.5px;font-size:22.5px;color:#141414">Layers</div>
<div id="layers" class="a">
  <div class="lrow" style="top:1px">rivers_clipped</div>
  <div class="lrow" style="top:45px">basins_clipped</div>
  <div class="lrow" style="top:89px;font-style:italic;text-decoration:underline;text-decoration-thickness:2px;text-underline-offset:3px">admin_boundary_fixed</div>
</div>

<!-- Status bar -->
<div class="box" style="left:2px;top:1247px;width:425px;height:60px"></div>
<div class="t" style="left:63px;top:1256.6px;font-size:26.8px;color:#5c5c5c">Type to locate (⌘K)</div>
<div class="a" style="left:497px;top:1250px;width:81px;height:40px;overflow:hidden"><div class="t" style="left:0.5px;top:9.2px;font-size:23px;letter-spacing:0.2px;color:#121212">oordinates</div></div>
<div class="box" style="left:587px;top:1248px;width:176px;height:60px"></div>
<div class="t" style="left:601px;top:1259.4px;font-size:24px;color:#121212">5.95°,100.35°</div>
<div class="a" style="left:833px;top:1250px;width:26px;height:40px;overflow:hidden"><div class="t" style="left:0.5px;top:9.2px;font-size:23px;letter-spacing:0px;color:#121212">cale</div></div>
<div class="box" style="left:866px;top:1247px;width:171px;height:60px"></div>
<div class="t" style="left:872px;top:1259.8px;font-size:22.7px;color:#121212">1:29670576</div>
<div class="a" style="left:1008px;top:1250px;width:26px;height:42px;background:#383838;border-radius:3px"></div>
<div class="a" style="left:1110px;top:1250px;width:62px;height:40px;overflow:hidden"><div class="t" style="left:0.5px;top:9.2px;font-size:23px;letter-spacing:0.4px;color:#121212">agnifier</div></div>
<div class="dbox" style="left:1180px;top:1246px;width:186px;height:60px"></div>
<div class="t" style="left:1190px;top:1259.4px;font-size:22.5px;color:#a9a9a9">100%</div>
<div class="a" style="left:1385.5px;top:1250px;width:55px;height:40px;overflow:hidden"><div class="t" style="left:-1.5px;top:9.2px;font-size:23px;letter-spacing:0.7px;color:#121212">otation</div></div>
<div class="dbox" style="left:1460px;top:1246px;width:186px;height:60px"></div>
<div class="t" style="left:1470px;top:1257.7px;font-size:24px;color:#a9a9a9">0.0 °</div>
<div class="box" style="left:1660px;top:1258px;width:26px;height:25px;border-radius:5px;border-width:1.5px"></div>
<div class="t" style="left:1701px;top:1260.1px;font-size:22px;color:#121212">Render</div>
<div class="t" style="left:1837px;top:1259.7px;font-size:22.6px;color:#121212">EPSG:4326</div>

<svg class="a" style="left:0;top:0" width="2058" height="1292"><defs>
<radialGradient id="lensg" cx="0.4" cy="0.35" r="0.7"><stop offset="0" stop-color="#f6f6f6"/><stop offset="1" stop-color="#c8c8c8"/></radialGradient>
<linearGradient id="pageg" x1="0" x2="1"><stop offset="0" stop-color="#d8d8d8"/><stop offset="1" stop-color="#f0f0f0"/></linearGradient>
<linearGradient id="polyg" x1="0" y1="0" x2="1" y2="1"><stop offset="0" stop-color="#f8f8f8"/><stop offset="1" stop-color="#c8c8c8"/></linearGradient>
<linearGradient id="selg" x1="0" y1="0" x2="0" y2="1"><stop offset="0" stop-color="#bdbdbd"/><stop offset="1" stop-color="#8f8f8f"/></linearGradient>
</defs><rect x="0" y="79" width="2.5" height="18" fill="#b4b4b4"/><rect x="0" y="157" width="2.5" height="18" fill="#b4b4b4"/><rect x="424" y="79" width="2" height="18" rx="1" fill="#b4b4b4"/><rect x="1528" y="79" width="2" height="18" rx="1" fill="#b4b4b4"/><rect x="492" y="157" width="2" height="18" rx="1" fill="#b4b4b4"/><rect x="1348" y="157" width="2" height="18" rx="1" fill="#b4b4b4"/><path d="M22,68 H40 L50,78 V108 H22 Z" fill="#fff"/><path d="M40,68 V78 H50" fill="#e6e6e6" stroke="#7a7a7a" stroke-width="0"/><path d="M41.5,70 L48,76.5 H41.5Z" fill="#eaeaea"/><path d="M40,68 V78 H50" fill="none" stroke="#737373" stroke-width="1.6"/><path d="M82,70 H96 L97,74 H120 V82 H82 Z" fill="#fcd84f" stroke="#c4a22a" stroke-width="1.3"/><path d="M82,105 L87,80 H126 L120,105 Z" fill="#fcd84f" stroke="#c4a22a" stroke-width="1.5"/><path d="M82,70 V105" stroke="#c4a22a" stroke-width="1.5"/><rect x="152.5" y="67" width="39" height="40.5" rx="4" fill="#6c9bd2" stroke="#3e5e86" stroke-width="1.6"/><rect x="158.5" y="68.5" width="27" height="17" rx="1.5" fill="#eeeeee" stroke="#555" stroke-width="1"/><path d="M162,73.5 H182 M162,77 H182 M162,80.5 H182" stroke="#555" stroke-width="1.6"/><rect x="160.5" y="93" width="24" height="13.5" rx="1" fill="#ebebeb" stroke="#555" stroke-width="1"/><rect x="164" y="96" width="5" height="8" fill="#3e5e86"/><rect x="220" y="70" width="39" height="36" fill="#fff"/><path d="M251,70 L259,78 H251Z" fill="#e8e8e8"/><rect x="231" y="74" width="22" height="27" fill="none" stroke="#c4d4f4" stroke-width="1.5"/><path d="M222,70 H241 V78 H230 V110 H222 Z" fill="#fde27a" stroke="#d1a800" stroke-width="1.5"/><path d="M222,80 H226 M222,85 H227 M222,90 H226 M222,95 H227 M222,100 H226" stroke="#d1a800" stroke-width="1.4"/><rect x="242" y="90" width="22" height="22" rx="4" fill="#c9a200"/><rect x="243.5" y="91.5" width="19" height="10.0" rx="3" fill="#dcbc3a" opacity="0.6"/><line x1="253.0" y1="101.0" x2="253.0" y2="92.2" stroke="#fff" stroke-width="2.4" transform="rotate(0 253.0 101.0)"/><line x1="253.0" y1="101.0" x2="253.0" y2="92.2" stroke="#fff" stroke-width="2.4" transform="rotate(60 253.0 101.0)"/><line x1="253.0" y1="101.0" x2="253.0" y2="92.2" stroke="#fff" stroke-width="2.4" transform="rotate(120 253.0 101.0)"/><line x1="253.0" y1="101.0" x2="253.0" y2="92.2" stroke="#fff" stroke-width="2.4" transform="rotate(180 253.0 101.0)"/><line x1="253.0" y1="101.0" x2="253.0" y2="92.2" stroke="#fff" stroke-width="2.4" transform="rotate(240 253.0 101.0)"/><line x1="253.0" y1="101.0" x2="253.0" y2="92.2" stroke="#fff" stroke-width="2.4" transform="rotate(300 253.0 101.0)"/><circle cx="253.0" cy="101.0" r="4.84" fill="#fff"/><circle cx="253.0" cy="101.0" r="1.98" fill="#c9a200"/><rect x="288" y="70" width="40" height="36" fill="#fff"/><path d="M319,70 L328,79 H319Z" fill="#e8e8e8"/><rect x="291" y="73" width="33" height="30" fill="none" stroke="#c4d4f4" stroke-width="1.5"/><path d="M310,91 L329,108" stroke="#222" stroke-width="8" stroke-linecap="round"/><path d="M310,91 L329,108" stroke="#e8d27a" stroke-width="5" stroke-linecap="round"/><path d="M318,99 L322,95" stroke="#222" stroke-width="1.5"/><circle cx="327" cy="106" r="1.6" fill="#444"/><path d="M297,79 C295,86 300,93 308,93 C313,93 317,89 317,83 C317,79 315,76 312,74 L310,80 L305,84 L300,81 L299,76 Z" fill="#ececec" stroke="#222" stroke-width="1.6" stroke-linejoin="round"/><circle cx="365" cy="77" r="8.5" fill="#dd6a30" stroke="#8c3f1a" stroke-width="1.3"/><line x1="379" y1="83" x2="394" y2="69" stroke="#3e5e86" stroke-width="4" stroke-linecap="round"/><line x1="379" y1="83" x2="394" y2="69" stroke="#6c9bd2" stroke-width="2.2" stroke-linecap="round"/><rect x="357" y="91" width="16.5" height="16" fill="#8fb38f" stroke="#4e8a4e" stroke-width="1.5"/><text x="379" y="106" font-family="Liberation Sans" font-size="22" fill="#eee" stroke="#333" stroke-width="0.8">a</text><rect x="429" y="57" width="64" height="64" rx="6" fill="none" stroke="#fafafa" stroke-width="2.2"/><path d="M446,83 C441,78 439,84 443,89 L452,107 C453,110 455,111 458,111 H472 C474,111 475,110 476,106 L479,92 V78 C479,75 474,75 474,78 V86 V74 C474,71 469,71 469,74 V84 V69 C469,66 464,66 464,69 V84 V71 C464,68 458,68 458,71 V92 Z" fill="#fff" stroke="#000" stroke-width="2.2" stroke-linejoin="round"/><rect x="509" y="70" width="26" height="26" fill="#7d7a70" opacity="0.8"/><g fill="#6c6f74" stroke="#666" stroke-width="1"><path d="M528,65 L536,74 H531 V82 H525 V74 H520Z"/><path d="M528,110 L536,101 H531 V93 H525 V101 H520Z"/><path d="M505,87 L514,79 V84 H522 V90 H514 V95Z"/><path d="M550,87 L541,79 V84 H533 V90 H541 V95Z"/></g><line x1="589.48" y1="94.02" x2="576.2" y2="107.3" stroke="#474747" stroke-width="8" stroke-linecap="square"/><line x1="586.6" y1="96.9" x2="577.0" y2="106.5" stroke="#e9c12a" stroke-width="4"/><circle cx="587.4" cy="96.1" r="2.2" fill="#111"/><circle cx="601" cy="82.5" r="16" fill="url(#lensg)" stroke="#4a4a4a" stroke-width="2"/><path d="M591.4,81.7 A9.92,9.92 0 0 1 602.6,72.9" fill="none" stroke="#fff" stroke-width="2" opacity="0.9"/><path d="M593,82.5 H609 M601,74.5 V90.5" stroke="#3e5e86" stroke-width="6" stroke-linecap="round"/><path d="M593,82.5 H609 M601,74.5 V90.5" stroke="#6c9bd2" stroke-width="3.6" stroke-linecap="round"/><line x1="657.48" y1="94.02" x2="644.2" y2="107.3" stroke="#474747" stroke-width="8" stroke-linecap="square"/><line x1="654.6" y1="96.9" x2="645.0" y2="106.5" stroke="#e9c12a" stroke-width="4"/><circle cx="655.4" cy="96.1" r="2.2" fill="#111"/><circle cx="669" cy="82.5" r="16" fill="url(#lensg)" stroke="#4a4a4a" stroke-width="2"/><path d="M659.4,81.7 A9.92,9.92 0 0 1 670.6,72.9" fill="none" stroke="#fff" stroke-width="2" opacity="0.9"/><path d="M660,82.5 H678" stroke="#3e5e86" stroke-width="6" stroke-linecap="round"/><path d="M660,82.5 H678" stroke="#6c9bd2" stroke-width="3.6" stroke-linecap="round"/><line x1="725.84" y1="94.16" x2="712.975" y2="107.025" stroke="#474747" stroke-width="8" stroke-linecap="square"/><line x1="723.05" y1="96.95" x2="713.75" y2="106.25" stroke="#e9c12a" stroke-width="4"/><circle cx="723.825" cy="96.175" r="2.2" fill="#111"/><circle cx="737" cy="83" r="15.5" fill="url(#lensg)" stroke="#4a4a4a" stroke-width="2"/><path d="M727.7,82.225 A9.61,9.61 0 0 1 738.55,73.7" fill="none" stroke="#fff" stroke-width="2" opacity="0.9"/><g fill="#6c9bd2" stroke="#3e5e86" stroke-width="1.3"><path d="M716,65 H732 L727,70 L733,76 L729,80 L723,74 L718,79 Z"/><path d="M756,65 V81 L751,76 L745,82 L741,78 L747,72 L742,67 Z"/><path d="M756,105 H740 L745,100 L739,94 L743,90 L749,96 L754,91 Z"/></g><rect x="780" y="69" width="16" height="26" fill="#7a786e"/><line x1="794.48" y1="93.02" x2="781.2" y2="106.3" stroke="#474747" stroke-width="8" stroke-linecap="square"/><line x1="791.6" y1="95.9" x2="782.0" y2="105.5" stroke="#8a8478" stroke-width="4"/><circle cx="806" cy="81.5" r="16" fill="#8c8c8c" stroke="#6a6a6a" stroke-width="2"/><path d="M796.4,80.7 A9.92,9.92 0 0 1 807.6,71.9" fill="none" stroke="#fff" stroke-width="2" opacity="0.3"/><line x1="806" y1="66" x2="806" y2="97" stroke="#959595" stroke-width="1"/><rect x="848" y="68.5" width="18" height="27" fill="#f0f0f0" stroke="#888" stroke-width="1"/><line x1="861.76" y1="93.24" x2="847.65" y2="107.35" stroke="#474747" stroke-width="8" stroke-linecap="square"/><line x1="858.7" y1="96.3" x2="848.5" y2="106.5" stroke="#e9c12a" stroke-width="4"/><circle cx="859.55" cy="95.45" r="2.2" fill="#111"/><circle cx="874" cy="81" r="17" fill="url(#lensg)" stroke="#4a4a4a" stroke-width="2"/><path d="M863.8,80.15 A10.54,10.54 0 0 1 875.7,70.8" fill="none" stroke="#fff" stroke-width="2" opacity="0.9"/><path d="M874,64.5 A16.5,16.5 0 0 1 874,97.5 Z" fill="#dcdcdc" opacity="0.6"/><rect x="917" y="69" width="14" height="26" fill="#858585"/><line x1="929.48" y1="94.02" x2="916.2" y2="107.3" stroke="#474747" stroke-width="8" stroke-linecap="square"/><line x1="926.6" y1="96.9" x2="917.0" y2="106.5" stroke="#8a8478" stroke-width="4"/><circle cx="941" cy="82.5" r="16" fill="#8c8c8c" stroke="#6a6a6a" stroke-width="2"/><path d="M931.4,81.7 A9.92,9.92 0 0 1 942.6,72.9" fill="none" stroke="#fff" stroke-width="2" opacity="0.3"/><text x="928" y="92" font-family="Liberation Sans" font-weight="bold" font-size="19" fill="#5e5e5e">1:1</text><line x1="997.48" y1="94.02" x2="984.2" y2="107.3" stroke="#474747" stroke-width="8" stroke-linecap="square"/><line x1="994.6" y1="96.9" x2="985.0" y2="106.5" stroke="#e9c12a" stroke-width="4"/><circle cx="995.4" cy="96.1" r="2.2" fill="#111"/><circle cx="1009" cy="82.5" r="16" fill="url(#lensg)" stroke="#4a4a4a" stroke-width="2"/><path d="M999.4,81.7 A9.92,9.92 0 0 1 1010.6,72.9" fill="none" stroke="#fff" stroke-width="2" opacity="0.9"/><rect x="1006" y="89.5" width="22" height="22" rx="2" fill="#6c9bd2" stroke="#333" stroke-width="1.4"/><path d="M1022,94 L1013,100.5 L1022,107" fill="none" stroke="#fff" stroke-width="3.2" stroke-linecap="round" stroke-linejoin="round"/><line x1="1065.48" y1="94.02" x2="1052.2" y2="107.3" stroke="#474747" stroke-width="8" stroke-linecap="square"/><line x1="1062.6" y1="96.9" x2="1053.0" y2="106.5" stroke="#8a8478" stroke-width="4"/><circle cx="1077" cy="82.5" r="16" fill="#8c8c8c" stroke="#6a6a6a" stroke-width="2"/><path d="M1067.4,81.7 A9.92,9.92 0 0 1 1078.6,72.9" fill="none" stroke="#fff" stroke-width="2" opacity="0.3"/><rect x="1074" y="89.5" width="22" height="22" rx="2" fill="#7c7c7c" stroke="#666" stroke-width="1.4"/><path d="M1080,94 L1089,100.5 L1080,107" fill="none" stroke="#9a9a9a" stroke-width="3.2" stroke-linecap="round" stroke-linejoin="round"/><path d="M1125,68 H1160 V107 H1125 Z" fill="url(#pageg)" stroke="#9a9a9a" stroke-width="1.4"/><rect x="1120" y="66" width="9" height="42" rx="4.5" fill="#e8e8e8" stroke="#9a9a9a" stroke-width="1.4"/><rect x="1142" y="90" width="22" height="22" rx="4" fill="#c9a200"/><rect x="1143.5" y="91.5" width="19" height="10.0" rx="3" fill="#dcbc3a" opacity="0.6"/><line x1="1153.0" y1="101.0" x2="1153.0" y2="92.2" stroke="#fff" stroke-width="2.4" transform="rotate(0 1153.0 101.0)"/><line x1="1153.0" y1="101.0" x2="1153.0" y2="92.2" stroke="#fff" stroke-width="2.4" transform="rotate(60 1153.0 101.0)"/><line x1="1153.0" y1="101.0" x2="1153.0" y2="92.2" stroke="#fff" stroke-width="2.4" transform="rotate(120 1153.0 101.0)"/><line x1="1153.0" y1="101.0" x2="1153.0" y2="92.2" stroke="#fff" stroke-width="2.4" transform="rotate(180 1153.0 101.0)"/><line x1="1153.0" y1="101.0" x2="1153.0" y2="92.2" stroke="#fff" stroke-width="2.4" transform="rotate(240 1153.0 101.0)"/><line x1="1153.0" y1="101.0" x2="1153.0" y2="92.2" stroke="#fff" stroke-width="2.4" transform="rotate(300 1153.0 101.0)"/><circle cx="1153.0" cy="101.0" r="4.84" fill="#fff"/><circle cx="1153.0" cy="101.0" r="1.98" fill="#c9a200"/><path d="M1185,96 L1195,74 L1227,72 L1228,100 L1195,103 Z" fill="#d8d8d8" stroke="#a8a8a8" stroke-width="1.4"/><path d="M1192,82 L1226,80 M1189,90 L1227,89 M1203,74 L1200,103 M1213,73 L1211,101" stroke="#9a9a9a" stroke-width="1"/><rect x="1210" y="90" width="22" height="22" rx="4" fill="#c9a200"/><rect x="1211.5" y="91.5" width="19" height="10.0" rx="3" fill="#dcbc3a" opacity="0.6"/><line x1="1221.0" y1="101.0" x2="1221.0" y2="92.2" stroke="#fff" stroke-width="2.4" transform="rotate(0 1221.0 101.0)"/><line x1="1221.0" y1="101.0" x2="1221.0" y2="92.2" stroke="#fff" stroke-width="2.4" transform="rotate(60 1221.0 101.0)"/><line x1="1221.0" y1="101.0" x2="1221.0" y2="92.2" stroke="#fff" stroke-width="2.4" transform="rotate(120 1221.0 101.0)"/><line x1="1221.0" y1="101.0" x2="1221.0" y2="92.2" stroke="#fff" stroke-width="2.4" transform="rotate(180 1221.0 101.0)"/><line x1="1221.0" y1="101.0" x2="1221.0" y2="92.2" stroke="#fff" stroke-width="2.4" transform="rotate(240 1221.0 101.0)"/><line x1="1221.0" y1="101.0" x2="1221.0" y2="92.2" stroke="#fff" stroke-width="2.4" transform="rotate(300 1221.0 101.0)"/><circle cx="1221.0" cy="101.0" r="4.84" fill="#fff"/><circle cx="1221.0" cy="101.0" r="1.98" fill="#c9a200"/><path d="M1266.5,66.5 H1286 V106 L1276,96 L1266.5,106 Z" fill="#6c9bd2" stroke="#3e5e86" stroke-width="1.6"/><rect x="1278" y="90" width="22" height="22" rx="4" fill="#c9a200"/><rect x="1279.5" y="91.5" width="19" height="10.0" rx="3" fill="#dcbc3a" opacity="0.6"/><line x1="1289.0" y1="101.0" x2="1289.0" y2="92.2" stroke="#fff" stroke-width="2.4" transform="rotate(0 1289.0 101.0)"/><line x1="1289.0" y1="101.0" x2="1289.0" y2="92.2" stroke="#fff" stroke-width="2.4" transform="rotate(60 1289.0 101.0)"/><line x1="1289.0" y1="101.0" x2="1289.0" y2="92.2" stroke="#fff" stroke-width="2.4" transform="rotate(120 1289.0 101.0)"/><line x1="1289.0" y1="101.0" x2="1289.0" y2="92.2" stroke="#fff" stroke-width="2.4" transform="rotate(180 1289.0 101.0)"/><line x1="1289.0" y1="101.0" x2="1289.0" y2="92.2" stroke="#fff" stroke-width="2.4" transform="rotate(240 1289.0 101.0)"/><line x1="1289.0" y1="101.0" x2="1289.0" y2="92.2" stroke="#fff" stroke-width="2.4" transform="rotate(300 1289.0 101.0)"/><circle cx="1289.0" cy="101.0" r="4.84" fill="#fff"/><circle cx="1289.0" cy="101.0" r="1.98" fill="#c9a200"/><path d="M1329,68 H1363 V107 H1329 Z" fill="url(#pageg)" stroke="#9a9a9a" stroke-width="1.4"/><rect x="1324" y="66" width="9" height="42" rx="4.5" fill="#e8e8e8" stroke="#9a9a9a" stroke-width="1.4"/><path d="M1346,66 H1355 V85 L1350.5,89 L1346,85 Z" fill="#6c9bd2" stroke="#3e5e86" stroke-width="1.2"/><circle cx="1412" cy="87.5" r="20" fill="#f0f0f0" stroke="#333" stroke-width="2"/><circle cx="1412.0" cy="71.0" r="1.9" fill="#3e5e86"/><circle cx="1420.2" cy="73.2" r="1.6" fill="#6c9bd2"/><circle cx="1426.3" cy="79.2" r="1.6" fill="#6c9bd2"/><circle cx="1428.5" cy="87.5" r="1.9" fill="#3e5e86"/><circle cx="1426.3" cy="95.8" r="1.6" fill="#6c9bd2"/><circle cx="1420.2" cy="101.8" r="1.6" fill="#6c9bd2"/><circle cx="1412.0" cy="104.0" r="1.9" fill="#3e5e86"/><circle cx="1403.8" cy="101.8" r="1.6" fill="#6c9bd2"/><circle cx="1397.7" cy="95.8" r="1.6" fill="#6c9bd2"/><circle cx="1395.5" cy="87.5" r="1.9" fill="#3e5e86"/><circle cx="1397.7" cy="79.2" r="1.6" fill="#6c9bd2"/><circle cx="1403.8" cy="73.2" r="1.6" fill="#6c9bd2"/><path d="M1412,73 V88 L1421,96" fill="none" stroke="#888" stroke-width="2.2"/><path d="M1461,92 C1459,72 1482,62 1497,78 L1500,67 V88 H1481 L1489,82 C1480,72 1466,76 1461,92 Z" fill="#5b93d3" stroke="#3a6eb0" stroke-width="1"/><path d="M1500,84 C1502,104 1478,114 1463,98 L1460,109 V88 H1479 L1471,94 C1480,104 1494,100 1500,84 Z" fill="#5b93d3" stroke="#3a6eb0" stroke-width="1"/><circle cx="1557" cy="82" r="16" fill="#6c9bd2" stroke="#5583b8" stroke-width="1"/><path d="M1545,80 A12,12 0 0 1 1556,68" fill="none" stroke="#fff" stroke-width="1.5" opacity="0.5"/><circle cx="1559.5" cy="73" r="2.6" fill="#fff"/><path d="M1555,79 H1561 L1557,92 H1561" fill="none" stroke="#fff" stroke-width="3.2" stroke-linejoin="round"/><path d="M1563,84 L1564,106 L1569,101 L1574,110 L1578,108 L1573,99 L1586,97 Z" fill="#fff" stroke="#000" stroke-width="1.6" stroke-linejoin="round"/><path d="M1612.5,68 V106 M1651,68 V106" stroke="#555" stroke-width="1.6"/><rect x="1611" y="105" width="43" height="4" fill="#ccc" stroke="#555" stroke-width="1.2"/><path d="M1612,73 H1651 M1612,85 H1651 M1612,97 H1651" stroke="#555" stroke-width="1.2"/><circle cx="1627" cy="73" r="4.4" fill="#f4a0a0" stroke="#c00" stroke-width="1.4"/><circle cx="1643" cy="73" r="4.4" fill="#f4a0a0" stroke="#c00" stroke-width="1.4"/><circle cx="1623" cy="85" r="4.4" fill="#b8f0b0" stroke="#4a9a4a" stroke-width="1.4"/><circle cx="1633" cy="85" r="4.4" fill="#b8f0b0" stroke="#4a9a4a" stroke-width="1.4"/><circle cx="1623" cy="97" r="4.4" fill="#bfe0f6" stroke="#3e5e86" stroke-width="1.4"/><circle cx="1633" cy="97" r="4.4" fill="#bfe0f6" stroke="#3e5e86" stroke-width="1.4"/><circle cx="1643" cy="97" r="4.4" fill="#bfe0f6" stroke="#3e5e86" stroke-width="1.4"/><g transform="translate(1700,88)"><ellipse cx="0" cy="-14.5" rx="4.2" ry="6.5" fill="#8fb0dc" stroke="#4a88d0" stroke-width="1.6" transform="rotate(0)"/><ellipse cx="0" cy="-14.5" rx="4.2" ry="6.5" fill="#8fb0dc" stroke="#4a88d0" stroke-width="1.6" transform="rotate(45)"/><ellipse cx="0" cy="-14.5" rx="4.2" ry="6.5" fill="#8fb0dc" stroke="#4a88d0" stroke-width="1.6" transform="rotate(90)"/><ellipse cx="0" cy="-14.5" rx="4.2" ry="6.5" fill="#8fb0dc" stroke="#4a88d0" stroke-width="1.6" transform="rotate(135)"/><ellipse cx="0" cy="-14.5" rx="4.2" ry="6.5" fill="#8fb0dc" stroke="#4a88d0" stroke-width="1.6" transform="rotate(180)"/><ellipse cx="0" cy="-14.5" rx="4.2" ry="6.5" fill="#8fb0dc" stroke="#4a88d0" stroke-width="1.6" transform="rotate(225)"/><ellipse cx="0" cy="-14.5" rx="4.2" ry="6.5" fill="#8fb0dc" stroke="#4a88d0" stroke-width="1.6" transform="rotate(270)"/><ellipse cx="0" cy="-14.5" rx="4.2" ry="6.5" fill="#8fb0dc" stroke="#4a88d0" stroke-width="1.6" transform="rotate(315)"/><circle r="13" fill="#8fb0dc"/><circle r="6" fill="#737373" stroke="#4a88d0" stroke-width="2"/></g><path d="M1753,69 H1781 L1783,79 H1779 C1777,74 1774,74 1770,74 H1763 L1774,88 L1762,102 H1772 C1777,102 1779,100 1781,95 H1784 L1781,107 H1753 V105 L1767,88 L1753,71 Z" fill="#a20ab8" stroke="#4a0a55" stroke-width="1.2"/><rect x="1816.5" y="68.5" width="39" height="39" fill="#e8e8e8" stroke="#6a9fd4" stroke-width="1.8"/><rect x="1817.5" y="69.5" width="37" height="9" fill="#b8d8f0"/><path d="M1816.5,78.5 H1855.5" stroke="#6a9fd4" stroke-width="1.8"/><path d="M1822,73.5 H1830 M1834,73.5 H1850" stroke="#6a9fd4" stroke-width="3.5"/><path d="M1822,83 H1830 M1834,83 H1850 M1822,89 H1830 M1834,89 H1850 M1822,95 H1830 M1834,95 H1850 M1822,101 H1830 M1834,101 H1850" stroke="#6a9fd4" stroke-width="1.8"/><path d="M1877,85.5 H1885 L1881,93 Z" fill="#b4b4b4"/><path d="M1969,85.5 H1977 L1973,93 Z" fill="#b4b4b4"/><path d="M1908.5,74 V82 M1947.5,74 V82 M1908.5,78 H1947.5" stroke="#3f5f80" stroke-width="2.4"/><path d="M1908.5,78 H1947.5" stroke="#3f5f80" stroke-width="3.5"/><rect x="1907" y="88.5" width="42" height="15" fill="#cfcfcf" stroke="#555" stroke-width="1.8"/><path d="M1912,89 V94 M1917,89 V94 M1922,89 V97 M1927,89 V94 M1932,89 V94 M1937,89 V94 M1942,89 V94" stroke="#555" stroke-width="1.3"/><path d="M2046,85 L2050,88 L2046,91 M2051,85 L2055,88 L2051,91" fill="none" stroke="#333" stroke-width="1.4"/><path d="M1320,163 L1324,166 L1320,169 M1325,163 L1329,166 L1325,169" fill="none" stroke="#333" stroke-width="1.4"/><path d="M13,150 L36,142 L45,178 L22,186 Z" fill="#e06a30" stroke="#9a4a20" stroke-width="1.2"/><path d="M21,148 L44,146 L46,178 L23,180 Z" fill="#f0c020" stroke="#a88a10" stroke-width="1.2"/><path d="M32,143 L59,148 L55,173 L28,168 Z" fill="#6c9bd2" stroke="#3e5e86" stroke-width="1.4"/><rect x="42" y="172" width="18" height="18" rx="3" fill="#5a9a5a"/><path d="M51,175.5 V186.5 M45.5,181 H56.5" stroke="#fff" stroke-width="3.4"/><circle cx="105" cy="159" r="17" fill="#a8c8ec" stroke="#6a9fd4" stroke-width="1"/><g fill="#3e5e86"><path d="M102,149 C106,147 110,148 111,151 C112,155 108,157 109,161 C110,166 107,171 104,170 C102,166 103,161 100,158 C99,155 100,151 102,149 Z"/><path d="M112,146 C117,146 122,150 122,156 C120,159 116,157 114,160 C111,157 111,151 112,146 Z"/><path d="M91,151 C94,149 97,151 96,155 C95,158 93,157 92,160 C93,164 95,167 93,170 C90,166 89,160 89,156 Z"/><path d="M116,163 C119,162 121,165 119,168 C117,168 115,166 116,163 Z"/></g><path d="M81,157 L105,170 L128,157 V177 L105,191 L81,177 Z" fill="#d9ac00" stroke="#111" stroke-width="1.6"/><path d="M105,170 L128,157 V177 L105,191 Z" fill="#fdf472" stroke="#111" stroke-width="1.6"/><path d="M81,157 L92,152 M128,157 L118,152" stroke="#111" stroke-width="1.6"/><rect x="110" y="172" width="18" height="18" rx="4" fill="#c9a200"/><rect x="111.5" y="173.5" width="15" height="8.0" rx="3" fill="#dcbc3a" opacity="0.6"/><line x1="119.0" y1="181.0" x2="119.0" y2="174.52" stroke="#fff" stroke-width="3.2" stroke-linecap="round" transform="rotate(0 119.0 181.0)"/><line x1="119.0" y1="181.0" x2="119.0" y2="174.52" stroke="#fff" stroke-width="3.2" stroke-linecap="round" transform="rotate(45 119.0 181.0)"/><line x1="119.0" y1="181.0" x2="119.0" y2="174.52" stroke="#fff" stroke-width="3.2" stroke-linecap="round" transform="rotate(90 119.0 181.0)"/><line x1="119.0" y1="181.0" x2="119.0" y2="174.52" stroke="#fff" stroke-width="3.2" stroke-linecap="round" transform="rotate(135 119.0 181.0)"/><line x1="119.0" y1="181.0" x2="119.0" y2="174.52" stroke="#fff" stroke-width="3.2" stroke-linecap="round" transform="rotate(180 119.0 181.0)"/><line x1="119.0" y1="181.0" x2="119.0" y2="174.52" stroke="#fff" stroke-width="3.2" stroke-linecap="round" transform="rotate(225 119.0 181.0)"/><line x1="119.0" y1="181.0" x2="119.0" y2="174.52" stroke="#fff" stroke-width="3.2" stroke-linecap="round" transform="rotate(270 119.0 181.0)"/><line x1="119.0" y1="181.0" x2="119.0" y2="174.52" stroke="#fff" stroke-width="3.2" stroke-linecap="round" transform="rotate(315 119.0 181.0)"/><path d="M153,147 L166,176 L179,147 H191" fill="none" stroke="#2f4660" stroke-width="3"/><g fill="#eee" stroke="#2f4660" stroke-width="2.2"><circle cx="153" cy="147" r="4"/><circle cx="166" cy="176" r="4"/><circle cx="179" cy="147" r="4"/><circle cx="191" cy="147" r="4"/></g><rect x="178" y="172" width="18" height="18" rx="4" fill="#c9a200"/><rect x="179.5" y="173.5" width="15" height="8.0" rx="3" fill="#dcbc3a" opacity="0.6"/><line x1="187.0" y1="181.0" x2="187.0" y2="174.52" stroke="#fff" stroke-width="3.2" stroke-linecap="round" transform="rotate(0 187.0 181.0)"/><line x1="187.0" y1="181.0" x2="187.0" y2="174.52" stroke="#fff" stroke-width="3.2" stroke-linecap="round" transform="rotate(45 187.0 181.0)"/><line x1="187.0" y1="181.0" x2="187.0" y2="174.52" stroke="#fff" stroke-width="3.2" stroke-linecap="round" transform="rotate(90 187.0 181.0)"/><line x1="187.0" y1="181.0" x2="187.0" y2="174.52" stroke="#fff" stroke-width="3.2" stroke-linecap="round" transform="rotate(135 187.0 181.0)"/><line x1="187.0" y1="181.0" x2="187.0" y2="174.52" stroke="#fff" stroke-width="3.2" stroke-linecap="round" transform="rotate(180 187.0 181.0)"/><line x1="187.0" y1="181.0" x2="187.0" y2="174.52" stroke="#fff" stroke-width="3.2" stroke-linecap="round" transform="rotate(225 187.0 181.0)"/><line x1="187.0" y1="181.0" x2="187.0" y2="174.52" stroke="#fff" stroke-width="3.2" stroke-linecap="round" transform="rotate(270 187.0 181.0)"/><line x1="187.0" y1="181.0" x2="187.0" y2="174.52" stroke="#fff" stroke-width="3.2" stroke-linecap="round" transform="rotate(315 187.0 181.0)"/><path d="M218,189 C222,170 235,152 261,142 C258,160 246,176 226,183 Z" fill="#a8c8ec" stroke="#2f4660" stroke-width="1.6"/><path d="M220,186 C232,168 246,154 260,143" fill="none" stroke="#2f4660" stroke-width="1.2"/><path d="M230,176 L238,178 M235,168 L244,170 M242,160 L250,161 M249,152 L256,153" stroke="#fff" stroke-width="1.2"/><rect x="246" y="172" width="18" height="18" rx="4" fill="#c9a200"/><rect x="247.5" y="173.5" width="15" height="8.0" rx="3" fill="#dcbc3a" opacity="0.6"/><line x1="255.0" y1="181.0" x2="255.0" y2="174.52" stroke="#fff" stroke-width="3.2" stroke-linecap="round" transform="rotate(0 255.0 181.0)"/><line x1="255.0" y1="181.0" x2="255.0" y2="174.52" stroke="#fff" stroke-width="3.2" stroke-linecap="round" transform="rotate(45 255.0 181.0)"/><line x1="255.0" y1="181.0" x2="255.0" y2="174.52" stroke="#fff" stroke-width="3.2" stroke-linecap="round" transform="rotate(90 255.0 181.0)"/><line x1="255.0" y1="181.0" x2="255.0" y2="174.52" stroke="#fff" stroke-width="3.2" stroke-linecap="round" transform="rotate(135 255.0 181.0)"/><line x1="255.0" y1="181.0" x2="255.0" y2="174.52" stroke="#fff" stroke-width="3.2" stroke-linecap="round" transform="rotate(180 255.0 181.0)"/><line x1="255.0" y1="181.0" x2="255.0" y2="174.52" stroke="#fff" stroke-width="3.2" stroke-linecap="round" transform="rotate(225 255.0 181.0)"/><line x1="255.0" y1="181.0" x2="255.0" y2="174.52" stroke="#fff" stroke-width="3.2" stroke-linecap="round" transform="rotate(270 255.0 181.0)"/><line x1="255.0" y1="181.0" x2="255.0" y2="174.52" stroke="#fff" stroke-width="3.2" stroke-linecap="round" transform="rotate(315 255.0 181.0)"/><path d="M297,147 V154 M303,147 V154 M309,147 V154 M315,147 V154 M321,147 V154 M297,175 V182 M303,175 V182 M309,175 V182" stroke="#2f4660" stroke-width="1.6"/><rect x="290.5" y="154.5" width="37" height="20.5" rx="2.5" fill="#6c9bd2" stroke="#2f4660" stroke-width="1.8"/><rect x="293" y="157" width="32" height="3" fill="#a8c8ec" opacity="0.7"/><rect x="314" y="172" width="18" height="18" rx="4" fill="#c9a200"/><rect x="315.5" y="173.5" width="15" height="8.0" rx="3" fill="#dcbc3a" opacity="0.6"/><line x1="323.0" y1="181.0" x2="323.0" y2="174.52" stroke="#fff" stroke-width="3.2" stroke-linecap="round" transform="rotate(0 323.0 181.0)"/><line x1="323.0" y1="181.0" x2="323.0" y2="174.52" stroke="#fff" stroke-width="3.2" stroke-linecap="round" transform="rotate(45 323.0 181.0)"/><line x1="323.0" y1="181.0" x2="323.0" y2="174.52" stroke="#fff" stroke-width="3.2" stroke-linecap="round" transform="rotate(90 323.0 181.0)"/><line x1="323.0" y1="181.0" x2="323.0" y2="174.52" stroke="#fff" stroke-width="3.2" stroke-linecap="round" transform="rotate(135 323.0 181.0)"/><line x1="323.0" y1="181.0" x2="323.0" y2="174.52" stroke="#fff" stroke-width="3.2" stroke-linecap="round" transform="rotate(180 323.0 181.0)"/><line x1="323.0" y1="181.0" x2="323.0" y2="174.52" stroke="#fff" stroke-width="3.2" stroke-linecap="round" transform="rotate(225 323.0 181.0)"/><line x1="323.0" y1="181.0" x2="323.0" y2="174.52" stroke="#fff" stroke-width="3.2" stroke-linecap="round" transform="rotate(270 323.0 181.0)"/><line x1="323.0" y1="181.0" x2="323.0" y2="174.52" stroke="#fff" stroke-width="3.2" stroke-linecap="round" transform="rotate(315 323.0 181.0)"/><rect x="354.5" y="144.5" width="43" height="43" fill="#8fb0dc" stroke="#2f4660" stroke-width="2"/><path d="M354.5,168 H397.5 M376,144.5 V187.5 M354.5,177.5 H376 M365,168 V187.5 M354.5,144.5 L376,168 M376,144.5 L354.5,168 M397.5,144.5 L376,168" stroke="#2f4660" stroke-width="1.8"/><rect x="376" y="168" width="21" height="19" fill="#737373"/><rect x="382" y="172" width="18" height="18" rx="4" fill="#c9a200"/><rect x="383.5" y="173.5" width="15" height="8.0" rx="3" fill="#dcbc3a" opacity="0.6"/><line x1="391.0" y1="181.0" x2="391.0" y2="174.52" stroke="#fff" stroke-width="3.2" stroke-linecap="round" transform="rotate(0 391.0 181.0)"/><line x1="391.0" y1="181.0" x2="391.0" y2="174.52" stroke="#fff" stroke-width="3.2" stroke-linecap="round" transform="rotate(45 391.0 181.0)"/><line x1="391.0" y1="181.0" x2="391.0" y2="174.52" stroke="#fff" stroke-width="3.2" stroke-linecap="round" transform="rotate(90 391.0 181.0)"/><line x1="391.0" y1="181.0" x2="391.0" y2="174.52" stroke="#fff" stroke-width="3.2" stroke-linecap="round" transform="rotate(135 391.0 181.0)"/><line x1="391.0" y1="181.0" x2="391.0" y2="174.52" stroke="#fff" stroke-width="3.2" stroke-linecap="round" transform="rotate(180 391.0 181.0)"/><line x1="391.0" y1="181.0" x2="391.0" y2="174.52" stroke="#fff" stroke-width="3.2" stroke-linecap="round" transform="rotate(225 391.0 181.0)"/><line x1="391.0" y1="181.0" x2="391.0" y2="174.52" stroke="#fff" stroke-width="3.2" stroke-linecap="round" transform="rotate(270 391.0 181.0)"/><line x1="391.0" y1="181.0" x2="391.0" y2="174.52" stroke="#fff" stroke-width="3.2" stroke-linecap="round" transform="rotate(315 391.0 181.0)"/><rect x="422.5" y="144.5" width="43" height="43" rx="4" fill="#c8d8ea" stroke="#2f4660" stroke-width="1.8"/><path d="M426,147 L436.5,178 L449,147 H463" fill="none" stroke="#2f4660" stroke-width="2.6"/><g fill="#eee" stroke="#2f4660" stroke-width="1.6"><circle cx="425.5" cy="147" r="3"/><circle cx="436.5" cy="178" r="3.4"/><circle cx="449" cy="147" r="3"/></g><rect x="450" y="172" width="18" height="18" rx="4" fill="#c9a200"/><rect x="451.5" y="173.5" width="15" height="8.0" rx="3" fill="#dcbc3a" opacity="0.6"/><line x1="459.0" y1="181.0" x2="459.0" y2="174.52" stroke="#fff" stroke-width="3.2" stroke-linecap="round" transform="rotate(0 459.0 181.0)"/><line x1="459.0" y1="181.0" x2="459.0" y2="174.52" stroke="#fff" stroke-width="3.2" stroke-linecap="round" transform="rotate(45 459.0 181.0)"/><line x1="459.0" y1="181.0" x2="459.0" y2="174.52" stroke="#fff" stroke-width="3.2" stroke-linecap="round" transform="rotate(90 459.0 181.0)"/><line x1="459.0" y1="181.0" x2="459.0" y2="174.52" stroke="#fff" stroke-width="3.2" stroke-linecap="round" transform="rotate(135 459.0 181.0)"/><line x1="459.0" y1="181.0" x2="459.0" y2="174.52" stroke="#fff" stroke-width="3.2" stroke-linecap="round" transform="rotate(180 459.0 181.0)"/><line x1="459.0" y1="181.0" x2="459.0" y2="174.52" stroke="#fff" stroke-width="3.2" stroke-linecap="round" transform="rotate(225 459.0 181.0)"/><line x1="459.0" y1="181.0" x2="459.0" y2="174.52" stroke="#fff" stroke-width="3.2" stroke-linecap="round" transform="rotate(270 459.0 181.0)"/><line x1="459.0" y1="181.0" x2="459.0" y2="174.52" stroke="#fff" stroke-width="3.2" stroke-linecap="round" transform="rotate(315 459.0 181.0)"/><g opacity="0.55"><path d="M510,185 L514,168 L535,142 L543,148 L521,172 Z" fill="#6a6560" stroke="#777" stroke-width="1"/><path d="M519,189 L523,172 L546,144 L554,150 L531,176 Z" fill="#6a6560" stroke="#777" stroke-width="1"/><path d="M533,142 L539,138 L546,143 L541,148 Z M544,144 L550,140 L556,145 L551,150 Z" fill="#8c8c8c"/></g><path d="M549,181.5 H557 L553,188.5 Z" fill="#9a9a9a"/><path d="M581,189 L584,176 L602,147 L611,152 L593,181 Z" fill="#e8d020" stroke="#8a7a00" stroke-width="1.4"/><path d="M589,177 L606,149" stroke="#fff8a0" stroke-width="2.5"/><path d="M600,145 L604,141 L613,147 L610,152 Z" fill="#f4f4f4" stroke="#999" stroke-width="1"/><path d="M581,189 L584,176 L593,181 Z" fill="#e8e8e8" stroke="#555" stroke-width="1"/><path d="M581,189 L582.5,184 L585.5,186 Z" fill="#222"/><g opacity="0.5"><rect x="644" y="145.5" width="37" height="37" rx="3" fill="#868686"/><rect x="650" y="147" width="24" height="15" fill="#9a9a9a"/><rect x="652" y="170" width="22" height="12" fill="#9a9a9a"/></g><path d="M667,188 L670,178 L683,160 L688,164 L676,182 Z" fill="#6c6660" opacity="0.7"/><path d="M725,146 L749,152 L749,178 L726,184 L713,165 Z" fill="none" stroke="#848484" stroke-width="3.5" opacity="0.85"/><rect x="722" y="143" width="6" height="6" fill="#8a8a8a"/><rect x="711" y="162" width="6" height="6" fill="#8a8a8a"/><path d="M773.5,164 H781.5 L777.5,171 Z" fill="#9a9a9a"/><path d="M805,155 C803,144 818,143 826,146 C834,149 842,144 844,152 C846,160 842,168 836,166 C828,164 820,167 812,166 C806,165 805,160 805,155 Z" fill="#7c7f7c" stroke="#6a6a6a" stroke-width="1.5"/><rect x="827" y="168" width="20" height="21" rx="3" fill="#7a7668"/><g transform="translate(837,178.5)"><line x1="0" y1="0" x2="0" y2="-9" stroke="#a8a8a8" stroke-width="2" transform="rotate(0)"/><line x1="0" y1="0" x2="0" y2="-9" stroke="#a8a8a8" stroke-width="2" transform="rotate(60)"/><line x1="0" y1="0" x2="0" y2="-9" stroke="#a8a8a8" stroke-width="2" transform="rotate(120)"/><line x1="0" y1="0" x2="0" y2="-9" stroke="#a8a8a8" stroke-width="2" transform="rotate(180)"/><line x1="0" y1="0" x2="0" y2="-9" stroke="#a8a8a8" stroke-width="2" transform="rotate(240)"/><line x1="0" y1="0" x2="0" y2="-9" stroke="#a8a8a8" stroke-width="2" transform="rotate(300)"/><circle r="4" fill="#a8a8a8"/><circle r="1.8" fill="#7a7668"/></g><rect x="878.5" y="148.5" width="11" height="11" fill="#6a6a6a"/><path d="M880.5,150.5 L887.5,157.5 M887.5,150.5 L880.5,157.5" stroke="#a0a0a0" stroke-width="1.6"/><path d="M889.5,154 H910 M882,159.5 L874,184" stroke="#666" stroke-width="1.2"/><path d="M898,174 L890.5,184.5" stroke="#7a7668" stroke-width="5.5" stroke-linecap="round"/><path d="M901.5,171.5 L911,162" stroke="#8e8e8e" stroke-width="1.6"/><path d="M896,172 L908,184.5" stroke="#7a7668" stroke-width="5.5" stroke-linecap="round"/><path d="M888,166.5 C891,161 897,160 902,164 L894,172.5 Z" fill="#8c8c8c"/><path d="M933,163.5 H941 L937,171 Z" fill="#9a9a9a"/><g fill="#7a776c" stroke="#6e6c66" stroke-width="1"><rect x="965" y="147" width="38" height="10"/><rect x="965" y="161" width="38" height="10"/><rect x="965" y="175" width="38" height="10"/></g><path d="M976,189 L978,177 L995,145 L1003,149 L986,182 Z" fill="#5e5a58" stroke="#555" stroke-width="1"/><path d="M994,144 L997,139 L1005,144 L1002,149 Z" fill="#8c8c8c"/><rect x="1033" y="147" width="25" height="30" fill="none" stroke="#7a776c" stroke-width="1.5"/><path d="M1036,153 H1070 M1045,150 H1062" stroke="#7e6666" stroke-width="3"/><path d="M1039,157 H1068 L1066,189 H1041 Z" fill="#867070" stroke="#7a6060" stroke-width="1.5"/><path d="M1046,161 V185 M1053,161 V185 M1060,161 V185" stroke="#8e8484" stroke-width="3"/><path d="M1106,153 L1128,166 M1100,164 C1112,167 1120,165 1126,163" fill="none" stroke="#8e8e8e" stroke-width="2"/><ellipse cx="1135" cy="159" rx="8" ry="5" fill="none" stroke="#7a6a6a" stroke-width="2.5" transform="rotate(-35 1135 159)"/><ellipse cx="1134" cy="172" rx="8" ry="5" fill="none" stroke="#7a6a6a" stroke-width="2.5" transform="rotate(35 1134 172)"/><path d="M1181,147 H1197 L1203,153 V176 H1181 Z" fill="#8a8a8a" stroke="#7a7a7a" stroke-width="1"/><path d="M1173,155 H1187 L1195,163 V185 H1173 Z" fill="#9e9e9e" stroke="#6a6a6a" stroke-width="1.6"/><path d="M1176,165 H1191 M1176,169 H1191 M1176,173 H1187 M1176,177 H1191 M1176,181 H1191" stroke="#6e6e6e" stroke-width="1.6"/><rect x="1242" y="148" width="28" height="35" fill="none" stroke="#7e7b70" stroke-width="1.5"/><path d="M1243,150 V183 H1267" fill="none" stroke="#6a6a6a" stroke-width="2"/><rect x="1248" y="145.5" width="16" height="7" fill="#8c8c8c"/><path d="M1246,154 H1259 L1266,160 V181 H1246 Z" fill="#9e9e9e" stroke="#6a6a6a" stroke-width="1.4"/><path d="M1249,163 H1262 M1249,167 H1262 M1249,171 H1257 M1249,175 H1262 M1249,179 H1262" stroke="#6e6e6e" stroke-width="1.5"/><rect x="1353.5" y="135.5" width="88" height="63" rx="8" fill="url(#selg)" stroke="#333" stroke-width="2.5"/><path d="M1413,136 V198" stroke="#333" stroke-width="2"/><rect x="1414" y="137" width="26" height="60" rx="6" fill="#a6a6a6"/><path d="M1423,165 H1431 L1427,171 Z" fill="#bdbdbd"/><rect x="1363" y="145" width="42" height="38" fill="#e8e8e8" stroke="#333" stroke-width="1.5" stroke-dasharray="3 2"/><rect x="1364.5" y="146.5" width="27" height="26.5" fill="#fde74c" stroke="#c9a200" stroke-width="2"/><path d="M1379,159 L1380,183 L1386,178 L1391,188 L1396,186 L1391,176 L1405,175 Z" fill="#fff" stroke="#000" stroke-width="1.6" stroke-linejoin="round"/><path d="M1456.5,148 L1494,185 H1456.5 Z" fill="#fde74c" stroke="#c9a200" stroke-width="2"/><path d="M1460,146.5 H1495.5 V182 Z" fill="#ececec"/><path d="M1459,146 L1496,183" stroke="#8a8a8a" stroke-width="3"/><path d="M1517,164.5 H1525 L1521,171 Z" fill="#b4b4b4"/><rect x="1548" y="146.5" width="27" height="26" fill="#fde74c" stroke="#c9a200" stroke-width="2"/><rect x="1556" y="154.5" width="27" height="26" fill="#fde74c" stroke="#c9a200" stroke-width="2"/><rect x="1570" y="168" width="22" height="21.5" rx="2.5" fill="#d80e0e"/><circle cx="1581" cy="178.8" r="6.8" fill="#fff"/><circle cx="1581" cy="178.8" r="4.3" fill="#e87070"/><path d="M1576,183.5 L1586,174" stroke="#fff" stroke-width="2.4"/><path d="M1608.5,164.5 H1616.5 L1612.5,171 Z" fill="#b4b4b4"/><rect x="1640.5" y="146" width="27" height="27" fill="#fde74c" stroke="#c9a200" stroke-width="2"/><path d="M1675,187 L1669,176 A7,7 0 1 1 1681,176 Z" fill="none" stroke="#6d8fb0" stroke-width="2.2"/><circle cx="1675" cy="172" r="2.5" fill="none" stroke="#6d8fb0" stroke-width="1.5"/><rect x="551" y="212" width="19" height="19" rx="5" fill="#6e6c68" stroke="#333" stroke-width="1.6"/><path d="M555.5,216.5 L565.5,226.5 M565.5,216.5 L555.5,226.5" stroke="#333" stroke-width="2.6" stroke-linecap="round"/><rect x="551" y="772" width="19" height="19" rx="5" fill="#6e6c68" stroke="#333" stroke-width="1.6"/><path d="M555.5,776.5 L565.5,786.5 M565.5,776.5 L555.5,786.5" stroke="#333" stroke-width="2.6" stroke-linecap="round"/><rect x="9" y="259" width="22" height="22" fill="#efefef" stroke="#8a8a8a" stroke-width="2"/><rect x="24" y="276" width="12" height="12" rx="2" fill="#5a9a5a"/><path d="M30.0,278.5 V285.5 M26.5,282.0 H33.5" stroke="#fff" stroke-width="2.2"/><g transform="translate(60,258) scale(1)"><path d="M1,18 C0,4 16,-3 25,8 L27,1 V15 H14 L19,11 C13,5 5,8 1,18 Z" fill="#5b93d3" stroke="#3a6eb0" stroke-width="0.8"/><path d="M27,11 C28,25 12,32 3,21 L1,28 V14 H14 L9,18 C15,24 23,21 27,11 Z" fill="#5b93d3" stroke="#3a6eb0" stroke-width="0.8"/></g><path d="M114,258 H138 V264 L129,274 V287 L123,284 V274 L114,264 Z" fill="#6c9bd2" stroke="#2f4660" stroke-width="1.3"/><rect x="114.5" y="258.5" width="23" height="4.5" fill="#f4e23a"/><path d="M165,261 H183 M168,261 V283 M168,269 H173 M168,281 H173" stroke="#aaa" stroke-width="2" fill="none"/><rect x="172" y="265" width="7" height="7" fill="#f59a1a"/><rect x="172" y="277" width="7" height="7" fill="#f59a1a"/><path d="M181,283 H188 V269 H193 L184.5,258 L176,269 H181 Z" fill="#6c9bd2" stroke="#2f4660" stroke-width="1.5"/><circle cx="230" cy="271.5" r="12.5" fill="#6c9bd2" stroke="#2f4660" stroke-width="1.3"/><circle cx="231.5" cy="265" r="2" fill="#fff"/><path d="M228,269 H232 L229,279 H232" fill="none" stroke="#fff" stroke-width="2.5" stroke-linejoin="round"/><path d="M8,834 L14,822 L26,826 L21,840 Z" fill="#e8c020"/><path d="M8,834 L12,826 L24,830 L20,838 Z" fill="#6c9bd2"/><path d="M8,834 L10,830 L22,834 L20,844 Z" fill="#e03a3a"/><path d="M14,834 L24,826 L30,834 L22,844 Z" fill="#d8b878" stroke="#a07030" stroke-width="1"/><path d="M25,829 L36,820" stroke="#c08020" stroke-width="3" stroke-linecap="round"/><path d="M61,847 V828 H66 M61,847 H80" fill="none" stroke="#8a8a8a" stroke-width="1.5"/><rect x="66" y="822" width="20" height="20" fill="#efefef" stroke="#8a8a8a" stroke-width="2"/><path d="M75,840 V819 C75,815 80,815 80,819 V836" fill="none" stroke="#2f4660" stroke-width="1.8"/><rect x="75" y="834" width="13" height="13" rx="2" fill="#5a9a5a"/><path d="M81.5,836.5 V844.5 M77.5,840.5 H85.5" stroke="#fff" stroke-width="2.2"/><path d="M112,832 C119,820 135,820 142,832 C135,843 119,843 112,832 Z" fill="#f4f4f4" stroke="#888" stroke-width="1"/><path d="M111,825 C120,818 132,818 140,823" fill="none" stroke="#aaa" stroke-width="1.2"/><circle cx="125.5" cy="831.5" r="7" fill="#6c9bd2" stroke="#2f4660" stroke-width="1"/><circle cx="125.5" cy="831.5" r="3.2" fill="#111"/><circle cx="124" cy="829.5" r="1.2" fill="#fff"/><path d="M139,839 H147 L143,846 Z" fill="#b0b0b0"/><path d="M166,818 H190 V824 L181,834 V847 L175,844 V834 L166,824 Z" fill="#6c9bd2" stroke="#2f4660" stroke-width="1.3"/><rect x="166.5" y="818.5" width="23" height="4.5" fill="#f4e23a"/><path d="M191,839 H199 L195,846 Z" fill="#b0b0b0"/><text x="218" y="838" font-family="Liberation Serif" font-size="24" fill="#6a6a6a">ε</text><path d="M230,834 H246 L240,840 V848 H236 V840 Z" fill="#7c7c7c"/><path d="M263,829 H271 L267,836 Z" fill="#b0b0b0"/><path d="M293,822 H311 M296,822 V844 M296,830 H301 M296,842 H301" stroke="#aaa" stroke-width="2" fill="none"/><rect x="300" y="826" width="7" height="7" fill="#f59a1a"/><rect x="300" y="838" width="7" height="7" fill="#f59a1a"/><path d="M309,820 H316 V834 H321 L312.5,844 L304,834 H309 Z" fill="#6c9bd2" stroke="#2f4660" stroke-width="1.5"/><path d="M345,822 H363 M348,822 V844 M348,830 H353 M348,842 H353" stroke="#aaa" stroke-width="2" fill="none"/><rect x="352" y="826" width="7" height="7" fill="#f59a1a"/><rect x="352" y="838" width="7" height="7" fill="#f59a1a"/><path d="M361,844 H368 V830 H373 L364.5,819 L356,830 H361 Z" fill="#6c9bd2" stroke="#2f4660" stroke-width="1.5"/><rect x="397" y="819" width="23" height="23" fill="#efefef" stroke="#8a8a8a" stroke-width="2"/><rect x="410" y="836" width="14" height="10" rx="2" fill="#e02a3a"/><path d="M413,841 H421" stroke="#fff" stroke-width="2.2"/><clipPath id="treeclip"><rect x="0" y="308" width="553" height="423"/></clipPath><g clip-path="url(#treeclip)"><path d="M105,323.5 H115 L110,332.5 Z" fill="#6a6a6a"/><path d="M137,359 L146.5,364 L137,369 Z" fill="#6a6a6a"/><path d="M105,395.5 H115 L110,404.5 Z" fill="#6a6a6a"/><path d="M137,431 L146.5,436 L137,441 Z" fill="#6a6a6a"/><path d="M137,467 L146.5,472 L137,477 Z" fill="#6a6a6a"/><path d="M137,503 L146.5,508 L137,513 Z" fill="#6a6a6a"/><path d="M137,575 L146.5,580 L137,585 Z" fill="#6a6a6a"/><path d="M137,611 L146.5,616 L137,621 Z" fill="#6a6a6a"/><path d="M105,647 L114.5,652 L105,657 Z" fill="#6a6a6a"/><path d="M105,683 L114.5,688 L105,693 Z" fill="#6a6a6a"/><path d="M105,719 L114.5,724 L105,729 Z" fill="#6a6a6a"/><path d="M135,315 H147 L150,318 H161 V324 H135 Z" fill="#8e8e88" /><path d="M135,324 H146 L149,320 H161 V341 H135 Z" fill="#efefef" stroke="#8e8e88" stroke-width="1.8"/><path d="M168,357 L179,350 H192 M179,350 L172,370" fill="none" stroke="#8a8a88" stroke-width="1.4"/><circle cx="169" cy="357" r="2" fill="#efefef" stroke="#8a8a88" stroke-width="1.2"/><circle cx="179" cy="350" r="2" fill="#efefef" stroke="#8a8a88" stroke-width="1.2"/><circle cx="192" cy="350" r="2" fill="#efefef" stroke="#8a8a88" stroke-width="1.2"/><path d="M180,372 C176,366 186,358 192,360 C196,362 194,372 186,373 Z" fill="#ddd" stroke="#8a8a88" stroke-width="1.4"/><path d="M136.5,391.5 V408 C136.5,412 159.5,412 159.5,408 V391.5" fill="#efefef" stroke="#8a8a88" stroke-width="1.6"/><ellipse cx="148" cy="391.5" rx="11.5" ry="3.5" fill="#efefef" stroke="#8a8a88" stroke-width="1.6"/><path d="M136.5,399.5 C136.5,403.5 159.5,403.5 159.5,399.5" fill="none" stroke="#8a8a88" stroke-width="1.6"/><path d="M167,427.0 Q179,432.5 192.6,426.5 Q197.5,433.5 193.8,441.0 Q181,436.5 167,445.5 Q162.5,435.5 167,427.0 Z" fill="url(#polyg)" stroke="#8a8a88" stroke-width="1.6" stroke-linejoin="round"/><path d="M167,463.0 Q179,468.5 192.6,462.5 Q197.5,469.5 193.8,477.0 Q181,472.5 167,481.5 Q162.5,471.5 167,463.0 Z" fill="url(#polyg)" stroke="#8a8a88" stroke-width="1.6" stroke-linejoin="round"/><path d="M167,499.0 Q179,504.5 192.6,498.5 Q197.5,505.5 193.8,513.0 Q181,508.5 167,517.5 Q162.5,507.5 167,499.0 Z" fill="url(#polyg)" stroke="#8a8a88" stroke-width="1.6" stroke-linejoin="round"/><circle cx="179" cy="543" r="11" fill="none" stroke="#6aab2a" stroke-width="4.5"/><path d="M183,547 L191,556" stroke="#5a9a20" stroke-width="4.5" stroke-linecap="round"/><path d="M175,539 L184,545 L179,548 Z" fill="#ee6a2a"/><path d="M180,545 L186,548 L183,551 Z" fill="#f4c020"/><path d="M168,572 L175,594 L183,572 H193" fill="none" stroke="#8a8a88" stroke-width="1.4"/><g fill="#e6e6e6" stroke="#8a8a88" stroke-width="1.2"><circle cx="168" cy="572" r="2.2"/><circle cx="175" cy="594" r="2.2"/><circle cx="183" cy="572" r="2.2"/><circle cx="193" cy="572" r="2.2"/></g><path d="M168,606 L175,628 L183,606 H193" fill="none" stroke="#8a8a88" stroke-width="1.4"/><g fill="#e6e6e6" stroke="#8a8a88" stroke-width="1.2"><circle cx="168" cy="606" r="2.2"/><circle cx="175" cy="628" r="2.2"/><circle cx="183" cy="606" r="2.2"/><circle cx="193" cy="606" r="2.2"/></g><rect x="134" y="639" width="27" height="27" fill="#efefef" stroke="#8a8a88" stroke-width="1.6"/><rect x="146.5" y="640" width="2.5" height="2" fill="#444"/><rect x="149" y="641.5" width="2" height="2" fill="#444"/><rect x="146.5" y="643" width="2.5" height="2" fill="#444"/><rect x="149" y="644.5" width="2" height="2" fill="#444"/><rect x="146.5" y="646" width="2.5" height="2" fill="#444"/><rect x="149" y="647.5" width="2" height="2" fill="#444"/><rect x="146.5" y="649" width="2.5" height="2" fill="#444"/><rect x="149" y="650.5" width="2" height="2" fill="#444"/><rect x="146.5" y="652" width="2.5" height="2" fill="#444"/><rect x="149" y="653.5" width="2" height="2" fill="#444"/><circle cx="148" cy="660" r="3.2" fill="none" stroke="#444" stroke-width="1.8"/><rect x="134" y="675" width="27" height="27" fill="#efefef" stroke="#8a8a88" stroke-width="1.6"/><rect x="146.5" y="676" width="2.5" height="2" fill="#444"/><rect x="149" y="677.5" width="2" height="2" fill="#444"/><rect x="146.5" y="679" width="2.5" height="2" fill="#444"/><rect x="149" y="680.5" width="2" height="2" fill="#444"/><rect x="146.5" y="682" width="2.5" height="2" fill="#444"/><rect x="149" y="683.5" width="2" height="2" fill="#444"/><rect x="146.5" y="685" width="2.5" height="2" fill="#444"/><rect x="149" y="686.5" width="2" height="2" fill="#444"/><rect x="146.5" y="688" width="2.5" height="2" fill="#444"/><rect x="149" y="689.5" width="2" height="2" fill="#444"/><circle cx="148" cy="696" r="3.2" fill="none" stroke="#444" stroke-width="1.8"/><rect x="134" y="711" width="27" height="27" fill="#efefef" stroke="#8a8a88" stroke-width="1.6"/><rect x="146.5" y="712" width="2.5" height="2" fill="#444"/><rect x="149" y="713.5" width="2" height="2" fill="#444"/><rect x="146.5" y="715" width="2.5" height="2" fill="#444"/><rect x="149" y="716.5" width="2" height="2" fill="#444"/><rect x="146.5" y="718" width="2.5" height="2" fill="#444"/><rect x="149" y="719.5" width="2" height="2" fill="#444"/><rect x="146.5" y="721" width="2.5" height="2" fill="#444"/><rect x="149" y="722.5" width="2" height="2" fill="#444"/><rect x="146.5" y="724" width="2.5" height="2" fill="#444"/><rect x="149" y="725.5" width="2" height="2" fill="#444"/><circle cx="148" cy="732" r="3.2" fill="none" stroke="#444" stroke-width="1.8"/></g><rect x="44" y="877.5" width="26" height="26" rx="6" fill="#b8b8b8" stroke="#3a3a3a" stroke-width="1.6"/><path d="M49,890.5 L55.5,897.5 L65,882.5" fill="none" stroke="#333" stroke-width="2.8" stroke-linejoin="round" stroke-linecap="round"/><rect x="44" y="921.5" width="26" height="26" rx="6" fill="#b8b8b8" stroke="#3a3a3a" stroke-width="1.6"/><path d="M49,934.5 L55.5,941.5 L65,926.5" fill="none" stroke="#333" stroke-width="2.8" stroke-linejoin="round" stroke-linecap="round"/><rect x="44" y="965.5" width="26" height="26" rx="6" fill="#b8b8b8" stroke="#3a3a3a" stroke-width="1.6"/><path d="M84,890 H116" stroke="#a6a6b6" stroke-width="1.2"/><rect x="84.5" y="918.5" width="31" height="31" fill="#b9474f" stroke="#5a2a2a" stroke-width="1"/><rect x="84.5" y="962.5" width="31" height="31" fill="#fe9e17" stroke="#7a5a20" stroke-width="1"/><circle cx="28.5" cy="1267" r="7.5" fill="none" stroke="#8c8c8c" stroke-width="2.2"/><path d="M34,1272.5 L41,1279.5" stroke="#8c8c8c" stroke-width="2.6" stroke-linecap="round"/><path d="M321,1258 C326,1257 329,1259 331,1263 C333,1259 336,1257 341,1258 M331,1263 V1292 M326,1283 H336" fill="none" stroke="#fff" stroke-width="5"/><path d="M321,1258 C326,1257 329,1259 331,1263 C333,1259 336,1257 341,1258 M331,1263 V1292 M326,1283 H336" fill="none" stroke="#000" stroke-width="2.4"/><g transform="rotate(-30 787 1269)"><rect x="779" y="1255" width="15" height="26" rx="7.5" fill="#fff" stroke="#111" stroke-width="2"/><path d="M786.5,1259 V1266" stroke="#111" stroke-width="2.5"/><circle cx="786.5" cy="1275" r="3" fill="none" stroke="#111" stroke-width="1.5"/></g><path d="M795,1261 L801,1256 M772,1282 L776,1279" stroke="#222" stroke-width="1.4" stroke-dasharray="2 2"/><path d="M1021,1266 H1028 L1024.5,1273 Z" fill="#d8d8d8"/><path d="M1066,1271 V1265 C1066,1255 1082,1255 1082,1265 V1271" fill="none" stroke="#e8e8e8" stroke-width="2.6"/><rect x="1062" y="1270.5" width="24" height="15" rx="3" fill="#5f5f5f"/><path d="M1347,1263 L1351,1256 L1355,1263 Z M1347,1279 L1351,1286 L1355,1279 Z" fill="#c4c4c4"/><path d="M1627,1263 L1631,1256 L1635,1263 Z M1627,1279 L1631,1286 L1635,1279 Z" fill="#c4c4c4"/><path d="M1665,1270 L1671,1277 L1681,1262" fill="none" stroke="#333" stroke-width="2.8" stroke-linejoin="round" stroke-linecap="round"/><circle cx="1816" cy="1269.5" r="11.5" fill="#e8e8e8" stroke="#777" stroke-width="0.8"/><path d="M1804.5,1269.5 H1827.5 M1816,1258 V1281 M1806,1263.5 H1826 M1806,1275.5 H1826 M1816,1258 C1808,1264 1808,1275 1816,1281 M1816,1258 C1824,1264 1824,1275 1816,1281" fill="none" stroke="#6a6a6a" stroke-width="1.3"/><ellipse cx="2018" cy="1269" rx="15.5" ry="12.5" fill="#606060"/><path d="M2020,1279 L2030,1286 L2026,1276 Z" fill="#606060"/><circle cx="2010.5" cy="1269" r="2.4" fill="#fff"/><circle cx="2018" cy="1269" r="2.4" fill="#fff"/><circle cx="2025.5" cy="1269" r="2.4" fill="#fff"/><rect x="94.5" y="372" width="417" height="270" rx="2" fill="none" stroke="#fd2d6d" stroke-width="6"/><rect x="154.5" y="521" width="303" height="50" rx="2" fill="none" stroke="#fd2d6d" stroke-width="6"/></svg>
</body></html>
